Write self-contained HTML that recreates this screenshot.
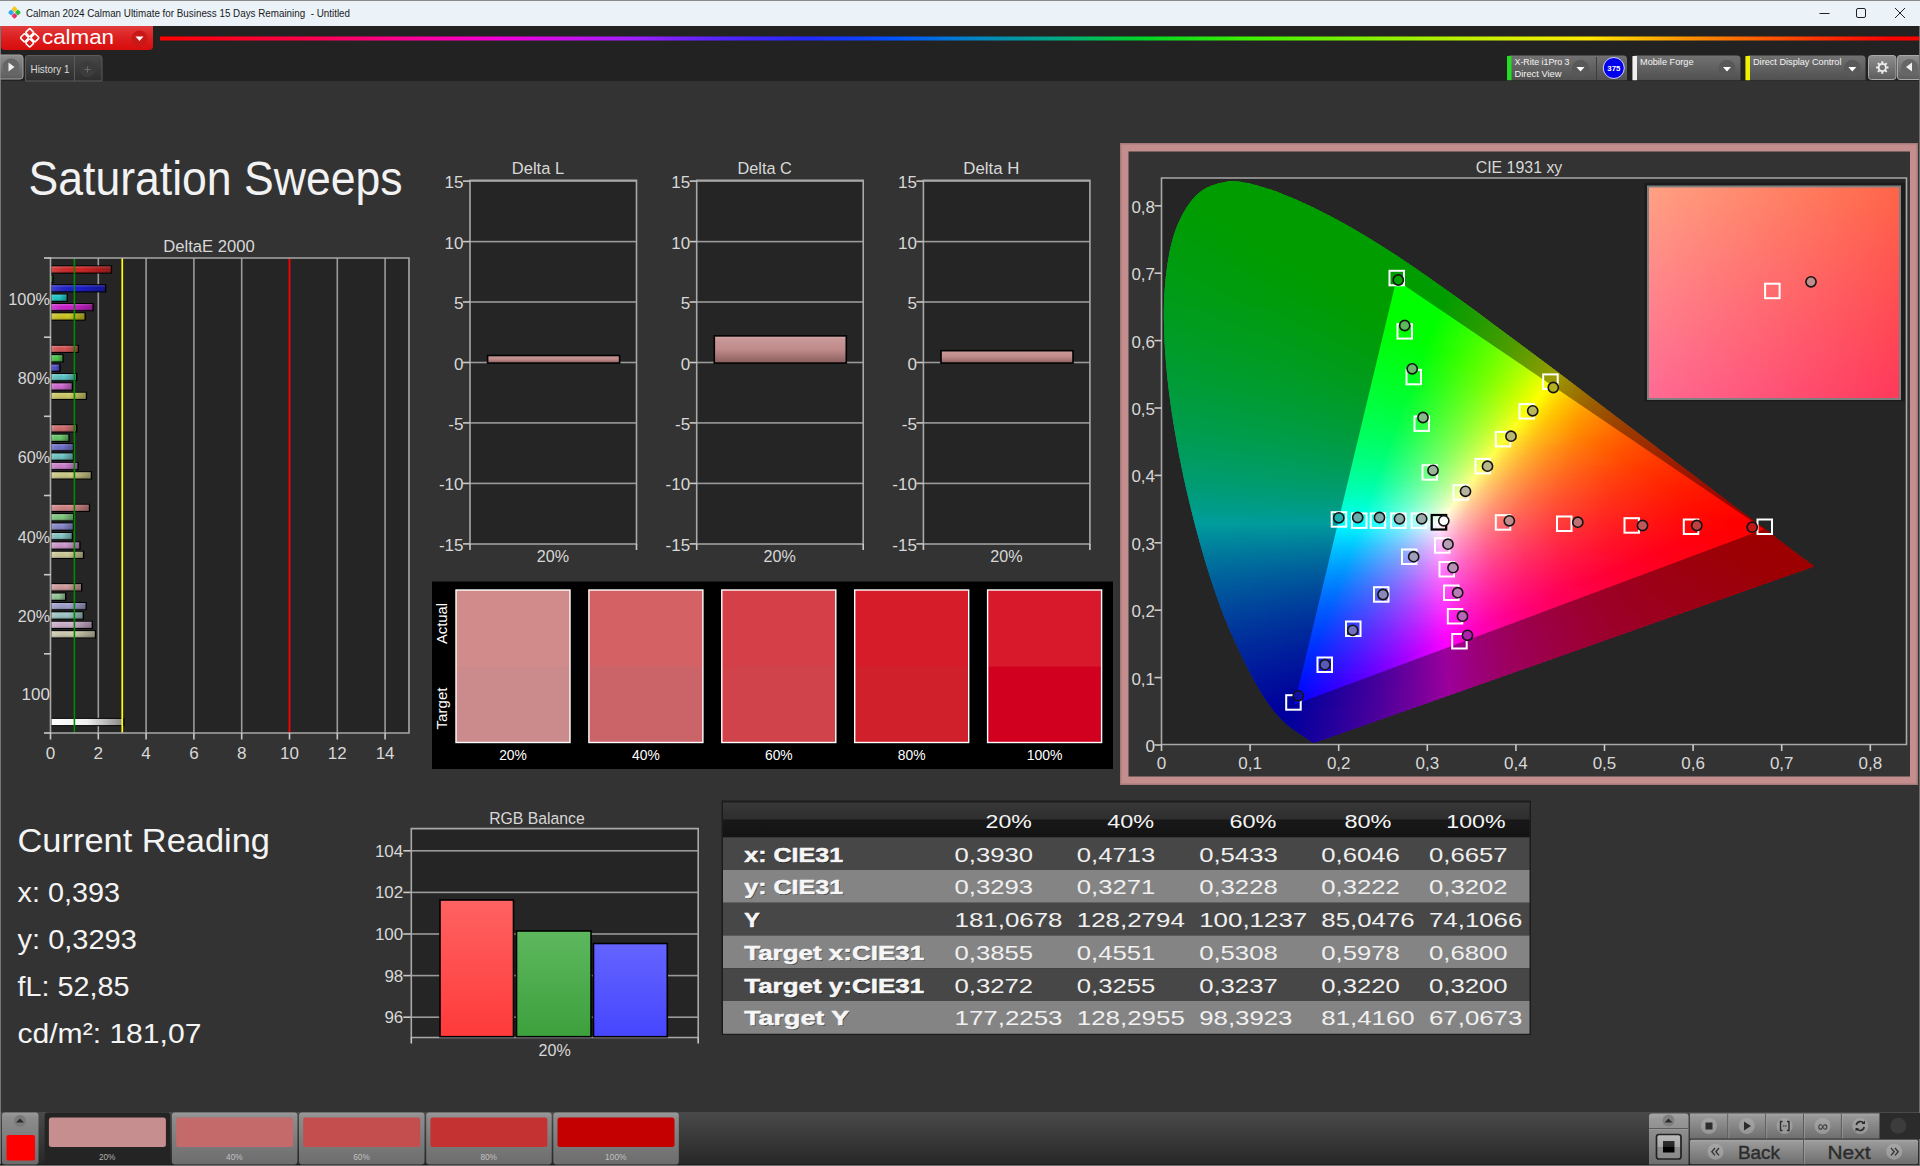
<!DOCTYPE html>
<html><head><meta charset="utf-8"><title>Calman</title><style>html,body{margin:0;padding:0;background:#333;overflow:hidden}svg{display:block}text{font-family:"Liberation Sans",sans-serif}</style></head><body>
<svg width="1920" height="1166" viewBox="0 0 1920 1166">
<defs>
<linearGradient id="rb" x1="0" x2="1"><stop offset="0" stop-color="#ff0000"/><stop offset="0.08" stop-color="#ff0048"/><stop offset="0.136" stop-color="#ff0090"/><stop offset="0.193" stop-color="#f400d8"/><stop offset="0.269" stop-color="#a020ff"/><stop offset="0.318" stop-color="#5424ff"/><stop offset="0.368" stop-color="#2428ff"/><stop offset="0.415" stop-color="#0050ff"/><stop offset="0.463" stop-color="#0084c4"/><stop offset="0.51" stop-color="#00a884"/><stop offset="0.557" stop-color="#00d428"/><stop offset="0.62" stop-color="#40f000"/><stop offset="0.7" stop-color="#90f000"/><stop offset="0.761" stop-color="#d0f000"/><stop offset="0.8125" stop-color="#ffe800"/><stop offset="0.869" stop-color="#ff9000"/><stop offset="0.932" stop-color="#ff4000"/><stop offset="0.983" stop-color="#ff0000"/><stop offset="1" stop-color="#ff0000"/></linearGradient>
<linearGradient id="redtab" x1="0" x2="0" y1="0" y2="1"><stop offset="0" stop-color="#e23c3c"/><stop offset=".5" stop-color="#dc1f1f"/><stop offset="1" stop-color="#d80c0c"/></linearGradient>
<linearGradient id="btn" x1="0" x2="0" y1="0" y2="1"><stop offset="0" stop-color="#8e8e8e"/><stop offset="1" stop-color="#5c5c5c"/></linearGradient>
<linearGradient id="tab" x1="0" x2="0" y1="0" y2="1"><stop offset="0" stop-color="#484848"/><stop offset="1" stop-color="#2e2e2e"/></linearGradient>
<linearGradient id="wid" x1="0" x2="0" y1="0" y2="1"><stop offset="0" stop-color="#727272"/><stop offset="1" stop-color="#505050"/></linearGradient>
<linearGradient id="gloss" x1="0" x2="0" y1="0" y2="1"><stop offset="0" stop-color="#fff" stop-opacity=".25"/><stop offset=".45" stop-color="#fff" stop-opacity="0"/><stop offset="1" stop-color="#000" stop-opacity=".25"/></linearGradient>
<linearGradient id="hsh" x1="0" x2="1"><stop offset="0" stop-color="#fff" stop-opacity=".15"/><stop offset=".5" stop-color="#000" stop-opacity="0"/><stop offset="1" stop-color="#000" stop-opacity=".3"/></linearGradient>
<linearGradient id="wbar" x1="0" x2="1"><stop offset="0" stop-color="#ffffff"/><stop offset=".5" stop-color="#f0f0f0"/><stop offset="1" stop-color="#8a8a8a"/></linearGradient>
<linearGradient id="pinkbar" x1="0" x2="0" y1="0" y2="1"><stop offset="0" stop-color="#e2b4b6"/><stop offset=".1" stop-color="#c89898"/><stop offset=".5" stop-color="#c08a8a"/><stop offset="1" stop-color="#8a5e5e"/></linearGradient>
<linearGradient id="pinkb" x1="0" x2="0" y1="0" y2="1"><stop offset="0" stop-color="#c89090"/><stop offset="1" stop-color="#b88484"/></linearGradient>
<clipPath id="hs"><path d="M1315.4 742.6C1315.4 742.6 1315.3 742.6 1315.1 742.7C1315.0 742.7 1314.9 742.7 1314.7 742.7C1314.5 742.7 1314.4 742.8 1314.1 742.7C1313.8 742.7 1313.6 742.8 1313.0 742.5C1312.5 742.3 1311.8 742.0 1310.8 741.3C1309.8 740.7 1308.6 739.8 1306.8 738.6C1305.0 737.4 1301.8 735.3 1299.8 734.0C1297.9 732.7 1296.7 732.0 1294.9 730.6C1293.0 729.3 1290.9 727.8 1288.6 725.9C1286.3 723.9 1284.0 722.1 1281.1 719.0C1278.1 715.8 1274.8 712.2 1270.9 706.9C1267.1 701.6 1262.9 695.7 1258.0 687.2C1253.2 678.8 1247.8 669.0 1241.8 656.2C1235.7 643.3 1228.5 628.5 1221.7 610.2C1214.9 591.9 1207.6 570.3 1200.9 546.4C1194.2 522.4 1187.0 494.2 1181.5 466.7C1175.9 439.3 1170.7 409.0 1167.8 381.6C1164.9 354.3 1163.2 326.8 1164.0 302.9C1164.9 279.0 1167.7 256.1 1172.9 238.3C1178.1 220.6 1186.2 205.9 1195.1 196.5C1204.1 187.1 1215.5 183.4 1226.6 181.8C1237.8 180.1 1250.2 183.7 1262.1 186.9C1274.1 190.0 1286.5 195.6 1298.2 200.6C1309.8 205.7 1321.0 211.3 1332.1 217.1C1343.2 222.9 1354.0 229.1 1364.8 235.5C1375.6 242.0 1386.3 248.9 1397.0 255.8C1407.7 262.8 1418.2 270.1 1428.8 277.5C1439.4 284.9 1450.0 292.5 1460.6 300.1C1471.2 307.8 1481.8 315.6 1492.4 323.4C1503.0 331.2 1513.6 339.1 1524.1 347.0C1534.6 354.9 1545.2 362.8 1555.6 370.6C1566.0 378.4 1576.3 386.3 1586.5 394.0C1596.6 401.6 1606.7 409.3 1616.4 416.7C1626.2 424.1 1635.9 431.5 1645.2 438.5C1654.5 445.5 1663.6 452.4 1672.2 458.9C1680.8 465.5 1689.2 471.8 1696.9 477.7C1704.5 483.5 1711.6 488.8 1718.3 493.9C1725.0 499.0 1731.4 503.8 1737.1 508.2C1742.9 512.5 1748.1 516.4 1752.8 520.0C1757.5 523.5 1761.7 526.7 1765.5 529.6C1769.3 532.5 1772.6 535.1 1775.7 537.4C1778.7 539.7 1781.3 541.6 1783.8 543.4C1786.2 545.3 1788.3 546.9 1790.3 548.4C1792.2 549.9 1794.0 551.3 1795.7 552.5C1797.3 553.8 1798.3 554.6 1800.1 555.9C1801.9 557.2 1804.7 559.3 1806.4 560.6C1808.0 561.8 1808.6 562.3 1809.9 563.3C1811.2 564.3 1813.4 565.9 1814.1 566.5Z"/></clipPath>
<linearGradient id="s0" gradientUnits="userSpaceOnUse" x1="1160" x2="1300"><stop offset="0" stop-color="#00ff00"/><stop offset="1" stop-color="#00ff00"/></linearGradient>
<linearGradient id="s1" gradientUnits="userSpaceOnUse" x1="1160" x2="1300"><stop offset="0" stop-color="#00ff01"/><stop offset="1" stop-color="#00ff00"/></linearGradient>
<linearGradient id="s2" gradientUnits="userSpaceOnUse" x1="1183" x2="1281"><stop offset="0" stop-color="#00ff00"/><stop offset="1" stop-color="#00ff00"/></linearGradient>
<linearGradient id="s3" gradientUnits="userSpaceOnUse" x1="1178" x2="1294"><stop offset="0" stop-color="#00ff00"/><stop offset="1" stop-color="#00ff00"/></linearGradient>
<linearGradient id="s4" gradientUnits="userSpaceOnUse" x1="1174" x2="1304"><stop offset="0" stop-color="#00ff00"/><stop offset="1" stop-color="#00ff00"/></linearGradient>
<linearGradient id="s5" gradientUnits="userSpaceOnUse" x1="1170" x2="1310"><stop offset="0" stop-color="#00ff01"/><stop offset="1" stop-color="#00ff00"/></linearGradient>
<linearGradient id="s6" gradientUnits="userSpaceOnUse" x1="1166" x2="1315"><stop offset="0" stop-color="#00ff03"/><stop offset="1" stop-color="#00ff00"/></linearGradient>
<linearGradient id="s7" gradientUnits="userSpaceOnUse" x1="1161" x2="1320"><stop offset="0" stop-color="#00ff04"/><stop offset="0.1509" stop-color="#00ff00"/><stop offset="1" stop-color="#00ff00"/></linearGradient>
<linearGradient id="s8" gradientUnits="userSpaceOnUse" x1="1157" x2="1325"><stop offset="0" stop-color="#00ff06"/><stop offset="0.1845" stop-color="#00ff00"/><stop offset="1" stop-color="#00ff00"/></linearGradient>
<linearGradient id="s9" gradientUnits="userSpaceOnUse" x1="1155" x2="1331"><stop offset="0" stop-color="#00ff07"/><stop offset="0.2102" stop-color="#00ff00"/><stop offset="1" stop-color="#00ff00"/></linearGradient>
<linearGradient id="s10" gradientUnits="userSpaceOnUse" x1="1154" x2="1336"><stop offset="0" stop-color="#00ff08"/><stop offset="0.2253" stop-color="#00ff00"/><stop offset="1" stop-color="#00ff00"/></linearGradient>
<linearGradient id="s11" gradientUnits="userSpaceOnUse" x1="1153" x2="1340"><stop offset="0" stop-color="#00ff08"/><stop offset="0.2406" stop-color="#00ff00"/><stop offset="1" stop-color="#00ff00"/></linearGradient>
<linearGradient id="s12" gradientUnits="userSpaceOnUse" x1="1152" x2="1345"><stop offset="0" stop-color="#00ff09"/><stop offset="0.2539" stop-color="#00ff00"/><stop offset="1" stop-color="#00ff00"/></linearGradient>
<linearGradient id="s13" gradientUnits="userSpaceOnUse" x1="1151" x2="1349"><stop offset="0" stop-color="#00ff0a"/><stop offset="0.2727" stop-color="#00ff00"/><stop offset="1" stop-color="#00ff00"/></linearGradient>
<linearGradient id="s14" gradientUnits="userSpaceOnUse" x1="1149" x2="1353"><stop offset="0" stop-color="#00ff0b"/><stop offset="0.2892" stop-color="#00ff00"/><stop offset="1" stop-color="#00ff00"/></linearGradient>
<linearGradient id="s15" gradientUnits="userSpaceOnUse" x1="1148" x2="1357"><stop offset="0" stop-color="#00ff0c"/><stop offset="0.3014" stop-color="#00ff00"/><stop offset="1" stop-color="#00ff00"/></linearGradient>
<linearGradient id="s16" gradientUnits="userSpaceOnUse" x1="1147" x2="1361"><stop offset="0" stop-color="#00ff0d"/><stop offset="0.3178" stop-color="#00ff00"/><stop offset="1" stop-color="#00ff00"/></linearGradient>
<linearGradient id="s17" gradientUnits="userSpaceOnUse" x1="1146" x2="1365"><stop offset="0" stop-color="#00ff0e"/><stop offset="0.3288" stop-color="#00ff00"/><stop offset="1" stop-color="#00ff00"/></linearGradient>
<linearGradient id="s18" gradientUnits="userSpaceOnUse" x1="1145" x2="1369"><stop offset="0" stop-color="#00ff0f"/><stop offset="0.3393" stop-color="#00ff00"/><stop offset="1" stop-color="#00ff00"/></linearGradient>
<linearGradient id="s19" gradientUnits="userSpaceOnUse" x1="1144" x2="1373"><stop offset="0" stop-color="#00ff0f"/><stop offset="0.3537" stop-color="#00ff00"/><stop offset="1" stop-color="#00ff00"/></linearGradient>
<linearGradient id="s20" gradientUnits="userSpaceOnUse" x1="1143" x2="1377"><stop offset="0" stop-color="#00ff10"/><stop offset="0.3632" stop-color="#00ff00"/><stop offset="1" stop-color="#00ff00"/></linearGradient>
<linearGradient id="s21" gradientUnits="userSpaceOnUse" x1="1142" x2="1380"><stop offset="0" stop-color="#00ff11"/><stop offset="0.3739" stop-color="#00ff00"/><stop offset="1" stop-color="#00ff00"/></linearGradient>
<linearGradient id="s22" gradientUnits="userSpaceOnUse" x1="1141" x2="1384"><stop offset="0" stop-color="#00ff12"/><stop offset="0.3827" stop-color="#00ff00"/><stop offset="1" stop-color="#00ff00"/></linearGradient>
<linearGradient id="s23" gradientUnits="userSpaceOnUse" x1="1140" x2="1387"><stop offset="0" stop-color="#00ff13"/><stop offset="0.3968" stop-color="#00ff00"/><stop offset="1" stop-color="#00ff00"/></linearGradient>
<linearGradient id="s24" gradientUnits="userSpaceOnUse" x1="1139" x2="1391"><stop offset="0" stop-color="#00ff14"/><stop offset="0.4048" stop-color="#00ff00"/><stop offset="1" stop-color="#00ff00"/></linearGradient>
<linearGradient id="s25" gradientUnits="userSpaceOnUse" x1="1138" x2="1395"><stop offset="0" stop-color="#00ff15"/><stop offset="0.4125" stop-color="#00ff00"/><stop offset="1" stop-color="#00ff00"/></linearGradient>
<linearGradient id="s26" gradientUnits="userSpaceOnUse" x1="1137" x2="1398"><stop offset="0" stop-color="#00ff16"/><stop offset="0.4253" stop-color="#00ff00"/><stop offset="1" stop-color="#00ff00"/></linearGradient>
<linearGradient id="s27" gradientUnits="userSpaceOnUse" x1="1136" x2="1402"><stop offset="0" stop-color="#00ff17"/><stop offset="0.4323" stop-color="#00ff00"/><stop offset="1" stop-color="#00ff00"/></linearGradient>
<linearGradient id="s28" gradientUnits="userSpaceOnUse" x1="1135" x2="1405"><stop offset="0" stop-color="#00ff18"/><stop offset="0.4407" stop-color="#00ff00"/><stop offset="1" stop-color="#00ff00"/></linearGradient>
<linearGradient id="s29" gradientUnits="userSpaceOnUse" x1="1134" x2="1408"><stop offset="0" stop-color="#00ff18"/><stop offset="0.4526" stop-color="#00ff00"/><stop offset="1" stop-color="#00ff00"/></linearGradient>
<linearGradient id="s30" gradientUnits="userSpaceOnUse" x1="1133" x2="1411"><stop offset="0" stop-color="#00ff19"/><stop offset="0.4604" stop-color="#00ff00"/><stop offset="1" stop-color="#00ff00"/></linearGradient>
<linearGradient id="s31" gradientUnits="userSpaceOnUse" x1="1133" x2="1415"><stop offset="0" stop-color="#00ff1a"/><stop offset="0.4645" stop-color="#00ff00"/><stop offset="1" stop-color="#00ff00"/></linearGradient>
<linearGradient id="s32" gradientUnits="userSpaceOnUse" x1="1133" x2="1418"><stop offset="0" stop-color="#00ff1b"/><stop offset="0.4702" stop-color="#00ff00"/><stop offset="1" stop-color="#00ff00"/></linearGradient>
<linearGradient id="s33" gradientUnits="userSpaceOnUse" x1="1132" x2="1421"><stop offset="0" stop-color="#00ff1c"/><stop offset="0.481" stop-color="#00ff00"/><stop offset="1" stop-color="#00ff00"/></linearGradient>
<linearGradient id="s34" gradientUnits="userSpaceOnUse" x1="1132" x2="1424"><stop offset="0" stop-color="#00ff1d"/><stop offset="0.4863" stop-color="#00ff00"/><stop offset="1" stop-color="#00ff00"/></linearGradient>
<linearGradient id="s35" gradientUnits="userSpaceOnUse" x1="1132" x2="1427"><stop offset="0" stop-color="#00ff1d"/><stop offset="0.4915" stop-color="#00ff00"/><stop offset="1" stop-color="#00ff00"/></linearGradient>
<linearGradient id="s36" gradientUnits="userSpaceOnUse" x1="1131" x2="1430"><stop offset="0" stop-color="#00ff1e"/><stop offset="0.5017" stop-color="#00ff00"/><stop offset="1" stop-color="#00ff00"/></linearGradient>
<linearGradient id="s37" gradientUnits="userSpaceOnUse" x1="1131" x2="1434"><stop offset="0" stop-color="#00ff1f"/><stop offset="0.505" stop-color="#00ff00"/><stop offset="1" stop-color="#00ff00"/></linearGradient>
<linearGradient id="s38" gradientUnits="userSpaceOnUse" x1="1131" x2="1437"><stop offset="0" stop-color="#00ff20"/><stop offset="0.5098" stop-color="#00ff00"/><stop offset="1" stop-color="#00ff00"/></linearGradient>
<linearGradient id="s39" gradientUnits="userSpaceOnUse" x1="1131" x2="1440"><stop offset="0" stop-color="#00ff21"/><stop offset="0.5178" stop-color="#00ff00"/><stop offset="1" stop-color="#00ff00"/></linearGradient>
<linearGradient id="s40" gradientUnits="userSpaceOnUse" x1="1130" x2="1443"><stop offset="0" stop-color="#00ff22"/><stop offset="0.524" stop-color="#00ff00"/><stop offset="1" stop-color="#00ff00"/></linearGradient>
<linearGradient id="s41" gradientUnits="userSpaceOnUse" x1="1130" x2="1446"><stop offset="0" stop-color="#00ff23"/><stop offset="0.5285" stop-color="#00ff00"/><stop offset="1" stop-color="#00ff00"/></linearGradient>
<linearGradient id="s42" gradientUnits="userSpaceOnUse" x1="1130" x2="1449"><stop offset="0" stop-color="#00ff23"/><stop offset="0.5361" stop-color="#00ff00"/><stop offset="1" stop-color="#00ff00"/></linearGradient>
<linearGradient id="s43" gradientUnits="userSpaceOnUse" x1="1130" x2="1451"><stop offset="0" stop-color="#00ff24"/><stop offset="0.5421" stop-color="#00ff00"/><stop offset="1" stop-color="#00ff00"/></linearGradient>
<linearGradient id="s44" gradientUnits="userSpaceOnUse" x1="1129" x2="1454"><stop offset="0" stop-color="#00ff25"/><stop offset="0.5477" stop-color="#00ff00"/><stop offset="1" stop-color="#00ff00"/></linearGradient>
<linearGradient id="s45" gradientUnits="userSpaceOnUse" x1="1129" x2="1457"><stop offset="0" stop-color="#00ff26"/><stop offset="0.5518" stop-color="#00ff00"/><stop offset="0.9878" stop-color="#00ff00"/><stop offset="1" stop-color="#04ff00"/></linearGradient>
<linearGradient id="s46" gradientUnits="userSpaceOnUse" x1="1129" x2="1460"><stop offset="0" stop-color="#00ff27"/><stop offset="0.5589" stop-color="#00ff00"/><stop offset="0.9758" stop-color="#00ff00"/><stop offset="1" stop-color="#08ff00"/></linearGradient>
<linearGradient id="s47" gradientUnits="userSpaceOnUse" x1="1128" x2="1463"><stop offset="0" stop-color="#00ff28"/><stop offset="0.5642" stop-color="#00ff00"/><stop offset="0.9642" stop-color="#00ff00"/><stop offset="1" stop-color="#0dff00"/></linearGradient>
<linearGradient id="s48" gradientUnits="userSpaceOnUse" x1="1128" x2="1466"><stop offset="0" stop-color="#00ff29"/><stop offset="0.568" stop-color="#00ff00"/><stop offset="0.9527" stop-color="#00ff00"/><stop offset="1" stop-color="#11ff00"/></linearGradient>
<linearGradient id="s49" gradientUnits="userSpaceOnUse" x1="1128" x2="1469"><stop offset="0" stop-color="#00ff2a"/><stop offset="0.5748" stop-color="#00ff00"/><stop offset="0.9443" stop-color="#00ff00"/><stop offset="1" stop-color="#15ff00"/></linearGradient>
<linearGradient id="s50" gradientUnits="userSpaceOnUse" x1="1128" x2="1472"><stop offset="0" stop-color="#00ff2b"/><stop offset="0.5785" stop-color="#00ff00"/><stop offset="0.9331" stop-color="#00ff00"/><stop offset="1" stop-color="#19ff00"/></linearGradient>
<linearGradient id="s51" gradientUnits="userSpaceOnUse" x1="1127" x2="1475"><stop offset="0" stop-color="#00ff2c"/><stop offset="0.5833" stop-color="#00ff00"/><stop offset="0.9224" stop-color="#00ff00"/><stop offset="1" stop-color="#1eff00"/></linearGradient>
<linearGradient id="s52" gradientUnits="userSpaceOnUse" x1="1127" x2="1478"><stop offset="0" stop-color="#00ff2d"/><stop offset="0.5897" stop-color="#00ff00"/><stop offset="0.9145" stop-color="#00ff00"/><stop offset="1" stop-color="#23ff00"/></linearGradient>
<linearGradient id="s53" gradientUnits="userSpaceOnUse" x1="1127" x2="1480"><stop offset="0" stop-color="#00ff2d"/><stop offset="0.5949" stop-color="#00ff00"/><stop offset="0.9065" stop-color="#00ff00"/><stop offset="1" stop-color="#26ff00"/></linearGradient>
<linearGradient id="s54" gradientUnits="userSpaceOnUse" x1="1126" x2="1483"><stop offset="0" stop-color="#00ff2f"/><stop offset="0.5994" stop-color="#00ff00"/><stop offset="0.8964" stop-color="#00ff00"/><stop offset="1" stop-color="#2bff00"/></linearGradient>
<linearGradient id="s55" gradientUnits="userSpaceOnUse" x1="1126" x2="1486"><stop offset="0" stop-color="#00ff2f"/><stop offset="0.6028" stop-color="#00ff00"/><stop offset="0.8861" stop-color="#00ff00"/><stop offset="1" stop-color="#30ff00"/></linearGradient>
<linearGradient id="s56" gradientUnits="userSpaceOnUse" x1="1126" x2="1489"><stop offset="0" stop-color="#00ff30"/><stop offset="0.6088" stop-color="#00ff00"/><stop offset="0.8788" stop-color="#00ff00"/><stop offset="1" stop-color="#35ff00"/></linearGradient>
<linearGradient id="s57" gradientUnits="userSpaceOnUse" x1="1126" x2="1492"><stop offset="0" stop-color="#00ff31"/><stop offset="0.612" stop-color="#00ff00"/><stop offset="0.8689" stop-color="#00ff00"/><stop offset="1" stop-color="#3aff00"/></linearGradient>
<linearGradient id="s58" gradientUnits="userSpaceOnUse" x1="1125" x2="1494"><stop offset="0" stop-color="#00ff32"/><stop offset="0.6179" stop-color="#00ff00"/><stop offset="0.8618" stop-color="#00ff00"/><stop offset="1" stop-color="#3dff00"/></linearGradient>
<linearGradient id="s59" gradientUnits="userSpaceOnUse" x1="1125" x2="1497"><stop offset="0" stop-color="#00ff33"/><stop offset="0.6237" stop-color="#00ff00"/><stop offset="0.8548" stop-color="#00ff00"/><stop offset="1" stop-color="#43ff00"/></linearGradient>
<linearGradient id="s60" gradientUnits="userSpaceOnUse" x1="1125" x2="1500"><stop offset="0" stop-color="#00ff34"/><stop offset="0.6267" stop-color="#00ff00"/><stop offset="0.8453" stop-color="#00ff00"/><stop offset="1" stop-color="#48ff00"/></linearGradient>
<linearGradient id="s61" gradientUnits="userSpaceOnUse" x1="1125" x2="1503"><stop offset="0" stop-color="#00ff35"/><stop offset="0.6296" stop-color="#00ff00"/><stop offset="0.836" stop-color="#00ff00"/><stop offset="1" stop-color="#4dff00"/></linearGradient>
<linearGradient id="s62" gradientUnits="userSpaceOnUse" x1="1125" x2="1505"><stop offset="0" stop-color="#00ff36"/><stop offset="0.6368" stop-color="#00ff00"/><stop offset="0.8289" stop-color="#00ff00"/><stop offset="1" stop-color="#51ff00"/></linearGradient>
<linearGradient id="s63" gradientUnits="userSpaceOnUse" x1="1125" x2="1508"><stop offset="0" stop-color="#00ff37"/><stop offset="0.6397" stop-color="#00ff00"/><stop offset="0.8225" stop-color="#00ff00"/><stop offset="1" stop-color="#57ff00"/></linearGradient>
<linearGradient id="s64" gradientUnits="userSpaceOnUse" x1="1125" x2="1511"><stop offset="0" stop-color="#00ff38"/><stop offset="0.342" stop-color="#00ff1e"/><stop offset="0.6425" stop-color="#00ff00"/><stop offset="0.8135" stop-color="#00ff00"/><stop offset="1" stop-color="#5dff00"/></linearGradient>
<linearGradient id="s65" gradientUnits="userSpaceOnUse" x1="1125" x2="1514"><stop offset="0" stop-color="#00ff39"/><stop offset="0.3419" stop-color="#00ff1f"/><stop offset="0.6478" stop-color="#00ff00"/><stop offset="0.8046" stop-color="#00ff00"/><stop offset="1" stop-color="#63ff00"/></linearGradient>
<linearGradient id="s66" gradientUnits="userSpaceOnUse" x1="1125" x2="1516"><stop offset="0" stop-color="#00ff3a"/><stop offset="0.3478" stop-color="#00ff1f"/><stop offset="0.6522" stop-color="#00ff00"/><stop offset="0.798" stop-color="#00ff00"/><stop offset="1" stop-color="#67ff00"/></linearGradient>
<linearGradient id="s67" gradientUnits="userSpaceOnUse" x1="1125" x2="1519"><stop offset="0" stop-color="#00ff3b"/><stop offset="0.3503" stop-color="#00ff20"/><stop offset="0.6548" stop-color="#00ff00"/><stop offset="0.7919" stop-color="#00ff00"/><stop offset="1" stop-color="#6dff00"/></linearGradient>
<linearGradient id="s68" gradientUnits="userSpaceOnUse" x1="1125" x2="1522"><stop offset="0" stop-color="#00ff3c"/><stop offset="0.3501" stop-color="#00ff20"/><stop offset="0.6574" stop-color="#00ff00"/><stop offset="0.7834" stop-color="#00ff00"/><stop offset="0.8917" stop-color="#36ff00"/><stop offset="1" stop-color="#74ff00"/></linearGradient>
<linearGradient id="s69" gradientUnits="userSpaceOnUse" x1="1125" x2="1525"><stop offset="0" stop-color="#00ff3d"/><stop offset="0.3525" stop-color="#00ff21"/><stop offset="0.6625" stop-color="#00ff00"/><stop offset="0.775" stop-color="#00ff00"/><stop offset="0.885" stop-color="#38ff00"/><stop offset="1" stop-color="#7aff00"/></linearGradient>
<linearGradient id="s70" gradientUnits="userSpaceOnUse" x1="1125" x2="1527"><stop offset="0" stop-color="#00ff3e"/><stop offset="0.3557" stop-color="#00ff22"/><stop offset="0.6667" stop-color="#00ff00"/><stop offset="0.7711" stop-color="#00ff00"/><stop offset="0.8881" stop-color="#3dff00"/><stop offset="1" stop-color="#7fff00"/></linearGradient>
<linearGradient id="s71" gradientUnits="userSpaceOnUse" x1="1125" x2="1530"><stop offset="0" stop-color="#00ff3f"/><stop offset="0.358" stop-color="#00ff22"/><stop offset="0.6691" stop-color="#00ff00"/><stop offset="0.763" stop-color="#00ff00"/><stop offset="0.884" stop-color="#40ff00"/><stop offset="1" stop-color="#86ff00"/></linearGradient>
<linearGradient id="s72" gradientUnits="userSpaceOnUse" x1="1125" x2="1533"><stop offset="0" stop-color="#00ff40"/><stop offset="0.3603" stop-color="#00ff23"/><stop offset="0.674" stop-color="#00ff00"/><stop offset="0.7549" stop-color="#00ff00"/><stop offset="0.8799" stop-color="#43ff00"/><stop offset="1" stop-color="#8cff00"/></linearGradient>
<linearGradient id="s73" gradientUnits="userSpaceOnUse" x1="1125" x2="1535"><stop offset="0" stop-color="#00ff42"/><stop offset="0.3634" stop-color="#00ff23"/><stop offset="0.678" stop-color="#00ff00"/><stop offset="0.7488" stop-color="#00ff00"/><stop offset="0.8732" stop-color="#43ff00"/><stop offset="1" stop-color="#92ff00"/></linearGradient>
<linearGradient id="s74" gradientUnits="userSpaceOnUse" x1="1126" x2="1538"><stop offset="0" stop-color="#00ff42"/><stop offset="0.3665" stop-color="#00ff24"/><stop offset="0.6796" stop-color="#00ff00"/><stop offset="0.7427" stop-color="#00ff00"/><stop offset="0.8762" stop-color="#4aff00"/><stop offset="1" stop-color="#99ff00"/></linearGradient>
<linearGradient id="s75" gradientUnits="userSpaceOnUse" x1="1126" x2="1541"><stop offset="0" stop-color="#00ff43"/><stop offset="0.3663" stop-color="#00ff25"/><stop offset="0.6843" stop-color="#00ff00"/><stop offset="0.7349" stop-color="#00ff00"/><stop offset="0.8723" stop-color="#4dff00"/><stop offset="1" stop-color="#a0ff00"/></linearGradient>
<linearGradient id="s76" gradientUnits="userSpaceOnUse" x1="1126" x2="1544"><stop offset="0" stop-color="#00ff45"/><stop offset="0.3708" stop-color="#00ff25"/><stop offset="0.6866" stop-color="#00ff00"/><stop offset="0.7273" stop-color="#00ff00"/><stop offset="0.866" stop-color="#4eff00"/><stop offset="1" stop-color="#a8ff00"/></linearGradient>
<linearGradient id="s77" gradientUnits="userSpaceOnUse" x1="1126" x2="1546"><stop offset="0" stop-color="#00ff46"/><stop offset="0.3238" stop-color="#00ff2b"/><stop offset="0.7238" stop-color="#00ff00"/><stop offset="0.8667" stop-color="#53ff00"/><stop offset="1" stop-color="#adff00"/></linearGradient>
<linearGradient id="s78" gradientUnits="userSpaceOnUse" x1="1126" x2="1549"><stop offset="0" stop-color="#00ff47"/><stop offset="0.3428" stop-color="#00ff2a"/><stop offset="0.7163" stop-color="#00ff00"/><stop offset="0.8652" stop-color="#57ff00"/><stop offset="1" stop-color="#b5ff00"/></linearGradient>
<linearGradient id="s79" gradientUnits="userSpaceOnUse" x1="1126" x2="1552"><stop offset="0" stop-color="#00ff48"/><stop offset="0.3615" stop-color="#00ff29"/><stop offset="0.7089" stop-color="#00ff00"/><stop offset="0.8592" stop-color="#59ff00"/><stop offset="1" stop-color="#bdff00"/></linearGradient>
<linearGradient id="s80" gradientUnits="userSpaceOnUse" x1="1126" x2="1554"><stop offset="0" stop-color="#00ff49"/><stop offset="0.3785" stop-color="#00ff28"/><stop offset="0.7033" stop-color="#00ff00"/><stop offset="0.8551" stop-color="#5bff00"/><stop offset="1" stop-color="#c4ff00"/></linearGradient>
<linearGradient id="s81" gradientUnits="userSpaceOnUse" x1="1126" x2="1557"><stop offset="0" stop-color="#00ff4a"/><stop offset="0.3782" stop-color="#00ff29"/><stop offset="0.6984" stop-color="#00ff01"/><stop offset="0.8561" stop-color="#61ff00"/><stop offset="1" stop-color="#ccff00"/></linearGradient>
<linearGradient id="s82" gradientUnits="userSpaceOnUse" x1="1126" x2="1560"><stop offset="0" stop-color="#00ff4b"/><stop offset="0.3756" stop-color="#00ff2a"/><stop offset="0.6912" stop-color="#00ff02"/><stop offset="0.8525" stop-color="#64ff00"/><stop offset="1" stop-color="#d5ff00"/></linearGradient>
<linearGradient id="s83" gradientUnits="userSpaceOnUse" x1="1126" x2="1562"><stop offset="0" stop-color="#00ff4d"/><stop offset="0.3716" stop-color="#00ff2b"/><stop offset="0.6858" stop-color="#00ff04"/><stop offset="0.8486" stop-color="#66ff00"/><stop offset="1" stop-color="#dbff00"/></linearGradient>
<linearGradient id="s84" gradientUnits="userSpaceOnUse" x1="1127" x2="1565"><stop offset="0" stop-color="#00ff4e"/><stop offset="0.3676" stop-color="#00ff2d"/><stop offset="0.6781" stop-color="#00ff05"/><stop offset="0.7146" stop-color="#15ff00"/><stop offset="0.8447" stop-color="#69ff00"/><stop offset="1" stop-color="#e4ff00"/></linearGradient>
<linearGradient id="s85" gradientUnits="userSpaceOnUse" x1="1127" x2="1568"><stop offset="0" stop-color="#00ff4f"/><stop offset="0.3651" stop-color="#00ff2e"/><stop offset="0.6735" stop-color="#00ff07"/><stop offset="0.7166" stop-color="#1aff00"/><stop offset="0.8458" stop-color="#70ff00"/><stop offset="0.9252" stop-color="#adff00"/><stop offset="1" stop-color="#eeff00"/></linearGradient>
<linearGradient id="s86" gradientUnits="userSpaceOnUse" x1="1127" x2="1570"><stop offset="0" stop-color="#00ff50"/><stop offset="0.3634" stop-color="#00ff2f"/><stop offset="0.6682" stop-color="#00ff08"/><stop offset="0.7201" stop-color="#1fff00"/><stop offset="0.8442" stop-color="#74ff00"/><stop offset="0.9233" stop-color="#b2ff00"/><stop offset="1" stop-color="#f5ff00"/></linearGradient>
<linearGradient id="s87" gradientUnits="userSpaceOnUse" x1="1127" x2="1573"><stop offset="0" stop-color="#00ff51"/><stop offset="0.3587" stop-color="#00ff31"/><stop offset="0.6614" stop-color="#00ff0a"/><stop offset="0.7242" stop-color="#26ff00"/><stop offset="0.8386" stop-color="#76ff00"/><stop offset="0.9215" stop-color="#b8ff00"/><stop offset="1" stop-color="#ffff00"/></linearGradient>
<linearGradient id="s88" gradientUnits="userSpaceOnUse" x1="1127" x2="1576"><stop offset="0" stop-color="#00ff52"/><stop offset="0.3563" stop-color="#00ff32"/><stop offset="0.657" stop-color="#00ff0b"/><stop offset="0.7261" stop-color="#2cff00"/><stop offset="0.8129" stop-color="#69ff00"/><stop offset="0.9042" stop-color="#b1ff00"/><stop offset="0.9889" stop-color="#feff00"/><stop offset="1" stop-color="#fff600"/></linearGradient>
<linearGradient id="s89" gradientUnits="userSpaceOnUse" x1="1127" x2="1578"><stop offset="0" stop-color="#00ff54"/><stop offset="0.3548" stop-color="#00ff33"/><stop offset="0.6519" stop-color="#00ff0d"/><stop offset="0.7295" stop-color="#32ff00"/><stop offset="0.8248" stop-color="#76ff00"/><stop offset="0.9047" stop-color="#b8ff00"/><stop offset="0.98" stop-color="#fdff00"/><stop offset="1" stop-color="#ffee00"/></linearGradient>
<linearGradient id="s90" gradientUnits="userSpaceOnUse" x1="1127" x2="1581"><stop offset="0" stop-color="#00ff55"/><stop offset="0.3502" stop-color="#00ff35"/><stop offset="0.6454" stop-color="#00ff0e"/><stop offset="0.7313" stop-color="#38ff00"/><stop offset="0.8172" stop-color="#77ff00"/><stop offset="0.8965" stop-color="#b8ff00"/><stop offset="0.9714" stop-color="#feff00"/><stop offset="1" stop-color="#ffe600"/></linearGradient>
<linearGradient id="s91" gradientUnits="userSpaceOnUse" x1="1127" x2="1584"><stop offset="0" stop-color="#00ff56"/><stop offset="0.3479" stop-color="#00ff36"/><stop offset="0.6389" stop-color="#00ff10"/><stop offset="0.7352" stop-color="#3fff00"/><stop offset="0.8074" stop-color="#75ff00"/><stop offset="0.8862" stop-color="#b7ff00"/><stop offset="0.9606" stop-color="#fdff00"/><stop offset="1" stop-color="#ffdd00"/></linearGradient>
<linearGradient id="s92" gradientUnits="userSpaceOnUse" x1="1127" x2="1586"><stop offset="0" stop-color="#00ff57"/><stop offset="0.3464" stop-color="#00ff37"/><stop offset="0.6362" stop-color="#00ff11"/><stop offset="0.7386" stop-color="#46ff00"/><stop offset="0.8039" stop-color="#77ff00"/><stop offset="0.8824" stop-color="#baff00"/><stop offset="0.9542" stop-color="#ffff00"/><stop offset="1" stop-color="#ffd700"/></linearGradient>
<linearGradient id="s93" gradientUnits="userSpaceOnUse" x1="1127" x2="1589"><stop offset="0" stop-color="#00ff59"/><stop offset="0.342" stop-color="#00ff39"/><stop offset="0.6299" stop-color="#00ff13"/><stop offset="0.7403" stop-color="#4cff00"/><stop offset="0.7965" stop-color="#78ff00"/><stop offset="0.8723" stop-color="#b9ff00"/><stop offset="0.9437" stop-color="#feff00"/><stop offset="1" stop-color="#ffcf00"/></linearGradient>
<linearGradient id="s94" gradientUnits="userSpaceOnUse" x1="1128" x2="1592"><stop offset="0" stop-color="#00ff5a"/><stop offset="0.3384" stop-color="#00ff3a"/><stop offset="0.6228" stop-color="#00ff15"/><stop offset="0.7414" stop-color="#53ff00"/><stop offset="0.7866" stop-color="#76ff00"/><stop offset="0.8642" stop-color="#b9ff00"/><stop offset="0.9353" stop-color="#ffff00"/><stop offset="1" stop-color="#ffc700"/></linearGradient>
<linearGradient id="s95" gradientUnits="userSpaceOnUse" x1="1128" x2="1594"><stop offset="0" stop-color="#00ff5b"/><stop offset="0.3369" stop-color="#00ff3c"/><stop offset="0.618" stop-color="#00ff16"/><stop offset="0.7468" stop-color="#5bff00"/><stop offset="0.779" stop-color="#75ff00"/><stop offset="0.8562" stop-color="#b8ff00"/><stop offset="0.927" stop-color="#feff00"/><stop offset="1" stop-color="#ffc200"/></linearGradient>
<linearGradient id="s96" gradientUnits="userSpaceOnUse" x1="1128" x2="1597"><stop offset="0" stop-color="#00ff5c"/><stop offset="0.3348" stop-color="#00ff3d"/><stop offset="0.6141" stop-color="#00ff18"/><stop offset="0.7484" stop-color="#62ff00"/><stop offset="0.774" stop-color="#77ff00"/><stop offset="0.8465" stop-color="#b7ff00"/><stop offset="0.9168" stop-color="#fdff00"/><stop offset="1" stop-color="#ffbb00"/></linearGradient>
<linearGradient id="s97" gradientUnits="userSpaceOnUse" x1="1128" x2="1600"><stop offset="0" stop-color="#00ff5e"/><stop offset="0.3305" stop-color="#00ff3f"/><stop offset="0.6081" stop-color="#00ff1a"/><stop offset="0.6886" stop-color="#39ff0c"/><stop offset="0.7669" stop-color="#77ff00"/><stop offset="0.8411" stop-color="#baff00"/><stop offset="0.9089" stop-color="#feff00"/><stop offset="0.9534" stop-color="#ffd600"/><stop offset="1" stop-color="#ffb400"/></linearGradient>
<linearGradient id="s98" gradientUnits="userSpaceOnUse" x1="1128" x2="1602"><stop offset="0" stop-color="#00ff5f"/><stop offset="0.3291" stop-color="#00ff40"/><stop offset="0.6034" stop-color="#00ff1b"/><stop offset="0.6814" stop-color="#37ff0e"/><stop offset="0.7595" stop-color="#76ff00"/><stop offset="0.8291" stop-color="#b5ff00"/><stop offset="0.903" stop-color="#fffe00"/><stop offset="0.9473" stop-color="#ffd400"/><stop offset="1" stop-color="#ffaf00"/></linearGradient>
<linearGradient id="s99" gradientUnits="userSpaceOnUse" x1="1128" x2="1605"><stop offset="0" stop-color="#00ff61"/><stop offset="0.327" stop-color="#00ff42"/><stop offset="0.5996" stop-color="#01ff1d"/><stop offset="0.6792" stop-color="#3aff0f"/><stop offset="0.7547" stop-color="#78ff01"/><stop offset="0.826" stop-color="#b9ff00"/><stop offset="0.8931" stop-color="#ffff00"/><stop offset="0.9434" stop-color="#ffd000"/><stop offset="1" stop-color="#ffa900"/></linearGradient>
<linearGradient id="s100" gradientUnits="userSpaceOnUse" x1="1128" x2="1608"><stop offset="0" stop-color="#00ff62"/><stop offset="0.3229" stop-color="#00ff43"/><stop offset="0.5938" stop-color="#00ff1f"/><stop offset="0.6729" stop-color="#3aff11"/><stop offset="0.7479" stop-color="#78ff02"/><stop offset="0.8167" stop-color="#b8ff00"/><stop offset="0.8833" stop-color="#feff00"/><stop offset="0.9396" stop-color="#ffcb00"/><stop offset="1" stop-color="#ffa300"/></linearGradient>
<linearGradient id="s101" gradientUnits="userSpaceOnUse" x1="1128" x2="1610"><stop offset="0" stop-color="#00ff63"/><stop offset="0.3216" stop-color="#00ff45"/><stop offset="0.5892" stop-color="#00ff20"/><stop offset="0.666" stop-color="#38ff13"/><stop offset="0.7407" stop-color="#77ff05"/><stop offset="0.8091" stop-color="#b7ff00"/><stop offset="0.8776" stop-color="#ffff00"/><stop offset="0.9336" stop-color="#ffca00"/><stop offset="1" stop-color="#ff9e00"/></linearGradient>
<linearGradient id="s102" gradientUnits="userSpaceOnUse" x1="1128" x2="1613"><stop offset="0" stop-color="#00ff65"/><stop offset="0.3175" stop-color="#00ff47"/><stop offset="0.5835" stop-color="#00ff22"/><stop offset="0.6557" stop-color="#35ff16"/><stop offset="0.732" stop-color="#75ff07"/><stop offset="0.7649" stop-color="#93ff00"/><stop offset="0.868" stop-color="#feff00"/><stop offset="0.9278" stop-color="#ffc700"/><stop offset="1" stop-color="#ff9900"/></linearGradient>
<linearGradient id="s103" gradientUnits="userSpaceOnUse" x1="1129" x2="1615"><stop offset="0" stop-color="#00ff66"/><stop offset="0.3169" stop-color="#00ff48"/><stop offset="0.5802" stop-color="#00ff24"/><stop offset="0.6564" stop-color="#3aff17"/><stop offset="0.7284" stop-color="#77ff09"/><stop offset="0.7695" stop-color="#9eff00"/><stop offset="0.8621" stop-color="#fffe00"/><stop offset="0.9239" stop-color="#ffc400"/><stop offset="1" stop-color="#ff9400"/></linearGradient>
<linearGradient id="s104" gradientUnits="userSpaceOnUse" x1="1129" x2="1618"><stop offset="0" stop-color="#00ff67"/><stop offset="0.3129" stop-color="#00ff4a"/><stop offset="0.5746" stop-color="#00ff26"/><stop offset="0.6503" stop-color="#3aff19"/><stop offset="0.7219" stop-color="#78ff0b"/><stop offset="0.771" stop-color="#a7ff00"/><stop offset="0.8528" stop-color="#ffff00"/><stop offset="0.9182" stop-color="#ffc100"/><stop offset="1" stop-color="#ff8f00"/></linearGradient>
<linearGradient id="s105" gradientUnits="userSpaceOnUse" x1="1129" x2="1621"><stop offset="0" stop-color="#00ff69"/><stop offset="0.311" stop-color="#00ff4b"/><stop offset="0.5691" stop-color="#00ff28"/><stop offset="0.6423" stop-color="#38ff1b"/><stop offset="0.7134" stop-color="#76ff0d"/><stop offset="0.7724" stop-color="#b0ff00"/><stop offset="0.8435" stop-color="#feff00"/><stop offset="0.9146" stop-color="#ffbd00"/><stop offset="1" stop-color="#ff8a00"/></linearGradient>
<linearGradient id="s106" gradientUnits="userSpaceOnUse" x1="1130" x2="1623"><stop offset="0" stop-color="#00ff6a"/><stop offset="0.3083" stop-color="#00ff4d"/><stop offset="0.5639" stop-color="#00ff2a"/><stop offset="0.6329" stop-color="#35ff1e"/><stop offset="0.7059" stop-color="#75ff0f"/><stop offset="0.7748" stop-color="#b9ff00"/><stop offset="0.8377" stop-color="#ffff00"/><stop offset="0.8702" stop-color="#ffdc00"/><stop offset="0.9087" stop-color="#ffbc00"/><stop offset="1" stop-color="#ff8600"/></linearGradient>
<linearGradient id="s107" gradientUnits="userSpaceOnUse" x1="1130" x2="1626"><stop offset="0" stop-color="#00ff6c"/><stop offset="0.3065" stop-color="#00ff4e"/><stop offset="0.5605" stop-color="#00ff2b"/><stop offset="0.6331" stop-color="#3aff1f"/><stop offset="0.7016" stop-color="#77ff11"/><stop offset="0.7782" stop-color="#c5ff00"/><stop offset="0.8286" stop-color="#feff00"/><stop offset="0.8669" stop-color="#ffd700"/><stop offset="0.9052" stop-color="#ffb800"/><stop offset="1" stop-color="#ff8100"/></linearGradient>
<linearGradient id="s108" gradientUnits="userSpaceOnUse" x1="1130" x2="1629"><stop offset="0" stop-color="#00ff6d"/><stop offset="0.3026" stop-color="#00ff50"/><stop offset="0.5551" stop-color="#00ff2d"/><stop offset="0.6273" stop-color="#3aff21"/><stop offset="0.6954" stop-color="#77ff13"/><stop offset="0.7796" stop-color="#ceff00"/><stop offset="0.8216" stop-color="#fffe00"/><stop offset="0.8577" stop-color="#ffd800"/><stop offset="0.8998" stop-color="#ffb500"/><stop offset="0.9459" stop-color="#ff9800"/><stop offset="1" stop-color="#ff7d00"/></linearGradient>
<linearGradient id="s109" gradientUnits="userSpaceOnUse" x1="1131" x2="1631"><stop offset="0" stop-color="#00ff6e"/><stop offset="0.3" stop-color="#00ff52"/><stop offset="0.55" stop-color="#00ff2f"/><stop offset="0.618" stop-color="#36ff24"/><stop offset="0.688" stop-color="#76ff16"/><stop offset="0.782" stop-color="#d9ff00"/><stop offset="0.814" stop-color="#ffff00"/><stop offset="0.852" stop-color="#ffd600"/><stop offset="0.896" stop-color="#ffb200"/><stop offset="0.944" stop-color="#ff9400"/><stop offset="1" stop-color="#ff7900"/></linearGradient>
<linearGradient id="s110" gradientUnits="userSpaceOnUse" x1="1131" x2="1634"><stop offset="0" stop-color="#00ff70"/><stop offset="0.2982" stop-color="#00ff54"/><stop offset="0.5447" stop-color="#00ff31"/><stop offset="0.6103" stop-color="#34ff26"/><stop offset="0.6799" stop-color="#74ff18"/><stop offset="0.7833" stop-color="#e3ff00"/><stop offset="0.8072" stop-color="#fffe00"/><stop offset="0.8469" stop-color="#ffd300"/><stop offset="0.8907" stop-color="#ffb000"/><stop offset="0.9423" stop-color="#ff9000"/><stop offset="1" stop-color="#ff7500"/></linearGradient>
<linearGradient id="s111" gradientUnits="userSpaceOnUse" x1="1131" x2="1637"><stop offset="0" stop-color="#00ff72"/><stop offset="0.2964" stop-color="#00ff55"/><stop offset="0.5415" stop-color="#00ff33"/><stop offset="0.6126" stop-color="#3bff27"/><stop offset="0.6779" stop-color="#78ff1a"/><stop offset="0.7391" stop-color="#b9ff0c"/><stop offset="0.7984" stop-color="#ffff00"/><stop offset="0.8379" stop-color="#ffd400"/><stop offset="0.8854" stop-color="#ffad00"/><stop offset="0.9387" stop-color="#ff8d00"/><stop offset="1" stop-color="#ff7100"/></linearGradient>
<linearGradient id="s112" gradientUnits="userSpaceOnUse" x1="1132" x2="1639"><stop offset="0" stop-color="#00ff73"/><stop offset="0.2939" stop-color="#00ff57"/><stop offset="0.5365" stop-color="#00ff35"/><stop offset="0.6036" stop-color="#38ff2a"/><stop offset="0.6706" stop-color="#77ff1c"/><stop offset="0.7318" stop-color="#b7ff0f"/><stop offset="0.7909" stop-color="#feff00"/><stop offset="0.8343" stop-color="#ffd100"/><stop offset="0.8817" stop-color="#ffaa00"/><stop offset="0.9369" stop-color="#ff8900"/><stop offset="1" stop-color="#ff6d00"/></linearGradient>
<linearGradient id="s113" gradientUnits="userSpaceOnUse" x1="1132" x2="1642"><stop offset="0" stop-color="#00ff75"/><stop offset="0.2902" stop-color="#00ff59"/><stop offset="0.5314" stop-color="#00ff37"/><stop offset="0.5961" stop-color="#36ff2c"/><stop offset="0.6627" stop-color="#75ff1f"/><stop offset="0.7235" stop-color="#b6ff11"/><stop offset="0.7843" stop-color="#fffe02"/><stop offset="0.8275" stop-color="#ffcf00"/><stop offset="0.8765" stop-color="#ffa800"/><stop offset="0.9333" stop-color="#ff8600"/><stop offset="1" stop-color="#ff6900"/></linearGradient>
<linearGradient id="s114" gradientUnits="userSpaceOnUse" x1="1132" x2="1644"><stop offset="0" stop-color="#00ff76"/><stop offset="0.2891" stop-color="#00ff5b"/><stop offset="0.5293" stop-color="#00ff39"/><stop offset="0.5957" stop-color="#39ff2e"/><stop offset="0.6602" stop-color="#77ff21"/><stop offset="0.7207" stop-color="#b9ff13"/><stop offset="0.7773" stop-color="#ffff05"/><stop offset="0.8203" stop-color="#ffd000"/><stop offset="0.8711" stop-color="#ffa700"/><stop offset="0.9297" stop-color="#ff8400"/><stop offset="1" stop-color="#ff6600"/></linearGradient>
<linearGradient id="s115" gradientUnits="userSpaceOnUse" x1="1133" x2="1647"><stop offset="0" stop-color="#00ff78"/><stop offset="0.286" stop-color="#00ff5c"/><stop offset="0.5233" stop-color="#00ff3c"/><stop offset="0.6518" stop-color="#76ff23"/><stop offset="0.7101" stop-color="#b6ff16"/><stop offset="0.7704" stop-color="#fffe07"/><stop offset="0.8152" stop-color="#ffcc00"/><stop offset="0.8658" stop-color="#ffa400"/><stop offset="0.928" stop-color="#ff8000"/><stop offset="1" stop-color="#ff6200"/></linearGradient>
<linearGradient id="s116" gradientUnits="userSpaceOnUse" x1="1133" x2="1650"><stop offset="0" stop-color="#00ff79"/><stop offset="0.2824" stop-color="#00ff5e"/><stop offset="0.5184" stop-color="#00ff3e"/><stop offset="0.5822" stop-color="#37ff32"/><stop offset="0.646" stop-color="#76ff26"/><stop offset="0.706" stop-color="#b9ff18"/><stop offset="0.7621" stop-color="#ffff0a"/><stop offset="0.8066" stop-color="#ffcd00"/><stop offset="0.8607" stop-color="#ffa200"/><stop offset="0.9246" stop-color="#ff7d00"/><stop offset="1" stop-color="#ff5f00"/></linearGradient>
<linearGradient id="s117" gradientUnits="userSpaceOnUse" x1="1133" x2="1652"><stop offset="0" stop-color="#00ff7b"/><stop offset="0.2813" stop-color="#00ff60"/><stop offset="0.5145" stop-color="#00ff40"/><stop offset="0.5742" stop-color="#34ff35"/><stop offset="0.6378" stop-color="#72ff29"/><stop offset="0.6936" stop-color="#b0ff1d"/><stop offset="0.7572" stop-color="#fffd0c"/><stop offset="0.8035" stop-color="#ffca00"/><stop offset="0.8574" stop-color="#ff9f00"/><stop offset="0.9229" stop-color="#ff7a00"/><stop offset="1" stop-color="#ff5c00"/></linearGradient>
<linearGradient id="s118" gradientUnits="userSpaceOnUse" x1="1134" x2="1655"><stop offset="0" stop-color="#00ff7c"/><stop offset="0.2783" stop-color="#00ff62"/><stop offset="0.5106" stop-color="#00ff42"/><stop offset="0.5739" stop-color="#39ff37"/><stop offset="0.6353" stop-color="#77ff2a"/><stop offset="0.6929" stop-color="#b8ff1e"/><stop offset="0.7486" stop-color="#ffff0f"/><stop offset="0.7965" stop-color="#ffc801"/><stop offset="0.8522" stop-color="#ff9d00"/><stop offset="0.9194" stop-color="#ff7800"/><stop offset="1" stop-color="#ff5900"/></linearGradient>
<linearGradient id="s119" gradientUnits="userSpaceOnUse" x1="1134" x2="1658"><stop offset="0" stop-color="#00ff7e"/><stop offset="0.2767" stop-color="#00ff64"/><stop offset="0.5057" stop-color="#00ff44"/><stop offset="0.5687" stop-color="#39ff39"/><stop offset="0.6298" stop-color="#77ff2d"/><stop offset="0.687" stop-color="#b9ff20"/><stop offset="0.7405" stop-color="#feff13"/><stop offset="0.7901" stop-color="#ffc703"/><stop offset="0.8473" stop-color="#ff9a00"/><stop offset="0.916" stop-color="#ff7500"/><stop offset="1" stop-color="#ff5500"/></linearGradient>
<linearGradient id="s120" gradientUnits="userSpaceOnUse" x1="1134" x2="1660"><stop offset="0" stop-color="#00ff80"/><stop offset="0.2738" stop-color="#00ff66"/><stop offset="0.5019" stop-color="#00ff47"/><stop offset="0.5627" stop-color="#37ff3c"/><stop offset="0.6236" stop-color="#76ff30"/><stop offset="0.6787" stop-color="#b5ff23"/><stop offset="0.7357" stop-color="#fffe15"/><stop offset="0.7833" stop-color="#ffc706"/><stop offset="0.8422" stop-color="#ff9900"/><stop offset="0.9144" stop-color="#ff7200"/><stop offset="1" stop-color="#ff5300"/></linearGradient>
<linearGradient id="s121" gradientUnits="userSpaceOnUse" x1="1134" x2="1663"><stop offset="0" stop-color="#00ff82"/><stop offset="0.2722" stop-color="#00ff68"/><stop offset="0.4972" stop-color="#00ff49"/><stop offset="0.5558" stop-color="#35ff3f"/><stop offset="0.6181" stop-color="#76ff32"/><stop offset="0.6749" stop-color="#b9ff26"/><stop offset="0.7278" stop-color="#ffff18"/><stop offset="0.7769" stop-color="#ffc608"/><stop offset="0.8091" stop-color="#ffaa00"/><stop offset="0.8374" stop-color="#ff9600"/><stop offset="0.9112" stop-color="#ff6f00"/><stop offset="1" stop-color="#ff4f00"/></linearGradient>
<linearGradient id="s122" gradientUnits="userSpaceOnUse" x1="1135" x2="1666"><stop offset="0" stop-color="#00ff83"/><stop offset="0.2693" stop-color="#00ff6a"/><stop offset="0.4934" stop-color="#00ff4b"/><stop offset="0.5556" stop-color="#3bff40"/><stop offset="0.6139" stop-color="#78ff34"/><stop offset="0.6685" stop-color="#baff28"/><stop offset="0.7194" stop-color="#feff1b"/><stop offset="0.7721" stop-color="#ffc309"/><stop offset="0.8324" stop-color="#ff9400"/><stop offset="0.9077" stop-color="#ff6d00"/><stop offset="1" stop-color="#ff4c00"/></linearGradient>
<linearGradient id="s123" gradientUnits="userSpaceOnUse" x1="1135" x2="1668"><stop offset="0" stop-color="#00ff85"/><stop offset="0.2683" stop-color="#00ff6c"/><stop offset="0.4897" stop-color="#00ff4d"/><stop offset="0.5497" stop-color="#39ff43"/><stop offset="0.6079" stop-color="#77ff37"/><stop offset="0.6623" stop-color="#b8ff2b"/><stop offset="0.7148" stop-color="#ffff1e"/><stop offset="0.7655" stop-color="#ffc30c"/><stop offset="0.8293" stop-color="#ff9200"/><stop offset="0.9062" stop-color="#ff6a00"/><stop offset="1" stop-color="#ff4a00"/></linearGradient>
<linearGradient id="s124" gradientUnits="userSpaceOnUse" x1="1135" x2="1671"><stop offset="0" stop-color="#00ff87"/><stop offset="0.2649" stop-color="#00ff6e"/><stop offset="0.4851" stop-color="#00ff50"/><stop offset="0.541" stop-color="#35ff46"/><stop offset="0.6007" stop-color="#75ff3a"/><stop offset="0.6549" stop-color="#b7ff2e"/><stop offset="0.7071" stop-color="#feff21"/><stop offset="0.7612" stop-color="#ffc00d"/><stop offset="0.8246" stop-color="#ff8f00"/><stop offset="0.903" stop-color="#ff6700"/><stop offset="1" stop-color="#ff4700"/></linearGradient>
<linearGradient id="s125" gradientUnits="userSpaceOnUse" x1="1136" x2="1673"><stop offset="0" stop-color="#00ff88"/><stop offset="0.2644" stop-color="#00ff70"/><stop offset="0.4823" stop-color="#01ff52"/><stop offset="0.5419" stop-color="#3aff48"/><stop offset="0.5978" stop-color="#77ff3d"/><stop offset="0.6499" stop-color="#b8ff31"/><stop offset="0.7002" stop-color="#fdff25"/><stop offset="0.7561" stop-color="#ffbf0f"/><stop offset="0.8194" stop-color="#ff8e00"/><stop offset="0.8994" stop-color="#ff6600"/><stop offset="1" stop-color="#ff4400"/></linearGradient>
<linearGradient id="s126" gradientUnits="userSpaceOnUse" x1="1136" x2="1676"><stop offset="0" stop-color="#00ff8a"/><stop offset="0.2611" stop-color="#00ff72"/><stop offset="0.4778" stop-color="#00ff55"/><stop offset="0.537" stop-color="#3aff4a"/><stop offset="0.5926" stop-color="#78ff3f"/><stop offset="0.6444" stop-color="#b8ff34"/><stop offset="0.6944" stop-color="#ffff27"/><stop offset="0.7481" stop-color="#ffbf12"/><stop offset="0.8148" stop-color="#ff8c01"/><stop offset="0.8981" stop-color="#ff6200"/><stop offset="1" stop-color="#ff4200"/></linearGradient>
<linearGradient id="s127" gradientUnits="userSpaceOnUse" x1="1136" x2="1679"><stop offset="0" stop-color="#00ff8c"/><stop offset="0.2597" stop-color="#00ff74"/><stop offset="0.4733" stop-color="#00ff57"/><stop offset="0.5304" stop-color="#38ff4d"/><stop offset="0.5856" stop-color="#76ff43"/><stop offset="0.6372" stop-color="#b7ff37"/><stop offset="0.6869" stop-color="#feff2b"/><stop offset="0.744" stop-color="#ffbc13"/><stop offset="0.8103" stop-color="#ff8902"/><stop offset="0.895" stop-color="#ff6000"/><stop offset="1" stop-color="#ff3f00"/></linearGradient>
<linearGradient id="s128" gradientUnits="userSpaceOnUse" x1="1137" x2="1681"><stop offset="0" stop-color="#00ff8e"/><stop offset="0.2574" stop-color="#00ff76"/><stop offset="0.4688" stop-color="#00ff5a"/><stop offset="0.5239" stop-color="#36ff50"/><stop offset="0.5809" stop-color="#76ff45"/><stop offset="0.6324" stop-color="#b8ff3a"/><stop offset="0.682" stop-color="#ffff2e"/><stop offset="0.7077" stop-color="#ffdc21"/><stop offset="0.7371" stop-color="#ffbc16"/><stop offset="0.8051" stop-color="#ff8804"/><stop offset="0.8915" stop-color="#ff5e00"/><stop offset="1" stop-color="#ff3d00"/></linearGradient>
<linearGradient id="s129" gradientUnits="userSpaceOnUse" x1="1137" x2="1684"><stop offset="0" stop-color="#00ff90"/><stop offset="0.2559" stop-color="#00ff78"/><stop offset="0.4662" stop-color="#00ff5c"/><stop offset="0.5759" stop-color="#77ff48"/><stop offset="0.6271" stop-color="#b9ff3d"/><stop offset="0.6746" stop-color="#feff31"/><stop offset="0.702" stop-color="#ffda24"/><stop offset="0.7313" stop-color="#ffbb18"/><stop offset="0.8007" stop-color="#ff8605"/><stop offset="0.8263" stop-color="#ff7700"/><stop offset="0.8885" stop-color="#ff5c00"/><stop offset="1" stop-color="#ff3a00"/></linearGradient>
<linearGradient id="s130" gradientUnits="userSpaceOnUse" x1="1137" x2="1687"><stop offset="0" stop-color="#00ff92"/><stop offset="0.2527" stop-color="#00ff7b"/><stop offset="0.4618" stop-color="#00ff5f"/><stop offset="0.5182" stop-color="#3aff55"/><stop offset="0.5709" stop-color="#77ff4b"/><stop offset="0.62" stop-color="#b7ff40"/><stop offset="0.6673" stop-color="#fdff35"/><stop offset="0.7255" stop-color="#ffb91a"/><stop offset="0.7964" stop-color="#ff8306"/><stop offset="0.8273" stop-color="#ff7200"/><stop offset="0.8855" stop-color="#ff5900"/><stop offset="1" stop-color="#ff3800"/></linearGradient>
<linearGradient id="s131" gradientUnits="userSpaceOnUse" x1="1138" x2="1689"><stop offset="0" stop-color="#00ff94"/><stop offset="0.2505" stop-color="#00ff7d"/><stop offset="0.4574" stop-color="#00ff62"/><stop offset="0.51" stop-color="#36ff59"/><stop offset="0.5644" stop-color="#75ff4e"/><stop offset="0.6152" stop-color="#b8ff43"/><stop offset="0.6624" stop-color="#ffff38"/><stop offset="0.6897" stop-color="#ffd929"/><stop offset="0.7187" stop-color="#ffb91d"/><stop offset="0.7913" stop-color="#ff8208"/><stop offset="0.8294" stop-color="#ff6e00"/><stop offset="0.8838" stop-color="#ff5700"/><stop offset="1" stop-color="#ff3500"/></linearGradient>
<linearGradient id="s132" gradientUnits="userSpaceOnUse" x1="1138" x2="1692"><stop offset="0" stop-color="#00ff96"/><stop offset="0.2491" stop-color="#00ff7f"/><stop offset="0.4531" stop-color="#00ff64"/><stop offset="0.5036" stop-color="#34ff5c"/><stop offset="0.5578" stop-color="#74ff52"/><stop offset="0.6083" stop-color="#b7ff47"/><stop offset="0.6552" stop-color="#fdff3b"/><stop offset="0.6859" stop-color="#ffd62b"/><stop offset="0.7148" stop-color="#ffb61e"/><stop offset="0.787" stop-color="#ff8009"/><stop offset="0.8303" stop-color="#ff6900"/><stop offset="0.8809" stop-color="#ff5500"/><stop offset="1" stop-color="#ff3300"/></linearGradient>
<linearGradient id="s133" gradientUnits="userSpaceOnUse" x1="1138" x2="1695"><stop offset="0" stop-color="#00ff98"/><stop offset="0.2478" stop-color="#00ff82"/><stop offset="0.4506" stop-color="#00ff67"/><stop offset="0.5045" stop-color="#3aff5e"/><stop offset="0.5566" stop-color="#79ff54"/><stop offset="0.605" stop-color="#baff49"/><stop offset="0.6499" stop-color="#ffff3f"/><stop offset="0.6768" stop-color="#ffd82f"/><stop offset="0.7074" stop-color="#ffb721"/><stop offset="0.7415" stop-color="#ff9915"/><stop offset="0.781" stop-color="#ff7f0b"/><stop offset="0.833" stop-color="#ff6400"/><stop offset="0.8761" stop-color="#ff5300"/><stop offset="1" stop-color="#ff3100"/></linearGradient>
<linearGradient id="s134" gradientUnits="userSpaceOnUse" x1="1139" x2="1697"><stop offset="0" stop-color="#00ff99"/><stop offset="0.2455" stop-color="#00ff84"/><stop offset="0.4462" stop-color="#00ff6a"/><stop offset="0.5" stop-color="#3aff61"/><stop offset="0.5502" stop-color="#77ff57"/><stop offset="0.5986" stop-color="#b9ff4d"/><stop offset="0.6434" stop-color="#feff42"/><stop offset="0.672" stop-color="#ffd731"/><stop offset="0.7025" stop-color="#ffb523"/><stop offset="0.7384" stop-color="#ff9617"/><stop offset="0.7778" stop-color="#ff7c0c"/><stop offset="0.8351" stop-color="#ff6000"/><stop offset="0.8746" stop-color="#ff5100"/><stop offset="1" stop-color="#ff2f00"/></linearGradient>
<linearGradient id="s135" gradientUnits="userSpaceOnUse" x1="1139" x2="1700"><stop offset="0" stop-color="#00ff9b"/><stop offset="0.2424" stop-color="#00ff86"/><stop offset="0.4421" stop-color="#00ff6d"/><stop offset="0.492" stop-color="#36ff64"/><stop offset="0.5437" stop-color="#75ff5b"/><stop offset="0.5918" stop-color="#b7ff51"/><stop offset="0.6364" stop-color="#fdff46"/><stop offset="0.6684" stop-color="#ffd333"/><stop offset="0.6988" stop-color="#ffb225"/><stop offset="0.7344" stop-color="#ff9418"/><stop offset="0.7736" stop-color="#ff7a0d"/><stop offset="0.836" stop-color="#ff5c00"/><stop offset="0.8717" stop-color="#ff4e00"/><stop offset="1" stop-color="#ff2c00"/></linearGradient>
<linearGradient id="s136" gradientUnits="userSpaceOnUse" x1="1139" x2="1703"><stop offset="0" stop-color="#00ff9e"/><stop offset="0.2411" stop-color="#00ff89"/><stop offset="0.4397" stop-color="#01ff6f"/><stop offset="0.4911" stop-color="#3aff67"/><stop offset="0.5408" stop-color="#78ff5e"/><stop offset="0.5869" stop-color="#b8ff54"/><stop offset="0.6312" stop-color="#feff49"/><stop offset="0.6596" stop-color="#ffd637"/><stop offset="0.6915" stop-color="#ffb228"/><stop offset="0.727" stop-color="#ff941a"/><stop offset="0.7677" stop-color="#ff790f"/><stop offset="0.8369" stop-color="#ff5800"/><stop offset="0.8688" stop-color="#ff4c00"/><stop offset="1" stop-color="#ff2a00"/></linearGradient>
<linearGradient id="s137" gradientUnits="userSpaceOnUse" x1="1140" x2="1705"><stop offset="0" stop-color="#00ffa0"/><stop offset="0.2389" stop-color="#00ff8b"/><stop offset="0.4354" stop-color="#00ff72"/><stop offset="0.4867" stop-color="#3aff6a"/><stop offset="0.5363" stop-color="#78ff61"/><stop offset="0.5823" stop-color="#b9ff57"/><stop offset="0.6248" stop-color="#fdff4d"/><stop offset="0.6566" stop-color="#ffd239"/><stop offset="0.6867" stop-color="#ffb12a"/><stop offset="0.7239" stop-color="#ff911c"/><stop offset="0.7646" stop-color="#ff7710"/><stop offset="0.8407" stop-color="#ff5300"/><stop offset="0.9133" stop-color="#ff3c00"/><stop offset="1" stop-color="#ff2800"/></linearGradient>
<linearGradient id="s138" gradientUnits="userSpaceOnUse" x1="1140" x2="1708"><stop offset="0" stop-color="#00ffa2"/><stop offset="0.2377" stop-color="#00ff8e"/><stop offset="0.4313" stop-color="#00ff75"/><stop offset="0.4806" stop-color="#37ff6d"/><stop offset="0.5299" stop-color="#76ff64"/><stop offset="0.5757" stop-color="#b8ff5b"/><stop offset="0.6197" stop-color="#ffff51"/><stop offset="0.6479" stop-color="#ffd53d"/><stop offset="0.6796" stop-color="#ffb12d"/><stop offset="0.7165" stop-color="#ff911e"/><stop offset="0.7588" stop-color="#ff7511"/><stop offset="0.8415" stop-color="#ff5000"/><stop offset="1" stop-color="#ff2600"/></linearGradient>
<linearGradient id="s139" gradientUnits="userSpaceOnUse" x1="1140" x2="1711"><stop offset="0" stop-color="#00ffa4"/><stop offset="0.2347" stop-color="#00ff90"/><stop offset="0.4273" stop-color="#00ff78"/><stop offset="0.4746" stop-color="#35ff71"/><stop offset="0.5236" stop-color="#74ff68"/><stop offset="0.5692" stop-color="#b6ff5f"/><stop offset="0.613" stop-color="#feff55"/><stop offset="0.6427" stop-color="#ffd340"/><stop offset="0.6743" stop-color="#ffaf2f"/><stop offset="0.711" stop-color="#ff9020"/><stop offset="0.7548" stop-color="#ff7313"/><stop offset="0.8441" stop-color="#ff4c00"/><stop offset="1" stop-color="#ff2400"/></linearGradient>
<linearGradient id="s140" gradientUnits="userSpaceOnUse" x1="1141" x2="1713"><stop offset="0" stop-color="#00ffa6"/><stop offset="0.2343" stop-color="#00ff93"/><stop offset="0.4248" stop-color="#01ff7b"/><stop offset="0.521" stop-color="#77ff6b"/><stop offset="0.5647" stop-color="#b7ff62"/><stop offset="0.6066" stop-color="#fcff59"/><stop offset="0.6399" stop-color="#ffcf41"/><stop offset="0.6696" stop-color="#ffae31"/><stop offset="0.7063" stop-color="#ff8e22"/><stop offset="0.75" stop-color="#ff7214"/><stop offset="0.8462" stop-color="#ff4800"/><stop offset="1" stop-color="#ff2300"/></linearGradient>
<linearGradient id="s141" gradientUnits="userSpaceOnUse" x1="1141" x2="1716"><stop offset="0" stop-color="#00ffa8"/><stop offset="0.2313" stop-color="#00ff95"/><stop offset="0.4209" stop-color="#00ff7e"/><stop offset="0.4696" stop-color="#39ff77"/><stop offset="0.5165" stop-color="#77ff6e"/><stop offset="0.56" stop-color="#b8ff66"/><stop offset="0.6017" stop-color="#feff5c"/><stop offset="0.6313" stop-color="#ffd246"/><stop offset="0.6626" stop-color="#ffae34"/><stop offset="0.7009" stop-color="#ff8d24"/><stop offset="0.7443" stop-color="#ff7116"/><stop offset="0.847" stop-color="#ff4500"/><stop offset="1" stop-color="#ff2100"/></linearGradient>
<linearGradient id="s142" gradientUnits="userSpaceOnUse" x1="1141" x2="1718"><stop offset="0" stop-color="#00ffaa"/><stop offset="0.2305" stop-color="#00ff98"/><stop offset="0.4177" stop-color="#00ff82"/><stop offset="0.4645" stop-color="#37ff7a"/><stop offset="0.5113" stop-color="#75ff72"/><stop offset="0.5546" stop-color="#b6ff6a"/><stop offset="0.5962" stop-color="#fdff61"/><stop offset="0.6291" stop-color="#ffce48"/><stop offset="0.6603" stop-color="#ffab36"/><stop offset="0.6984" stop-color="#ff8a25"/><stop offset="0.7418" stop-color="#ff6e17"/><stop offset="0.851" stop-color="#ff4100"/><stop offset="1" stop-color="#ff1f00"/></linearGradient>
<linearGradient id="s143" gradientUnits="userSpaceOnUse" x1="1142" x2="1721"><stop offset="0" stop-color="#00ffad"/><stop offset="0.2263" stop-color="#00ff9b"/><stop offset="0.4128" stop-color="#00ff85"/><stop offset="0.4577" stop-color="#35ff7e"/><stop offset="0.506" stop-color="#76ff76"/><stop offset="0.5492" stop-color="#b8ff6d"/><stop offset="0.5907" stop-color="#ffff64"/><stop offset="0.62" stop-color="#ffd14d"/><stop offset="0.6528" stop-color="#ffab39"/><stop offset="0.6908" stop-color="#ff8a28"/><stop offset="0.7358" stop-color="#ff6d18"/><stop offset="0.7893" stop-color="#ff540b"/><stop offset="0.8515" stop-color="#ff3e00"/><stop offset="1" stop-color="#ff1d00"/></linearGradient>
<linearGradient id="s144" gradientUnits="userSpaceOnUse" x1="1142" x2="1724"><stop offset="0" stop-color="#00ffaf"/><stop offset="0.2268" stop-color="#00ff9d"/><stop offset="0.4107" stop-color="#00ff88"/><stop offset="0.5017" stop-color="#76ff79"/><stop offset="0.5447" stop-color="#b9ff71"/><stop offset="0.5842" stop-color="#fdff69"/><stop offset="0.6151" stop-color="#ffcf4f"/><stop offset="0.6478" stop-color="#ffa93b"/><stop offset="0.6873" stop-color="#ff8729"/><stop offset="0.732" stop-color="#ff6b1a"/><stop offset="0.7869" stop-color="#ff510c"/><stop offset="0.8522" stop-color="#ff3b00"/><stop offset="1" stop-color="#ff1b00"/></linearGradient>
<linearGradient id="s145" gradientUnits="userSpaceOnUse" x1="1142" x2="1726"><stop offset="0" stop-color="#00ffb1"/><stop offset="0.2243" stop-color="#00ffa0"/><stop offset="0.4075" stop-color="#00ff8b"/><stop offset="0.4538" stop-color="#39ff85"/><stop offset="0.4983" stop-color="#77ff7d"/><stop offset="0.5394" stop-color="#b7ff75"/><stop offset="0.5805" stop-color="#ffff6d"/><stop offset="0.6096" stop-color="#ffd053"/><stop offset="0.6421" stop-color="#ffaa3e"/><stop offset="0.6815" stop-color="#ff872b"/><stop offset="0.7277" stop-color="#ff6a1b"/><stop offset="0.786" stop-color="#ff4f0d"/><stop offset="0.8545" stop-color="#ff3800"/><stop offset="1" stop-color="#ff1900"/></linearGradient>
<linearGradient id="s146" gradientUnits="userSpaceOnUse" x1="1143" x2="1729"><stop offset="0" stop-color="#00ffb4"/><stop offset="0.2218" stop-color="#00ffa3"/><stop offset="0.4027" stop-color="#00ff8f"/><stop offset="0.4471" stop-color="#37ff88"/><stop offset="0.4915" stop-color="#75ff81"/><stop offset="0.5341" stop-color="#b8ff79"/><stop offset="0.5734" stop-color="#feff71"/><stop offset="0.6041" stop-color="#ffce56"/><stop offset="0.6365" stop-color="#ffa840"/><stop offset="0.6758" stop-color="#ff862d"/><stop offset="0.7218" stop-color="#ff691d"/><stop offset="0.7833" stop-color="#ff4d0d"/><stop offset="0.8567" stop-color="#ff3500"/><stop offset="1" stop-color="#ff1800"/></linearGradient>
<linearGradient id="s147" gradientUnits="userSpaceOnUse" x1="1143" x2="1732"><stop offset="0" stop-color="#00ffb6"/><stop offset="0.219" stop-color="#00ffa6"/><stop offset="0.399" stop-color="#00ff92"/><stop offset="0.4397" stop-color="#32ff8d"/><stop offset="0.4856" stop-color="#72ff85"/><stop offset="0.528" stop-color="#b6ff7e"/><stop offset="0.5671" stop-color="#fdff76"/><stop offset="0.5993" stop-color="#ffcd58"/><stop offset="0.6316" stop-color="#ffa643"/><stop offset="0.6706" stop-color="#ff842f"/><stop offset="0.7182" stop-color="#ff661e"/><stop offset="0.781" stop-color="#ff4a0e"/><stop offset="0.8574" stop-color="#ff3200"/><stop offset="1" stop-color="#ff1600"/></linearGradient>
<linearGradient id="s148" gradientUnits="userSpaceOnUse" x1="1144" x2="1734"><stop offset="0" stop-color="#00ffb8"/><stop offset="0.2186" stop-color="#00ffa9"/><stop offset="0.3966" stop-color="#00ff96"/><stop offset="0.4424" stop-color="#3bff8f"/><stop offset="0.4847" stop-color="#78ff89"/><stop offset="0.5254" stop-color="#baff81"/><stop offset="0.5627" stop-color="#ffff7a"/><stop offset="0.5932" stop-color="#ffcd5d"/><stop offset="0.6271" stop-color="#ffa545"/><stop offset="0.6661" stop-color="#ff8331"/><stop offset="0.7136" stop-color="#ff6520"/><stop offset="0.7797" stop-color="#ff480e"/><stop offset="0.8593" stop-color="#ff3000"/><stop offset="1" stop-color="#ff1400"/></linearGradient>
<linearGradient id="s149" gradientUnits="userSpaceOnUse" x1="1144" x2="1737"><stop offset="0" stop-color="#00ffbb"/><stop offset="0.3929" stop-color="#00ff99"/><stop offset="0.4368" stop-color="#39ff93"/><stop offset="0.4789" stop-color="#76ff8d"/><stop offset="0.5194" stop-color="#b8ff86"/><stop offset="0.5565" stop-color="#fdff7f"/><stop offset="0.5885" stop-color="#ffcb5f"/><stop offset="0.6223" stop-color="#ffa347"/><stop offset="0.6627" stop-color="#ff8032"/><stop offset="0.7099" stop-color="#ff6321"/><stop offset="0.7774" stop-color="#ff460f"/><stop offset="0.86" stop-color="#ff2d00"/><stop offset="1" stop-color="#ff1300"/></linearGradient>
<linearGradient id="s150" gradientUnits="userSpaceOnUse" x1="1145" x2="1739"><stop offset="0" stop-color="#00ffbd"/><stop offset="0.3889" stop-color="#00ff9d"/><stop offset="0.431" stop-color="#36ff97"/><stop offset="0.4747" stop-color="#76ff91"/><stop offset="0.5135" stop-color="#b7ff8a"/><stop offset="0.5522" stop-color="#ffff83"/><stop offset="0.5808" stop-color="#ffce65"/><stop offset="0.6162" stop-color="#ffa34b"/><stop offset="0.6566" stop-color="#ff8035"/><stop offset="0.7054" stop-color="#ff6222"/><stop offset="0.7761" stop-color="#ff430f"/><stop offset="0.8636" stop-color="#ff2a00"/><stop offset="1" stop-color="#ff1100"/></linearGradient>
<linearGradient id="s151" gradientUnits="userSpaceOnUse" x1="1145" x2="1742"><stop offset="0" stop-color="#00ffc0"/><stop offset="0.3869" stop-color="#01ffa0"/><stop offset="0.4707" stop-color="#77ff95"/><stop offset="0.5092" stop-color="#b8ff8f"/><stop offset="0.5461" stop-color="#feff88"/><stop offset="0.5779" stop-color="#ffca66"/><stop offset="0.6114" stop-color="#ffa24d"/><stop offset="0.6516" stop-color="#ff7f37"/><stop offset="0.7002" stop-color="#ff6124"/><stop offset="0.7739" stop-color="#ff4110"/><stop offset="0.8643" stop-color="#ff2800"/><stop offset="1" stop-color="#ff1000"/></linearGradient>
<linearGradient id="s152" gradientUnits="userSpaceOnUse" x1="1146" x2="1745"><stop offset="0" stop-color="#00ffc2"/><stop offset="0.3823" stop-color="#00ffa4"/><stop offset="0.4257" stop-color="#3bff9f"/><stop offset="0.4658" stop-color="#77ff99"/><stop offset="0.5042" stop-color="#b9ff93"/><stop offset="0.5392" stop-color="#fcff8d"/><stop offset="0.5726" stop-color="#ffc869"/><stop offset="0.606" stop-color="#ffa04f"/><stop offset="0.6477" stop-color="#ff7c38"/><stop offset="0.6962" stop-color="#ff5e25"/><stop offset="0.7713" stop-color="#ff3f11"/><stop offset="0.8648" stop-color="#ff2500"/><stop offset="1" stop-color="#ff0e00"/></linearGradient>
<linearGradient id="s153" gradientUnits="userSpaceOnUse" x1="1146" x2="1747"><stop offset="0" stop-color="#00ffc5"/><stop offset="0.3794" stop-color="#00ffa8"/><stop offset="0.4193" stop-color="#36ffa3"/><stop offset="0.4609" stop-color="#75ff9e"/><stop offset="0.4992" stop-color="#b7ff98"/><stop offset="0.5358" stop-color="#feff91"/><stop offset="0.5657" stop-color="#ffcb6f"/><stop offset="0.6007" stop-color="#ffa053"/><stop offset="0.6423" stop-color="#ff7c3b"/><stop offset="0.6905" stop-color="#ff5e27"/><stop offset="0.7687" stop-color="#ff3d12"/><stop offset="0.8686" stop-color="#ff2300"/><stop offset="1" stop-color="#ff0d00"/></linearGradient>
<linearGradient id="s154" gradientUnits="userSpaceOnUse" x1="1147" x2="1750"><stop offset="0" stop-color="#00ffc7"/><stop offset="0.3748" stop-color="#00ffac"/><stop offset="0.4129" stop-color="#33ffa8"/><stop offset="0.4544" stop-color="#73ffa2"/><stop offset="0.4925" stop-color="#b5ff9c"/><stop offset="0.529" stop-color="#fdff96"/><stop offset="0.5605" stop-color="#ffca72"/><stop offset="0.5954" stop-color="#ff9f55"/><stop offset="0.6368" stop-color="#ff7b3d"/><stop offset="0.6866" stop-color="#ff5c28"/><stop offset="0.7678" stop-color="#ff3b12"/><stop offset="0.869" stop-color="#ff2000"/><stop offset="1" stop-color="#ff0b00"/></linearGradient>
<linearGradient id="s155" gradientUnits="userSpaceOnUse" x1="1147" x2="1753"><stop offset="0" stop-color="#00ffca"/><stop offset="0.3729" stop-color="#01ffb0"/><stop offset="0.4142" stop-color="#3affab"/><stop offset="0.4538" stop-color="#79ffa6"/><stop offset="0.4901" stop-color="#baffa1"/><stop offset="0.5248" stop-color="#ffff9b"/><stop offset="0.5545" stop-color="#ffca77"/><stop offset="0.5891" stop-color="#ff9f59"/><stop offset="0.632" stop-color="#ff793f"/><stop offset="0.6815" stop-color="#ff5b2a"/><stop offset="0.764" stop-color="#ff3913"/><stop offset="0.8696" stop-color="#ff1e00"/><stop offset="1" stop-color="#ff0a00"/></linearGradient>
<linearGradient id="s156" gradientUnits="userSpaceOnUse" x1="1148" x2="1755"><stop offset="0" stop-color="#00ffcd"/><stop offset="0.369" stop-color="#00ffb4"/><stop offset="0.4102" stop-color="#3affaf"/><stop offset="0.4481" stop-color="#77ffab"/><stop offset="0.4843" stop-color="#b8ffa6"/><stop offset="0.5189" stop-color="#feffa0"/><stop offset="0.5502" stop-color="#ffc87a"/><stop offset="0.5848" stop-color="#ff9d5b"/><stop offset="0.6277" stop-color="#ff7841"/><stop offset="0.6771" stop-color="#ff592b"/><stop offset="0.7628" stop-color="#ff3713"/><stop offset="0.8715" stop-color="#ff1c00"/><stop offset="1" stop-color="#ff0800"/></linearGradient>
<linearGradient id="s157" gradientUnits="userSpaceOnUse" x1="1148" x2="1758"><stop offset="0" stop-color="#00ffd0"/><stop offset="0.3656" stop-color="#00ffb8"/><stop offset="0.4033" stop-color="#35ffb4"/><stop offset="0.4426" stop-color="#74ffb0"/><stop offset="0.4787" stop-color="#b6ffab"/><stop offset="0.5131" stop-color="#fcffa6"/><stop offset="0.5459" stop-color="#ffc67d"/><stop offset="0.5803" stop-color="#ff9b5e"/><stop offset="0.623" stop-color="#ff7643"/><stop offset="0.6738" stop-color="#ff572c"/><stop offset="0.7607" stop-color="#ff3514"/><stop offset="0.8705" stop-color="#ff1a00"/><stop offset="1" stop-color="#ff0700"/></linearGradient>
<linearGradient id="s158" gradientUnits="userSpaceOnUse" x1="1149" x2="1761"><stop offset="0" stop-color="#00ffd2"/><stop offset="0.3611" stop-color="#00ffbc"/><stop offset="0.3971" stop-color="#33ffb9"/><stop offset="0.4379" stop-color="#75ffb4"/><stop offset="0.4739" stop-color="#b7ffb0"/><stop offset="0.5082" stop-color="#feffab"/><stop offset="0.5392" stop-color="#ffc781"/><stop offset="0.5735" stop-color="#ff9b61"/><stop offset="0.616" stop-color="#ff7646"/><stop offset="0.6683" stop-color="#ff562e"/><stop offset="0.7549" stop-color="#ff3415"/><stop offset="0.8644" stop-color="#ff1a01"/><stop offset="1" stop-color="#ff0500"/></linearGradient>
<linearGradient id="s159" gradientUnits="userSpaceOnUse" x1="1149" x2="1763"><stop offset="0" stop-color="#00ffd5"/><stop offset="0.3599" stop-color="#00ffc0"/><stop offset="0.4349" stop-color="#75ffb9"/><stop offset="0.4674" stop-color="#b2ffb5"/><stop offset="0.5049" stop-color="#fffeaf"/><stop offset="0.5342" stop-color="#ffc786"/><stop offset="0.57" stop-color="#ff9a64"/><stop offset="0.6124" stop-color="#ff7448"/><stop offset="0.6645" stop-color="#ff5530"/><stop offset="0.7492" stop-color="#ff3317"/><stop offset="0.8583" stop-color="#ff1903"/><stop offset="1" stop-color="#ff0400"/></linearGradient>
<linearGradient id="s160" gradientUnits="userSpaceOnUse" x1="1150" x2="1766"><stop offset="0" stop-color="#00ffd8"/><stop offset="0.3555" stop-color="#00ffc5"/><stop offset="0.3929" stop-color="#37ffc2"/><stop offset="0.4302" stop-color="#76ffbe"/><stop offset="0.4659" stop-color="#b9ffba"/><stop offset="0.4984" stop-color="#ffffb6"/><stop offset="0.5276" stop-color="#ffc88b"/><stop offset="0.5633" stop-color="#ff9a68"/><stop offset="0.6071" stop-color="#ff734a"/><stop offset="0.6591" stop-color="#ff5331"/><stop offset="0.7435" stop-color="#ff3218"/><stop offset="0.8523" stop-color="#ff1804"/><stop offset="1" stop-color="#ff0300"/></linearGradient>
<linearGradient id="s161" gradientUnits="userSpaceOnUse" x1="1150" x2="1768"><stop offset="0" stop-color="#00ffdb"/><stop offset="0.3528" stop-color="#00ffc9"/><stop offset="0.3883" stop-color="#35ffc6"/><stop offset="0.4256" stop-color="#73ffc3"/><stop offset="0.4951" stop-color="#fffdba"/><stop offset="0.5259" stop-color="#ffc48d"/><stop offset="0.5615" stop-color="#ff9669"/><stop offset="0.6052" stop-color="#ff704b"/><stop offset="0.657" stop-color="#ff5132"/><stop offset="0.7411" stop-color="#ff3119"/><stop offset="0.8479" stop-color="#ff1705"/><stop offset="0.8819" stop-color="#ff1100"/><stop offset="1" stop-color="#ff0200"/></linearGradient>
<linearGradient id="s162" gradientUnits="userSpaceOnUse" x1="1151" x2="1771"><stop offset="0" stop-color="#00ffde"/><stop offset="0.3484" stop-color="#00ffce"/><stop offset="0.3823" stop-color="#32ffcb"/><stop offset="0.421" stop-color="#74ffc8"/><stop offset="0.4548" stop-color="#b5ffc5"/><stop offset="0.4887" stop-color="#fffec1"/><stop offset="0.5194" stop-color="#ffc492"/><stop offset="0.5548" stop-color="#ff966d"/><stop offset="0.5984" stop-color="#ff704e"/><stop offset="0.65" stop-color="#ff5135"/><stop offset="0.7339" stop-color="#ff301a"/><stop offset="0.8403" stop-color="#ff1706"/><stop offset="0.8823" stop-color="#ff1000"/><stop offset="1" stop-color="#ff0000"/></linearGradient>
<linearGradient id="s163" gradientUnits="userSpaceOnUse" x1="1151" x2="1774"><stop offset="0" stop-color="#00ffe1"/><stop offset="0.3467" stop-color="#00ffd2"/><stop offset="0.4173" stop-color="#74ffcd"/><stop offset="0.4848" stop-color="#fffcc5"/><stop offset="0.5152" stop-color="#ffc295"/><stop offset="0.5506" stop-color="#ff956f"/><stop offset="0.5939" stop-color="#ff6f50"/><stop offset="0.6469" stop-color="#ff4f36"/><stop offset="0.7303" stop-color="#ff2f1b"/><stop offset="0.8379" stop-color="#ff1506"/><stop offset="0.8828" stop-color="#ff0e00"/><stop offset="1" stop-color="#ff0000"/></linearGradient>
<linearGradient id="s164" gradientUnits="userSpaceOnUse" x1="1152" x2="1776"><stop offset="0" stop-color="#00ffe4"/><stop offset="0.3429" stop-color="#00ffd7"/><stop offset="0.3782" stop-color="#37ffd5"/><stop offset="0.4135" stop-color="#75ffd2"/><stop offset="0.4455" stop-color="#b5ffd0"/><stop offset="0.4792" stop-color="#fffecc"/><stop offset="0.508" stop-color="#ffc59c"/><stop offset="0.5449" stop-color="#ff9573"/><stop offset="0.5881" stop-color="#ff6e53"/><stop offset="0.6426" stop-color="#ff4e37"/><stop offset="0.726" stop-color="#ff2e1c"/><stop offset="0.8317" stop-color="#ff1507"/><stop offset="0.8862" stop-color="#ff0c00"/><stop offset="1" stop-color="#ff0000"/></linearGradient>
<linearGradient id="s165" gradientUnits="userSpaceOnUse" x1="1152" x2="1779"><stop offset="0" stop-color="#00ffe7"/><stop offset="0.3397" stop-color="#00ffdc"/><stop offset="0.3732" stop-color="#34ffda"/><stop offset="0.4099" stop-color="#76ffd8"/><stop offset="0.4434" stop-color="#b9ffd6"/><stop offset="0.4737" stop-color="#ffffd3"/><stop offset="0.504" stop-color="#ffc3a0"/><stop offset="0.5407" stop-color="#ff9376"/><stop offset="0.5853" stop-color="#ff6c54"/><stop offset="0.6396" stop-color="#ff4c38"/><stop offset="0.7225" stop-color="#ff2c1d"/><stop offset="0.8293" stop-color="#ff1308"/><stop offset="0.8868" stop-color="#ff0a00"/><stop offset="1" stop-color="#ff0000"/></linearGradient>
<linearGradient id="s166" gradientUnits="userSpaceOnUse" x1="1153" x2="1782"><stop offset="0" stop-color="#00ffeb"/><stop offset="0.337" stop-color="#01ffe1"/><stop offset="0.4054" stop-color="#76ffdd"/><stop offset="0.469" stop-color="#fffdd8"/><stop offset="0.4992" stop-color="#ffc1a3"/><stop offset="0.5358" stop-color="#ff9178"/><stop offset="0.5803" stop-color="#ff6a56"/><stop offset="0.6359" stop-color="#ff4939"/><stop offset="0.7186" stop-color="#ff2b1e"/><stop offset="0.8251" stop-color="#ff1209"/><stop offset="0.8871" stop-color="#ff0900"/><stop offset="1" stop-color="#ff0000"/></linearGradient>
<linearGradient id="s167" gradientUnits="userSpaceOnUse" x1="1153" x2="1784"><stop offset="0" stop-color="#00ffee"/><stop offset="0.3344" stop-color="#00ffe6"/><stop offset="0.3693" stop-color="#39ffe4"/><stop offset="0.4025" stop-color="#77ffe3"/><stop offset="0.4342" stop-color="#b9ffe1"/><stop offset="0.4643" stop-color="#ffffdf"/><stop offset="0.4945" stop-color="#ffc2a9"/><stop offset="0.5309" stop-color="#ff917d"/><stop offset="0.5769" stop-color="#ff6958"/><stop offset="0.6323" stop-color="#ff483b"/><stop offset="0.7147" stop-color="#ff2a1f"/><stop offset="0.8209" stop-color="#ff120a"/><stop offset="0.8891" stop-color="#ff0700"/><stop offset="1" stop-color="#ff0000"/></linearGradient>
<linearGradient id="s168" gradientUnits="userSpaceOnUse" x1="1154" x2="1787"><stop offset="0" stop-color="#00fff1"/><stop offset="0.3302" stop-color="#00ffeb"/><stop offset="0.3618" stop-color="#34ffea"/><stop offset="0.3949" stop-color="#71ffe9"/><stop offset="0.4597" stop-color="#fffce4"/><stop offset="0.4897" stop-color="#ffc0ac"/><stop offset="0.5261" stop-color="#ff8f7f"/><stop offset="0.5719" stop-color="#ff675a"/><stop offset="0.6288" stop-color="#ff463c"/><stop offset="0.7109" stop-color="#ff2820"/><stop offset="0.8167" stop-color="#ff100a"/><stop offset="0.891" stop-color="#ff0500"/><stop offset="1" stop-color="#ff0000"/></linearGradient>
<linearGradient id="s169" gradientUnits="userSpaceOnUse" x1="1154" x2="1790"><stop offset="0" stop-color="#00fff5"/><stop offset="0.327" stop-color="#00fff0"/><stop offset="0.3569" stop-color="#31fff0"/><stop offset="0.3915" stop-color="#71ffef"/><stop offset="0.4214" stop-color="#b1ffee"/><stop offset="0.4544" stop-color="#fffeec"/><stop offset="0.4843" stop-color="#ffc0b2"/><stop offset="0.522" stop-color="#ff8d82"/><stop offset="0.5676" stop-color="#ff655c"/><stop offset="0.6242" stop-color="#ff453e"/><stop offset="0.7075" stop-color="#ff2721"/><stop offset="0.8129" stop-color="#ff0f0b"/><stop offset="0.9198" stop-color="#ff0000"/><stop offset="1" stop-color="#ff0000"/></linearGradient>
<linearGradient id="s170" gradientUnits="userSpaceOnUse" x1="1155" x2="1792"><stop offset="0" stop-color="#00fff8"/><stop offset="0.325" stop-color="#01fff6"/><stop offset="0.3878" stop-color="#72fff5"/><stop offset="0.4505" stop-color="#fffcf0"/><stop offset="0.4804" stop-color="#ffbeb5"/><stop offset="0.5181" stop-color="#ff8c85"/><stop offset="0.5636" stop-color="#ff645e"/><stop offset="0.6217" stop-color="#ff433f"/><stop offset="0.7049" stop-color="#ff2522"/><stop offset="0.81" stop-color="#ff0e0c"/><stop offset="0.9105" stop-color="#ff0000"/><stop offset="1" stop-color="#ff0000"/></linearGradient>
<linearGradient id="s171" gradientUnits="userSpaceOnUse" x1="1155" x2="1795"><stop offset="0" stop-color="#00fffc"/><stop offset="0.3219" stop-color="#00fffb"/><stop offset="0.3547" stop-color="#39fffb"/><stop offset="0.3859" stop-color="#76fffb"/><stop offset="0.4453" stop-color="#fffdf9"/><stop offset="0.475" stop-color="#ffbfbb"/><stop offset="0.5125" stop-color="#ff8c89"/><stop offset="0.5594" stop-color="#ff6260"/><stop offset="0.6172" stop-color="#ff4240"/><stop offset="0.6984" stop-color="#ff2524"/><stop offset="0.8031" stop-color="#ff0e0d"/><stop offset="0.8984" stop-color="#ff0000"/><stop offset="1" stop-color="#ff0000"/></linearGradient>
<linearGradient id="s172" gradientUnits="userSpaceOnUse" x1="1156" x2="1798"><stop offset="0" stop-color="#00ffff"/><stop offset="0.3178" stop-color="#00fdff"/><stop offset="0.3474" stop-color="#33fdff"/><stop offset="0.3801" stop-color="#72fdff"/><stop offset="0.4081" stop-color="#b0fdff"/><stop offset="0.4408" stop-color="#fffbfd"/><stop offset="0.4704" stop-color="#ffbdbf"/><stop offset="0.5078" stop-color="#ff8a8c"/><stop offset="0.5545" stop-color="#ff6163"/><stop offset="0.6137" stop-color="#ff4041"/><stop offset="0.6978" stop-color="#ff2224"/><stop offset="0.8053" stop-color="#ff0b0d"/><stop offset="0.8956" stop-color="#ff0000"/><stop offset="1" stop-color="#ff0000"/></linearGradient>
<linearGradient id="s173" gradientUnits="userSpaceOnUse" x1="1156" x2="1800"><stop offset="0" stop-color="#00fbff"/><stop offset="0.3152" stop-color="#00f8ff"/><stop offset="0.3447" stop-color="#31f7ff"/><stop offset="0.3789" stop-color="#73f7ff"/><stop offset="0.4084" stop-color="#b3f6ff"/><stop offset="0.4394" stop-color="#fff4fe"/><stop offset="0.4534" stop-color="#ffd4dd"/><stop offset="0.4705" stop-color="#ffb5bd"/><stop offset="0.5078" stop-color="#ff858b"/><stop offset="0.5543" stop-color="#ff5d62"/><stop offset="0.6118" stop-color="#ff3e42"/><stop offset="0.6972" stop-color="#ff2024"/><stop offset="0.809" stop-color="#ff090c"/><stop offset="0.8975" stop-color="#ff0000"/><stop offset="1" stop-color="#ff0000"/></linearGradient>
<linearGradient id="s174" gradientUnits="userSpaceOnUse" x1="1157" x2="1803"><stop offset="0" stop-color="#00f8ff"/><stop offset="0.3127" stop-color="#00f3ff"/><stop offset="0.3777" stop-color="#77f1ff"/><stop offset="0.4071" stop-color="#b7f0ff"/><stop offset="0.4365" stop-color="#ffeefe"/><stop offset="0.4505" stop-color="#ffcfde"/><stop offset="0.4675" stop-color="#ffb1be"/><stop offset="0.5046" stop-color="#ff818c"/><stop offset="0.5511" stop-color="#ff5b63"/><stop offset="0.6099" stop-color="#ff3b42"/><stop offset="0.6981" stop-color="#ff1e23"/><stop offset="0.8142" stop-color="#ff070b"/><stop offset="0.8978" stop-color="#ff0000"/><stop offset="1" stop-color="#ff0000"/></linearGradient>
<linearGradient id="s175" gradientUnits="userSpaceOnUse" x1="1157" x2="1806"><stop offset="0" stop-color="#00f4ff"/><stop offset="0.3097" stop-color="#00edff"/><stop offset="0.3436" stop-color="#3aecff"/><stop offset="0.376" stop-color="#78ebff"/><stop offset="0.4052" stop-color="#b8e9ff"/><stop offset="0.4345" stop-color="#ffe8ff"/><stop offset="0.4484" stop-color="#ffcadf"/><stop offset="0.4653" stop-color="#ffacbf"/><stop offset="0.5023" stop-color="#ff7e8d"/><stop offset="0.5501" stop-color="#ff5763"/><stop offset="0.6086" stop-color="#ff3843"/><stop offset="0.6995" stop-color="#ff1b23"/><stop offset="0.8197" stop-color="#ff050b"/><stop offset="0.8998" stop-color="#ff0000"/><stop offset="1" stop-color="#ff0000"/></linearGradient>
<linearGradient id="s176" gradientUnits="userSpaceOnUse" x1="1158" x2="1808"><stop offset="0" stop-color="#00f1ff"/><stop offset="0.3062" stop-color="#00e8ff"/><stop offset="0.3385" stop-color="#36e7ff"/><stop offset="0.3723" stop-color="#76e5ff"/><stop offset="0.4031" stop-color="#b8e3ff"/><stop offset="0.4323" stop-color="#ffe1ff"/><stop offset="0.4631" stop-color="#ffa8c0"/><stop offset="0.5015" stop-color="#ff798c"/><stop offset="0.5492" stop-color="#ff5463"/><stop offset="0.6077" stop-color="#ff3643"/><stop offset="0.7015" stop-color="#ff1923"/><stop offset="0.8246" stop-color="#ff020a"/><stop offset="0.9015" stop-color="#ff0000"/><stop offset="1" stop-color="#ff0000"/></linearGradient>
<linearGradient id="s177" gradientUnits="userSpaceOnUse" x1="1158" x2="1811"><stop offset="0" stop-color="#00edff"/><stop offset="0.3047" stop-color="#01e3ff"/><stop offset="0.3691" stop-color="#74dfff"/><stop offset="0.4319" stop-color="#ffd8fc"/><stop offset="0.4625" stop-color="#ffa1be"/><stop offset="0.5008" stop-color="#ff748c"/><stop offset="0.5482" stop-color="#ff5063"/><stop offset="0.608" stop-color="#ff3342"/><stop offset="0.7044" stop-color="#ff1622"/><stop offset="0.8315" stop-color="#ff0009"/><stop offset="0.902" stop-color="#ff0000"/><stop offset="1" stop-color="#ff0000"/></linearGradient>
<linearGradient id="s178" gradientUnits="userSpaceOnUse" x1="1158" x2="1813"><stop offset="0" stop-color="#00eaff"/><stop offset="0.3023" stop-color="#00deff"/><stop offset="0.3679" stop-color="#75daff"/><stop offset="0.4305" stop-color="#ffd2fc"/><stop offset="0.4458" stop-color="#ffb5da"/><stop offset="0.4626" stop-color="#ff9bbc"/><stop offset="0.5008" stop-color="#ff708b"/><stop offset="0.5481" stop-color="#ff4d63"/><stop offset="0.6076" stop-color="#ff3042"/><stop offset="0.7008" stop-color="#ff1523"/><stop offset="0.8214" stop-color="#ff000b"/><stop offset="0.9053" stop-color="#ff0000"/><stop offset="1" stop-color="#ff0000"/></linearGradient>
<linearGradient id="s179" gradientUnits="userSpaceOnUse" x1="1159" x2="1816"><stop offset="0" stop-color="#00e6ff"/><stop offset="0.2983" stop-color="#00d9ff"/><stop offset="0.3303" stop-color="#34d7ff"/><stop offset="0.3638" stop-color="#72d4ff"/><stop offset="0.4277" stop-color="#ffcdfd"/><stop offset="0.4429" stop-color="#ffb0db"/><stop offset="0.4597" stop-color="#ff96bd"/><stop offset="0.4977" stop-color="#ff6c8c"/><stop offset="0.5449" stop-color="#ff4a64"/><stop offset="0.6043" stop-color="#ff2f43"/><stop offset="0.6941" stop-color="#ff1425"/><stop offset="0.8097" stop-color="#ff000d"/><stop offset="0.9056" stop-color="#ff0000"/><stop offset="1" stop-color="#ff0000"/></linearGradient>
<linearGradient id="s180" gradientUnits="userSpaceOnUse" x1="1159" x2="1819"><stop offset="0" stop-color="#00e3ff"/><stop offset="0.2955" stop-color="#00d4ff"/><stop offset="0.3273" stop-color="#33d2ff"/><stop offset="0.3621" stop-color="#73cfff"/><stop offset="0.3924" stop-color="#b2ccff"/><stop offset="0.4258" stop-color="#ffc7fd"/><stop offset="0.4576" stop-color="#ff92be"/><stop offset="0.4955" stop-color="#ff698d"/><stop offset="0.5439" stop-color="#ff4764"/><stop offset="0.603" stop-color="#ff2c44"/><stop offset="0.6894" stop-color="#ff1326"/><stop offset="0.8" stop-color="#ff000e"/><stop offset="0.9061" stop-color="#ff0000"/><stop offset="1" stop-color="#ff0000"/></linearGradient>
<linearGradient id="s181" gradientUnits="userSpaceOnUse" x1="1160" x2="1821"><stop offset="0" stop-color="#00e0ff"/><stop offset="0.2935" stop-color="#01d0ff"/><stop offset="0.3616" stop-color="#77caff"/><stop offset="0.3918" stop-color="#b6c6ff"/><stop offset="0.4236" stop-color="#ffc2fe"/><stop offset="0.4554" stop-color="#ff8ebf"/><stop offset="0.4932" stop-color="#ff668e"/><stop offset="0.5416" stop-color="#ff4565"/><stop offset="0.6021" stop-color="#ff2a44"/><stop offset="0.6853" stop-color="#ff1227"/><stop offset="0.7897" stop-color="#ff0010"/><stop offset="0.9077" stop-color="#ff0000"/><stop offset="1" stop-color="#ff0000"/></linearGradient>
<linearGradient id="s182" gradientUnits="userSpaceOnUse" x1="1160" x2="1824"><stop offset="0" stop-color="#00ddff"/><stop offset="0.2907" stop-color="#00cbff"/><stop offset="0.3268" stop-color="#3bc8ff"/><stop offset="0.3599" stop-color="#78c4ff"/><stop offset="0.3901" stop-color="#b6c1ff"/><stop offset="0.4217" stop-color="#ffbcfe"/><stop offset="0.4533" stop-color="#ff8ac0"/><stop offset="0.4925" stop-color="#ff628d"/><stop offset="0.5407" stop-color="#ff4265"/><stop offset="0.6009" stop-color="#ff2844"/><stop offset="0.6792" stop-color="#ff1228"/><stop offset="0.7786" stop-color="#ff0012"/><stop offset="0.9096" stop-color="#ff0000"/><stop offset="1" stop-color="#ff0000"/></linearGradient>
<linearGradient id="s183" gradientUnits="userSpaceOnUse" x1="1161" x2="1827"><stop offset="0" stop-color="#00d9ff"/><stop offset="0.2868" stop-color="#00c7ff"/><stop offset="0.3213" stop-color="#37c3ff"/><stop offset="0.3559" stop-color="#76bfff"/><stop offset="0.3874" stop-color="#b6bbff"/><stop offset="0.4189" stop-color="#ffb7ff"/><stop offset="0.4505" stop-color="#ff86c0"/><stop offset="0.4895" stop-color="#ff5f8e"/><stop offset="0.539" stop-color="#ff3f65"/><stop offset="0.5991" stop-color="#ff2544"/><stop offset="0.6742" stop-color="#ff112a"/><stop offset="0.7688" stop-color="#ff0014"/><stop offset="0.9099" stop-color="#ff0000"/><stop offset="1" stop-color="#ff0000"/></linearGradient>
<linearGradient id="s184" gradientUnits="userSpaceOnUse" x1="1161" x2="1829"><stop offset="0" stop-color="#00d6ff"/><stop offset="0.2844" stop-color="#00c2ff"/><stop offset="0.3159" stop-color="#31bfff"/><stop offset="0.3533" stop-color="#74bbff"/><stop offset="0.3862" stop-color="#b7b6ff"/><stop offset="0.4177" stop-color="#ffb1ff"/><stop offset="0.4491" stop-color="#ff82c1"/><stop offset="0.488" stop-color="#ff5c8f"/><stop offset="0.5374" stop-color="#ff3d66"/><stop offset="0.5973" stop-color="#ff2445"/><stop offset="0.6692" stop-color="#ff102b"/><stop offset="0.759" stop-color="#ff0016"/><stop offset="0.9117" stop-color="#ff0000"/><stop offset="1" stop-color="#ff0000"/></linearGradient>
<linearGradient id="s185" gradientUnits="userSpaceOnUse" x1="1162" x2="1832"><stop offset="0" stop-color="#00d3ff"/><stop offset="0.2821" stop-color="#00beff"/><stop offset="0.3507" stop-color="#75b6ff"/><stop offset="0.4164" stop-color="#ffaafc"/><stop offset="0.4478" stop-color="#ff7dc0"/><stop offset="0.4881" stop-color="#ff578d"/><stop offset="0.5373" stop-color="#ff3965"/><stop offset="0.597" stop-color="#ff2145"/><stop offset="0.6657" stop-color="#ff0f2c"/><stop offset="0.7478" stop-color="#ff0018"/><stop offset="0.9134" stop-color="#ff0000"/><stop offset="1" stop-color="#ff0000"/></linearGradient>
<linearGradient id="s186" gradientUnits="userSpaceOnUse" x1="1163" x2="1835"><stop offset="0" stop-color="#00d0ff"/><stop offset="0.2783" stop-color="#00baff"/><stop offset="0.3467" stop-color="#73b1ff"/><stop offset="0.4137" stop-color="#ffa5fd"/><stop offset="0.4449" stop-color="#ff79c0"/><stop offset="0.4851" stop-color="#ff548e"/><stop offset="0.5342" stop-color="#ff3765"/><stop offset="0.5952" stop-color="#ff1f45"/><stop offset="0.6592" stop-color="#ff0e2e"/><stop offset="0.7366" stop-color="#ff001a"/><stop offset="0.9137" stop-color="#ff0000"/><stop offset="1" stop-color="#ff0000"/></linearGradient>
<linearGradient id="s187" gradientUnits="userSpaceOnUse" x1="1163" x2="1837"><stop offset="0" stop-color="#00ccff"/><stop offset="0.276" stop-color="#00b6ff"/><stop offset="0.3101" stop-color="#35b1ff"/><stop offset="0.3457" stop-color="#73acff"/><stop offset="0.4125" stop-color="#ffa0fd"/><stop offset="0.4451" stop-color="#ff74bf"/><stop offset="0.4852" stop-color="#ff508d"/><stop offset="0.5341" stop-color="#ff3465"/><stop offset="0.595" stop-color="#ff1d45"/><stop offset="0.6558" stop-color="#ff0d2f"/><stop offset="0.7285" stop-color="#ff001c"/><stop offset="0.9154" stop-color="#ff0000"/><stop offset="1" stop-color="#ff0000"/></linearGradient>
<linearGradient id="s188" gradientUnits="userSpaceOnUse" x1="1164" x2="1840"><stop offset="0" stop-color="#00c9ff"/><stop offset="0.2737" stop-color="#01b1ff"/><stop offset="0.3447" stop-color="#77a8ff"/><stop offset="0.4098" stop-color="#ff9bfd"/><stop offset="0.4423" stop-color="#ff70c0"/><stop offset="0.4822" stop-color="#ff4d8e"/><stop offset="0.5325" stop-color="#ff3165"/><stop offset="0.5932" stop-color="#ff1b45"/><stop offset="0.716" stop-color="#ff001f"/><stop offset="0.7825" stop-color="#ff0012"/><stop offset="0.9172" stop-color="#ff0000"/><stop offset="1" stop-color="#ff0000"/></linearGradient>
<linearGradient id="s189" gradientUnits="userSpaceOnUse" x1="1165" x2="1842"><stop offset="0" stop-color="#00c6ff"/><stop offset="0.2703" stop-color="#00aeff"/><stop offset="0.3412" stop-color="#75a3ff"/><stop offset="0.3737" stop-color="#b59eff"/><stop offset="0.4077" stop-color="#ff96fe"/><stop offset="0.4402" stop-color="#ff6cc0"/><stop offset="0.4801" stop-color="#ff4b8f"/><stop offset="0.5303" stop-color="#ff2f66"/><stop offset="0.5923" stop-color="#ff1945"/><stop offset="0.7075" stop-color="#ff0021"/><stop offset="0.7814" stop-color="#ff0012"/><stop offset="0.9188" stop-color="#ff0000"/><stop offset="1" stop-color="#ff0000"/></linearGradient>
<linearGradient id="s190" gradientUnits="userSpaceOnUse" x1="1165" x2="1845"><stop offset="0" stop-color="#00c3ff"/><stop offset="0.2676" stop-color="#00aaff"/><stop offset="0.3044" stop-color="#38a4ff"/><stop offset="0.3397" stop-color="#769fff"/><stop offset="0.3721" stop-color="#b599ff"/><stop offset="0.4059" stop-color="#ff92fe"/><stop offset="0.4382" stop-color="#ff69c1"/><stop offset="0.4779" stop-color="#ff4890"/><stop offset="0.5279" stop-color="#ff2d67"/><stop offset="0.5897" stop-color="#ff1746"/><stop offset="0.6971" stop-color="#ff0023"/><stop offset="0.7779" stop-color="#ff0013"/><stop offset="0.9191" stop-color="#ff0000"/><stop offset="1" stop-color="#ff0000"/></linearGradient>
<linearGradient id="s191" gradientUnits="userSpaceOnUse" x1="1166" x2="1848"><stop offset="0" stop-color="#00c0ff"/><stop offset="0.2639" stop-color="#00a6ff"/><stop offset="0.2977" stop-color="#33a1ff"/><stop offset="0.3358" stop-color="#749bff"/><stop offset="0.3695" stop-color="#b594ff"/><stop offset="0.4032" stop-color="#ff8dff"/><stop offset="0.4355" stop-color="#ff65c2"/><stop offset="0.4765" stop-color="#ff448f"/><stop offset="0.5264" stop-color="#ff2a67"/><stop offset="0.588" stop-color="#ff1546"/><stop offset="0.6862" stop-color="#ff0026"/><stop offset="0.7771" stop-color="#ff0013"/><stop offset="0.9194" stop-color="#ff0000"/><stop offset="1" stop-color="#ff0000"/></linearGradient>
<linearGradient id="s192" gradientUnits="userSpaceOnUse" x1="1167" x2="1850"><stop offset="0" stop-color="#00bdff"/><stop offset="0.2621" stop-color="#01a2ff"/><stop offset="0.3353" stop-color="#7796ff"/><stop offset="0.369" stop-color="#b98fff"/><stop offset="0.4012" stop-color="#ff88ff"/><stop offset="0.4334" stop-color="#ff62c3"/><stop offset="0.4744" stop-color="#ff4290"/><stop offset="0.5242" stop-color="#ff2868"/><stop offset="0.5871" stop-color="#ff1346"/><stop offset="0.6779" stop-color="#ff0028"/><stop offset="0.776" stop-color="#ff0013"/><stop offset="0.9224" stop-color="#ff0000"/><stop offset="1" stop-color="#ff0000"/></linearGradient>
<linearGradient id="s193" gradientUnits="userSpaceOnUse" x1="1167" x2="1850"><stop offset="0" stop-color="#00baff"/><stop offset="0.2606" stop-color="#009eff"/><stop offset="0.3324" stop-color="#7392ff"/><stop offset="0.4026" stop-color="#ff82fc"/><stop offset="0.4348" stop-color="#ff5dc1"/><stop offset="0.4758" stop-color="#ff3e8f"/><stop offset="0.5256" stop-color="#ff2668"/><stop offset="0.5886" stop-color="#ff1147"/><stop offset="0.6706" stop-color="#ff002b"/><stop offset="0.776" stop-color="#ff0014"/><stop offset="0.9268" stop-color="#ff0000"/><stop offset="1" stop-color="#ff0000"/></linearGradient>
<linearGradient id="s194" gradientUnits="userSpaceOnUse" x1="1168" x2="1850"><stop offset="0" stop-color="#00b7ff"/><stop offset="0.2581" stop-color="#009bff"/><stop offset="0.2947" stop-color="#3695ff"/><stop offset="0.3314" stop-color="#748eff"/><stop offset="0.4018" stop-color="#ff7efd"/><stop offset="0.434" stop-color="#ff5ac2"/><stop offset="0.4751" stop-color="#ff3c90"/><stop offset="0.5249" stop-color="#ff2468"/><stop offset="0.588" stop-color="#ff1047"/><stop offset="0.6628" stop-color="#ff002d"/><stop offset="0.7742" stop-color="#ff0015"/><stop offset="0.9311" stop-color="#ff0000"/><stop offset="1" stop-color="#ff0000"/></linearGradient>
<linearGradient id="s195" gradientUnits="userSpaceOnUse" x1="1169" x2="1844"><stop offset="0" stop-color="#00b4ff"/><stop offset="0.2578" stop-color="#0097ff"/><stop offset="0.2933" stop-color="#3391ff"/><stop offset="0.3319" stop-color="#728aff"/><stop offset="0.3659" stop-color="#b083ff"/><stop offset="0.4044" stop-color="#ff79fd"/><stop offset="0.437" stop-color="#ff57c2"/><stop offset="0.4785" stop-color="#ff3991"/><stop offset="0.5289" stop-color="#ff2269"/><stop offset="0.5911" stop-color="#ff0f49"/><stop offset="0.6607" stop-color="#ff0030"/><stop offset="0.7719" stop-color="#ff0017"/><stop offset="0.9393" stop-color="#ff0001"/><stop offset="1" stop-color="#ff0000"/></linearGradient>
<linearGradient id="s196" gradientUnits="userSpaceOnUse" x1="1169" x2="1838"><stop offset="0" stop-color="#00b1ff"/><stop offset="0.2601" stop-color="#0093ff"/><stop offset="0.3363" stop-color="#7586ff"/><stop offset="0.3707" stop-color="#b47fff"/><stop offset="0.4081" stop-color="#ff75fe"/><stop offset="0.441" stop-color="#ff53c3"/><stop offset="0.4828" stop-color="#ff3792"/><stop offset="0.5321" stop-color="#ff206b"/><stop offset="0.5934" stop-color="#ff0e4b"/><stop offset="0.6607" stop-color="#ff0033"/><stop offset="0.7698" stop-color="#ff0019"/><stop offset="0.9193" stop-color="#ff0004"/><stop offset="1" stop-color="#ff0000"/></linearGradient>
<linearGradient id="s197" gradientUnits="userSpaceOnUse" x1="1170" x2="1833"><stop offset="0" stop-color="#00aeff"/><stop offset="0.2594" stop-color="#0090ff"/><stop offset="0.2986" stop-color="#3789ff"/><stop offset="0.3379" stop-color="#7682ff"/><stop offset="0.3725" stop-color="#b47bff"/><stop offset="0.4103" stop-color="#ff71fe"/><stop offset="0.4434" stop-color="#ff50c4"/><stop offset="0.4842" stop-color="#ff3594"/><stop offset="0.5339" stop-color="#ff1f6d"/><stop offset="0.5958" stop-color="#ff0d4c"/><stop offset="0.6576" stop-color="#ff0036"/><stop offset="0.7677" stop-color="#ff001b"/><stop offset="0.902" stop-color="#ff0007"/><stop offset="1" stop-color="#ff0000"/></linearGradient>
<linearGradient id="s198" gradientUnits="userSpaceOnUse" x1="1171" x2="1827"><stop offset="0" stop-color="#00abff"/><stop offset="0.2591" stop-color="#008dff"/><stop offset="0.2973" stop-color="#3486ff"/><stop offset="0.3384" stop-color="#747eff"/><stop offset="0.375" stop-color="#b476ff"/><stop offset="0.4131" stop-color="#ff6dfe"/><stop offset="0.4466" stop-color="#ff4dc4"/><stop offset="0.4878" stop-color="#ff3395"/><stop offset="0.5366" stop-color="#ff1e6e"/><stop offset="0.5976" stop-color="#ff0c4e"/><stop offset="0.6555" stop-color="#ff0039"/><stop offset="0.7637" stop-color="#ff001e"/><stop offset="0.8841" stop-color="#ff000b"/><stop offset="1" stop-color="#ff0000"/></linearGradient>
<linearGradient id="s199" gradientUnits="userSpaceOnUse" x1="1171" x2="1821"><stop offset="0" stop-color="#00a9ff"/><stop offset="0.2615" stop-color="#0189ff"/><stop offset="0.3431" stop-color="#777aff"/><stop offset="0.38" stop-color="#b772ff"/><stop offset="0.4169" stop-color="#ff69ff"/><stop offset="0.4508" stop-color="#ff4ac5"/><stop offset="0.4908" stop-color="#ff3197"/><stop offset="0.54" stop-color="#ff1c70"/><stop offset="0.6" stop-color="#ff0b50"/><stop offset="0.6538" stop-color="#ff003c"/><stop offset="0.7615" stop-color="#ff0020"/><stop offset="1" stop-color="#ff0000"/></linearGradient>
<linearGradient id="s200" gradientUnits="userSpaceOnUse" x1="1172" x2="1816"><stop offset="0" stop-color="#00a6ff"/><stop offset="0.2609" stop-color="#0086ff"/><stop offset="0.3043" stop-color="#3b7eff"/><stop offset="0.3447" stop-color="#7876ff"/><stop offset="0.3835" stop-color="#ba6eff"/><stop offset="0.4193" stop-color="#ff65ff"/><stop offset="0.4534" stop-color="#ff47c6"/><stop offset="0.4938" stop-color="#ff2f98"/><stop offset="0.5435" stop-color="#ff1a71"/><stop offset="0.6025" stop-color="#ff0a52"/><stop offset="0.6522" stop-color="#ff003f"/><stop offset="0.764" stop-color="#ff0022"/><stop offset="1" stop-color="#ff0001"/></linearGradient>
<linearGradient id="s201" gradientUnits="userSpaceOnUse" x1="1173" x2="1810"><stop offset="0" stop-color="#00a3ff"/><stop offset="0.2606" stop-color="#0083ff"/><stop offset="0.3438" stop-color="#7473ff"/><stop offset="0.4239" stop-color="#ff5ffc"/><stop offset="0.4584" stop-color="#ff43c4"/><stop offset="0.4992" stop-color="#ff2b97"/><stop offset="0.5479" stop-color="#ff1872"/><stop offset="0.6075" stop-color="#ff0853"/><stop offset="0.6499" stop-color="#ff0042"/><stop offset="0.7677" stop-color="#ff0023"/><stop offset="1" stop-color="#ff0002"/></linearGradient>
<linearGradient id="s202" gradientUnits="userSpaceOnUse" x1="1173" x2="1804"><stop offset="0" stop-color="#00a0ff"/><stop offset="0.2615" stop-color="#0080ff"/><stop offset="0.3027" stop-color="#3478ff"/><stop offset="0.3455" stop-color="#7270ff"/><stop offset="0.4279" stop-color="#ff5cfd"/><stop offset="0.4612" stop-color="#ff41c7"/><stop offset="0.5024" stop-color="#ff2a99"/><stop offset="0.5515" stop-color="#ff1774"/><stop offset="0.6117" stop-color="#ff0754"/><stop offset="0.6482" stop-color="#ff0046"/><stop offset="0.7702" stop-color="#ff0024"/><stop offset="1" stop-color="#ff0004"/></linearGradient>
<linearGradient id="s203" gradientUnits="userSpaceOnUse" x1="1174" x2="1799"><stop offset="0" stop-color="#009dff"/><stop offset="0.2624" stop-color="#017cff"/><stop offset="0.3488" stop-color="#756cff"/><stop offset="0.4304" stop-color="#ff58fd"/><stop offset="0.464" stop-color="#ff3ec8"/><stop offset="0.5056" stop-color="#ff279a"/><stop offset="0.5552" stop-color="#ff1574"/><stop offset="0.6144" stop-color="#ff0655"/><stop offset="0.6464" stop-color="#ff0049"/><stop offset="0.7712" stop-color="#ff0026"/><stop offset="1" stop-color="#ff0005"/></linearGradient>
<linearGradient id="s204" gradientUnits="userSpaceOnUse" x1="1174" x2="1793"><stop offset="0" stop-color="#009bff"/><stop offset="0.2633" stop-color="#0079ff"/><stop offset="0.3522" stop-color="#7668ff"/><stop offset="0.391" stop-color="#b360ff"/><stop offset="0.4346" stop-color="#ff54fe"/><stop offset="0.4685" stop-color="#ff3bc8"/><stop offset="0.5105" stop-color="#ff259b"/><stop offset="0.559" stop-color="#ff1476"/><stop offset="0.6187" stop-color="#ff0557"/><stop offset="0.6898" stop-color="#ff003d"/><stop offset="0.7754" stop-color="#ff0027"/><stop offset="1" stop-color="#ff0007"/></linearGradient>
<linearGradient id="s205" gradientUnits="userSpaceOnUse" x1="1175" x2="1787"><stop offset="0" stop-color="#0098ff"/><stop offset="0.2631" stop-color="#0076ff"/><stop offset="0.3072" stop-color="#356eff"/><stop offset="0.3529" stop-color="#7465ff"/><stop offset="0.3938" stop-color="#b35cff"/><stop offset="0.4379" stop-color="#ff51fe"/><stop offset="0.4722" stop-color="#ff38c9"/><stop offset="0.5131" stop-color="#ff249d"/><stop offset="0.5621" stop-color="#ff1278"/><stop offset="0.6225" stop-color="#ff0458"/><stop offset="0.6928" stop-color="#ff003f"/><stop offset="0.7778" stop-color="#ff0029"/><stop offset="1" stop-color="#ff0008"/></linearGradient>
<linearGradient id="s206" gradientUnits="userSpaceOnUse" x1="1176" x2="1782"><stop offset="0" stop-color="#0095ff"/><stop offset="0.264" stop-color="#0173ff"/><stop offset="0.3564" stop-color="#7761ff"/><stop offset="0.3977" stop-color="#b658ff"/><stop offset="0.4406" stop-color="#ff4dfe"/><stop offset="0.4752" stop-color="#ff35ca"/><stop offset="0.5165" stop-color="#ff219e"/><stop offset="0.566" stop-color="#ff1179"/><stop offset="0.6254" stop-color="#ff025a"/><stop offset="0.6964" stop-color="#ff0040"/><stop offset="0.7805" stop-color="#ff002a"/><stop offset="1" stop-color="#ff0009"/></linearGradient>
<linearGradient id="s207" gradientUnits="userSpaceOnUse" x1="1176" x2="1776"><stop offset="0" stop-color="#0093ff"/><stop offset="0.265" stop-color="#0070ff"/><stop offset="0.3133" stop-color="#3a68ff"/><stop offset="0.36" stop-color="#785eff"/><stop offset="0.4033" stop-color="#b954ff"/><stop offset="0.445" stop-color="#ff49ff"/><stop offset="0.48" stop-color="#ff32ca"/><stop offset="0.52" stop-color="#ff20a0"/><stop offset="0.57" stop-color="#ff0f7b"/><stop offset="0.6283" stop-color="#ff025c"/><stop offset="0.6983" stop-color="#ff0042"/><stop offset="0.7817" stop-color="#ff002c"/><stop offset="1" stop-color="#ff000b"/></linearGradient>
<linearGradient id="s208" gradientUnits="userSpaceOnUse" x1="1177" x2="1770"><stop offset="0" stop-color="#0090ff"/><stop offset="0.2648" stop-color="#006dff"/><stop offset="0.3153" stop-color="#3b64ff"/><stop offset="0.3626" stop-color="#785bff"/><stop offset="0.4064" stop-color="#b951ff"/><stop offset="0.4486" stop-color="#ff46ff"/><stop offset="0.484" stop-color="#ff2fcb"/><stop offset="0.5245" stop-color="#ff1da1"/><stop offset="0.5734" stop-color="#ff0e7c"/><stop offset="0.6324" stop-color="#ff005d"/><stop offset="0.7015" stop-color="#ff0044"/><stop offset="0.7841" stop-color="#ff002e"/><stop offset="1" stop-color="#ff000d"/></linearGradient>
<linearGradient id="s209" gradientUnits="userSpaceOnUse" x1="1178" x2="1765"><stop offset="0" stop-color="#008dff"/><stop offset="0.2641" stop-color="#006bff"/><stop offset="0.3118" stop-color="#3662ff"/><stop offset="0.3595" stop-color="#7258ff"/><stop offset="0.4532" stop-color="#ff41fd"/><stop offset="0.4889" stop-color="#ff2cc9"/><stop offset="0.5298" stop-color="#ff1aa0"/><stop offset="0.5792" stop-color="#ff0b7c"/><stop offset="0.6371" stop-color="#ff005e"/><stop offset="0.707" stop-color="#ff0044"/><stop offset="0.7888" stop-color="#ff002f"/><stop offset="1" stop-color="#ff000e"/></linearGradient>
<linearGradient id="s210" gradientUnits="userSpaceOnUse" x1="1178" x2="1759"><stop offset="0" stop-color="#008bff"/><stop offset="0.2668" stop-color="#0168ff"/><stop offset="0.3649" stop-color="#7555ff"/><stop offset="0.4578" stop-color="#ff3efd"/><stop offset="0.494" stop-color="#ff29ca"/><stop offset="0.5353" stop-color="#ff18a1"/><stop offset="0.5835" stop-color="#ff0a7e"/><stop offset="0.642" stop-color="#ff0060"/><stop offset="0.7108" stop-color="#ff0046"/><stop offset="0.7917" stop-color="#ff0031"/><stop offset="1" stop-color="#ff0010"/></linearGradient>
<linearGradient id="s211" gradientUnits="userSpaceOnUse" x1="1179" x2="1753"><stop offset="0" stop-color="#0088ff"/><stop offset="0.2666" stop-color="#0065ff"/><stop offset="0.3676" stop-color="#7652ff"/><stop offset="0.4617" stop-color="#ff3afd"/><stop offset="0.4965" stop-color="#ff27cd"/><stop offset="0.5383" stop-color="#ff17a3"/><stop offset="0.5871" stop-color="#ff0980"/><stop offset="0.6446" stop-color="#ff0062"/><stop offset="0.7125" stop-color="#ff0049"/><stop offset="0.7927" stop-color="#ff0033"/><stop offset="1" stop-color="#ff0011"/></linearGradient>
<linearGradient id="s212" gradientUnits="userSpaceOnUse" x1="1180" x2="1748"><stop offset="0" stop-color="#0085ff"/><stop offset="0.2658" stop-color="#0062ff"/><stop offset="0.368" stop-color="#744fff"/><stop offset="0.4137" stop-color="#b244ff"/><stop offset="0.4648" stop-color="#ff37fe"/><stop offset="0.5" stop-color="#ff24cd"/><stop offset="0.5423" stop-color="#ff14a3"/><stop offset="0.5915" stop-color="#ff0780"/><stop offset="0.6479" stop-color="#ff0063"/><stop offset="0.7165" stop-color="#ff004a"/><stop offset="0.7958" stop-color="#ff0034"/><stop offset="1" stop-color="#ff0013"/></linearGradient>
<linearGradient id="s213" gradientUnits="userSpaceOnUse" x1="1180" x2="1742"><stop offset="0" stop-color="#0083ff"/><stop offset="0.2669" stop-color="#0060ff"/><stop offset="0.3185" stop-color="#3656ff"/><stop offset="0.3719" stop-color="#754cff"/><stop offset="0.4199" stop-color="#b541ff"/><stop offset="0.4698" stop-color="#ff34fe"/><stop offset="0.5053" stop-color="#ff22ce"/><stop offset="0.5463" stop-color="#ff13a6"/><stop offset="0.621" stop-color="#ff0074"/><stop offset="0.653" stop-color="#ff0065"/><stop offset="0.7206" stop-color="#ff004c"/><stop offset="0.7989" stop-color="#ff0036"/><stop offset="1" stop-color="#ff0015"/></linearGradient>
<linearGradient id="s214" gradientUnits="userSpaceOnUse" x1="1181" x2="1736"><stop offset="0" stop-color="#0080ff"/><stop offset="0.2685" stop-color="#015dff"/><stop offset="0.3243" stop-color="#3b53ff"/><stop offset="0.3766" stop-color="#7848ff"/><stop offset="0.4252" stop-color="#b83dff"/><stop offset="0.4739" stop-color="#ff31fe"/><stop offset="0.5099" stop-color="#ff1fce"/><stop offset="0.5514" stop-color="#ff11a6"/><stop offset="0.618" stop-color="#ff007a"/><stop offset="0.6559" stop-color="#ff0067"/><stop offset="0.7225" stop-color="#ff004e"/><stop offset="0.8" stop-color="#ff0039"/><stop offset="1" stop-color="#ff0017"/></linearGradient>
<linearGradient id="s215" gradientUnits="userSpaceOnUse" x1="1182" x2="1731"><stop offset="0" stop-color="#007eff"/><stop offset="0.2678" stop-color="#005aff"/><stop offset="0.3242" stop-color="#3a50ff"/><stop offset="0.3789" stop-color="#7845ff"/><stop offset="0.4281" stop-color="#b83aff"/><stop offset="0.4772" stop-color="#ff2eff"/><stop offset="0.5118" stop-color="#ff1dd1"/><stop offset="0.5537" stop-color="#ff0fa8"/><stop offset="0.6157" stop-color="#ff007e"/><stop offset="0.6594" stop-color="#ff0069"/><stop offset="0.725" stop-color="#ff0050"/><stop offset="0.8033" stop-color="#ff003a"/><stop offset="1" stop-color="#ff0018"/></linearGradient>
<linearGradient id="s216" gradientUnits="userSpaceOnUse" x1="1182" x2="1725"><stop offset="0" stop-color="#007bff"/><stop offset="0.2689" stop-color="#0058ff"/><stop offset="0.326" stop-color="#394eff"/><stop offset="0.3812" stop-color="#7743ff"/><stop offset="0.4328" stop-color="#b837ff"/><stop offset="0.4825" stop-color="#ff2aff"/><stop offset="0.5175" stop-color="#ff1bd1"/><stop offset="0.5599" stop-color="#ff0da9"/><stop offset="0.6133" stop-color="#ff0084"/><stop offset="0.6648" stop-color="#ff006a"/><stop offset="0.7311" stop-color="#ff0051"/><stop offset="0.8066" stop-color="#ff003c"/><stop offset="1" stop-color="#ff001a"/></linearGradient>
<linearGradient id="s217" gradientUnits="userSpaceOnUse" x1="1183" x2="1719"><stop offset="0" stop-color="#0079ff"/><stop offset="0.2705" stop-color="#0155ff"/><stop offset="0.3843" stop-color="#7740ff"/><stop offset="0.4366" stop-color="#b834ff"/><stop offset="0.4869" stop-color="#ff27ff"/><stop offset="0.5224" stop-color="#ff18d2"/><stop offset="0.5634" stop-color="#ff0bab"/><stop offset="0.6101" stop-color="#ff008a"/><stop offset="0.6679" stop-color="#ff006c"/><stop offset="0.7332" stop-color="#ff0053"/><stop offset="0.8097" stop-color="#ff003e"/><stop offset="1" stop-color="#ff001c"/></linearGradient>
<linearGradient id="s218" gradientUnits="userSpaceOnUse" x1="1184" x2="1714"><stop offset="0" stop-color="#0076ff"/><stop offset="0.2698" stop-color="#0053ff"/><stop offset="0.3849" stop-color="#763dff"/><stop offset="0.4925" stop-color="#ff23fd"/><stop offset="0.5283" stop-color="#ff15d1"/><stop offset="0.5698" stop-color="#ff09aa"/><stop offset="0.6075" stop-color="#ff0090"/><stop offset="0.6736" stop-color="#ff006d"/><stop offset="0.8132" stop-color="#ff0040"/><stop offset="1" stop-color="#ff001e"/></linearGradient>
<linearGradient id="s219" gradientUnits="userSpaceOnUse" x1="1185" x2="1708"><stop offset="0" stop-color="#0074ff"/><stop offset="0.2696" stop-color="#0050ff"/><stop offset="0.3862" stop-color="#743bff"/><stop offset="0.4379" stop-color="#b12fff"/><stop offset="0.4971" stop-color="#ff20fd"/><stop offset="0.5335" stop-color="#ff12d1"/><stop offset="0.5736" stop-color="#ff07ac"/><stop offset="0.6042" stop-color="#ff0096"/><stop offset="0.6769" stop-color="#ff006f"/><stop offset="0.8145" stop-color="#ff0042"/><stop offset="1" stop-color="#ff0020"/></linearGradient>
<linearGradient id="s220" gradientUnits="userSpaceOnUse" x1="1186" x2="1702"><stop offset="0" stop-color="#0071ff"/><stop offset="0.2694" stop-color="#004eff"/><stop offset="0.3295" stop-color="#3744ff"/><stop offset="0.3895" stop-color="#7538ff"/><stop offset="0.4438" stop-color="#b42cff"/><stop offset="0.5019" stop-color="#ff1dfe"/><stop offset="0.5388" stop-color="#ff10d2"/><stop offset="0.5795" stop-color="#ff05ad"/><stop offset="0.6279" stop-color="#ff008c"/><stop offset="0.6822" stop-color="#ff0071"/><stop offset="0.8178" stop-color="#ff0044"/><stop offset="1" stop-color="#ff0022"/></linearGradient>
<linearGradient id="s221" gradientUnits="userSpaceOnUse" x1="1187" x2="1697"><stop offset="0" stop-color="#006fff"/><stop offset="0.2706" stop-color="#014bff"/><stop offset="0.3941" stop-color="#7835ff"/><stop offset="0.449" stop-color="#b729ff"/><stop offset="0.5059" stop-color="#ff1bfe"/><stop offset="0.5412" stop-color="#ff0ed4"/><stop offset="0.5824" stop-color="#ff03af"/><stop offset="0.6294" stop-color="#ff008f"/><stop offset="0.6843" stop-color="#ff0073"/><stop offset="0.8196" stop-color="#ff0046"/><stop offset="1" stop-color="#ff0024"/></linearGradient>
<linearGradient id="s222" gradientUnits="userSpaceOnUse" x1="1188" x2="1691"><stop offset="0" stop-color="#006cff"/><stop offset="0.2704" stop-color="#0049ff"/><stop offset="0.3956" stop-color="#7632ff"/><stop offset="0.4533" stop-color="#b726ff"/><stop offset="0.5109" stop-color="#ff18fe"/><stop offset="0.5467" stop-color="#ff0cd5"/><stop offset="0.5885" stop-color="#ff01b0"/><stop offset="0.6362" stop-color="#ff0090"/><stop offset="0.6899" stop-color="#ff0075"/><stop offset="0.8231" stop-color="#ff0048"/><stop offset="1" stop-color="#ff0026"/></linearGradient>
<linearGradient id="s223" gradientUnits="userSpaceOnUse" x1="1189" x2="1685"><stop offset="0" stop-color="#006aff"/><stop offset="0.2702" stop-color="#0047ff"/><stop offset="0.3367" stop-color="#3a3cff"/><stop offset="0.3992" stop-color="#7730ff"/><stop offset="0.4577" stop-color="#b723ff"/><stop offset="0.5161" stop-color="#ff15ff"/><stop offset="0.5524" stop-color="#ff09d5"/><stop offset="0.5927" stop-color="#ff00b2"/><stop offset="0.6391" stop-color="#ff0093"/><stop offset="0.6935" stop-color="#ff0077"/><stop offset="0.8266" stop-color="#ff004a"/><stop offset="1" stop-color="#ff0029"/></linearGradient>
<linearGradient id="s224" gradientUnits="userSpaceOnUse" x1="1189" x2="1680"><stop offset="0" stop-color="#0068ff"/><stop offset="0.2709" stop-color="#0045ff"/><stop offset="0.336" stop-color="#373aff"/><stop offset="0.4033" stop-color="#772dff"/><stop offset="0.4644" stop-color="#b920ff"/><stop offset="0.5214" stop-color="#ff12ff"/><stop offset="0.558" stop-color="#ff07d6"/><stop offset="0.5988" stop-color="#ff00b3"/><stop offset="0.6456" stop-color="#ff0094"/><stop offset="0.6986" stop-color="#ff0079"/><stop offset="0.8289" stop-color="#ff004d"/><stop offset="1" stop-color="#ff002b"/></linearGradient>
<linearGradient id="s225" gradientUnits="userSpaceOnUse" x1="1190" x2="1674"><stop offset="0" stop-color="#0065ff"/><stop offset="0.2727" stop-color="#0142ff"/><stop offset="0.3409" stop-color="#3a37ff"/><stop offset="0.407" stop-color="#782aff"/><stop offset="0.469" stop-color="#ba1dff"/><stop offset="0.5269" stop-color="#ff0fff"/><stop offset="0.564" stop-color="#ff05d6"/><stop offset="0.6033" stop-color="#ff00b5"/><stop offset="0.6488" stop-color="#ff0097"/><stop offset="0.7025" stop-color="#ff007b"/><stop offset="0.8326" stop-color="#ff004f"/><stop offset="1" stop-color="#ff002d"/></linearGradient>
<linearGradient id="s226" gradientUnits="userSpaceOnUse" x1="1191" x2="1668"><stop offset="0" stop-color="#0063ff"/><stop offset="0.2725" stop-color="#0040ff"/><stop offset="0.4067" stop-color="#7428ff"/><stop offset="0.5346" stop-color="#ff0cfd"/><stop offset="0.5786" stop-color="#ff00cf"/><stop offset="0.6101" stop-color="#ff00b5"/><stop offset="0.6562" stop-color="#ff0097"/><stop offset="0.7086" stop-color="#ff007d"/><stop offset="0.8365" stop-color="#ff0051"/><stop offset="1" stop-color="#ff0030"/></linearGradient>
<linearGradient id="s227" gradientUnits="userSpaceOnUse" x1="1192" x2="1663"><stop offset="0" stop-color="#0061ff"/><stop offset="0.2718" stop-color="#003eff"/><stop offset="0.3418" stop-color="#3832ff"/><stop offset="0.4098" stop-color="#7526ff"/><stop offset="0.5393" stop-color="#ff09fd"/><stop offset="0.5754" stop-color="#ff00d7"/><stop offset="0.6157" stop-color="#ff00b6"/><stop offset="0.7134" stop-color="#ff007e"/><stop offset="0.8386" stop-color="#ff0053"/><stop offset="1" stop-color="#ff0032"/></linearGradient>
<linearGradient id="s228" gradientUnits="userSpaceOnUse" x1="1193" x2="1657"><stop offset="0" stop-color="#005eff"/><stop offset="0.2737" stop-color="#013cff"/><stop offset="0.4138" stop-color="#7623ff"/><stop offset="0.4763" stop-color="#b317ff"/><stop offset="0.5453" stop-color="#ff07fe"/><stop offset="0.5711" stop-color="#ff00e2"/><stop offset="0.6207" stop-color="#ff00b8"/><stop offset="0.7177" stop-color="#ff0081"/><stop offset="0.8405" stop-color="#ff0056"/><stop offset="1" stop-color="#ff0034"/></linearGradient>
<linearGradient id="s229" gradientUnits="userSpaceOnUse" x1="1194" x2="1651"><stop offset="0" stop-color="#005cff"/><stop offset="0.2735" stop-color="#003aff"/><stop offset="0.4179" stop-color="#7621ff"/><stop offset="0.4836" stop-color="#b613ff"/><stop offset="0.5514" stop-color="#ff04fe"/><stop offset="0.5864" stop-color="#ff00da"/><stop offset="0.6258" stop-color="#ff00ba"/><stop offset="0.7221" stop-color="#ff0084"/><stop offset="0.8446" stop-color="#ff0059"/><stop offset="1" stop-color="#ff0037"/></linearGradient>
<linearGradient id="s230" gradientUnits="userSpaceOnUse" x1="1195" x2="1646"><stop offset="0" stop-color="#005aff"/><stop offset="0.2727" stop-color="#0037ff"/><stop offset="0.4213" stop-color="#771eff"/><stop offset="0.4878" stop-color="#b611ff"/><stop offset="0.5565" stop-color="#ff01fe"/><stop offset="0.592" stop-color="#ff00db"/><stop offset="0.6319" stop-color="#ff00bb"/><stop offset="0.7273" stop-color="#ff0085"/><stop offset="0.847" stop-color="#ff005b"/><stop offset="1" stop-color="#ff003a"/></linearGradient>
<linearGradient id="s231" gradientUnits="userSpaceOnUse" x1="1196" x2="1640"><stop offset="0" stop-color="#0057ff"/><stop offset="0.2725" stop-color="#0036ff"/><stop offset="0.3491" stop-color="#3829ff"/><stop offset="0.4257" stop-color="#771cff"/><stop offset="0.4955" stop-color="#b80eff"/><stop offset="0.5631" stop-color="#ff00ff"/><stop offset="0.5991" stop-color="#ff00db"/><stop offset="0.6374" stop-color="#ff00bd"/><stop offset="0.732" stop-color="#ff0088"/><stop offset="0.8514" stop-color="#ff005e"/><stop offset="1" stop-color="#ff003d"/></linearGradient>
<linearGradient id="s232" gradientUnits="userSpaceOnUse" x1="1196" x2="1634"><stop offset="0" stop-color="#0055ff"/><stop offset="0.2763" stop-color="#0133ff"/><stop offset="0.3562" stop-color="#3b27ff"/><stop offset="0.4315" stop-color="#7819ff"/><stop offset="0.5023" stop-color="#b80bff"/><stop offset="0.5708" stop-color="#ff00ff"/><stop offset="0.605" stop-color="#ff00dd"/><stop offset="0.6438" stop-color="#ff00bf"/><stop offset="0.7374" stop-color="#ff008a"/><stop offset="0.8539" stop-color="#ff0061"/><stop offset="1" stop-color="#ff0040"/></linearGradient>
<linearGradient id="s233" gradientUnits="userSpaceOnUse" x1="1197" x2="1629"><stop offset="0" stop-color="#0053ff"/><stop offset="0.2755" stop-color="#0031ff"/><stop offset="0.3588" stop-color="#3b24ff"/><stop offset="0.4352" stop-color="#7817ff"/><stop offset="0.5486" stop-color="#e200ff"/><stop offset="0.5764" stop-color="#ff00ff"/><stop offset="0.6505" stop-color="#ff00bf"/><stop offset="0.7431" stop-color="#ff008c"/><stop offset="0.8565" stop-color="#ff0063"/><stop offset="1" stop-color="#ff0042"/></linearGradient>
<linearGradient id="s234" gradientUnits="userSpaceOnUse" x1="1198" x2="1623"><stop offset="0" stop-color="#0051ff"/><stop offset="0.2753" stop-color="#002fff"/><stop offset="0.3576" stop-color="#3923ff"/><stop offset="0.4376" stop-color="#7715ff"/><stop offset="0.5435" stop-color="#d600ff"/><stop offset="0.5835" stop-color="#fe00ff"/><stop offset="0.6588" stop-color="#ff00c0"/><stop offset="0.7482" stop-color="#ff008f"/><stop offset="0.8612" stop-color="#ff0066"/><stop offset="1" stop-color="#ff0045"/></linearGradient>
<linearGradient id="s235" gradientUnits="userSpaceOnUse" x1="1199" x2="1617"><stop offset="0" stop-color="#004eff"/><stop offset="0.2751" stop-color="#002eff"/><stop offset="0.3565" stop-color="#3621ff"/><stop offset="0.4402" stop-color="#7613ff"/><stop offset="0.5383" stop-color="#cb00ff"/><stop offset="0.5909" stop-color="#fe00ff"/><stop offset="0.6651" stop-color="#ff00c2"/><stop offset="0.7536" stop-color="#ff0091"/><stop offset="0.8636" stop-color="#ff0069"/><stop offset="1" stop-color="#ff0049"/></linearGradient>
<linearGradient id="s236" gradientUnits="userSpaceOnUse" x1="1200" x2="1612"><stop offset="0" stop-color="#004cff"/><stop offset="0.2767" stop-color="#012bff"/><stop offset="0.3641" stop-color="#3a1eff"/><stop offset="0.4466" stop-color="#7810ff"/><stop offset="0.534" stop-color="#c200ff"/><stop offset="0.5971" stop-color="#fe00ff"/><stop offset="0.6723" stop-color="#ff00c3"/><stop offset="0.7597" stop-color="#ff0093"/><stop offset="0.8689" stop-color="#ff006b"/><stop offset="1" stop-color="#ff004c"/></linearGradient>
<linearGradient id="s237" gradientUnits="userSpaceOnUse" x1="1201" x2="1606"><stop offset="0" stop-color="#004aff"/><stop offset="0.2765" stop-color="#0029ff"/><stop offset="0.4494" stop-color="#770fff"/><stop offset="0.5284" stop-color="#b700ff"/><stop offset="0.6049" stop-color="#fe00ff"/><stop offset="0.679" stop-color="#ff00c5"/><stop offset="0.7654" stop-color="#ff0096"/><stop offset="0.8716" stop-color="#ff006f"/><stop offset="1" stop-color="#ff004f"/></linearGradient>
<linearGradient id="s238" gradientUnits="userSpaceOnUse" x1="1202" x2="1601"><stop offset="0" stop-color="#0048ff"/><stop offset="0.2757" stop-color="#0028ff"/><stop offset="0.3659" stop-color="#391bff"/><stop offset="0.4536" stop-color="#770cff"/><stop offset="0.5213" stop-color="#ad00ff"/><stop offset="0.6115" stop-color="#fd00ff"/><stop offset="0.6867" stop-color="#ff00c5"/><stop offset="0.7719" stop-color="#ff0098"/><stop offset="0.8747" stop-color="#ff0072"/><stop offset="1" stop-color="#ff0052"/></linearGradient>
<linearGradient id="s239" gradientUnits="userSpaceOnUse" x1="1203" x2="1595"><stop offset="0" stop-color="#0046ff"/><stop offset="0.2781" stop-color="#0126ff"/><stop offset="0.4592" stop-color="#780aff"/><stop offset="0.5179" stop-color="#a500ff"/><stop offset="0.6224" stop-color="#ff00ff"/><stop offset="0.6939" stop-color="#ff00c7"/><stop offset="0.7781" stop-color="#ff009a"/><stop offset="0.8801" stop-color="#ff0075"/><stop offset="1" stop-color="#ff0056"/></linearGradient>
<linearGradient id="s240" gradientUnits="userSpaceOnUse" x1="1204" x2="1589"><stop offset="0" stop-color="#0043ff"/><stop offset="0.2779" stop-color="#0024ff"/><stop offset="0.374" stop-color="#3a16ff"/><stop offset="0.4649" stop-color="#7808ff"/><stop offset="0.5117" stop-color="#9b00ff"/><stop offset="0.6312" stop-color="#ff00ff"/><stop offset="0.6987" stop-color="#ff00cb"/><stop offset="0.7818" stop-color="#ff009e"/><stop offset="0.8805" stop-color="#ff0079"/><stop offset="1" stop-color="#ff005a"/></linearGradient>
<linearGradient id="s241" gradientUnits="userSpaceOnUse" x1="1205" x2="1584"><stop offset="0" stop-color="#0041ff"/><stop offset="0.277" stop-color="#0022ff"/><stop offset="0.3773" stop-color="#3b14ff"/><stop offset="0.4697" stop-color="#7906ff"/><stop offset="0.504" stop-color="#9100ff"/><stop offset="0.6385" stop-color="#ff00ff"/><stop offset="0.7071" stop-color="#ff00cc"/><stop offset="0.7889" stop-color="#ff00a0"/><stop offset="0.8865" stop-color="#ff007c"/><stop offset="1" stop-color="#ff005e"/></linearGradient>
<linearGradient id="s242" gradientUnits="userSpaceOnUse" x1="1206" x2="1578"><stop offset="0" stop-color="#003fff"/><stop offset="0.2769" stop-color="#0020ff"/><stop offset="0.3763" stop-color="#3913ff"/><stop offset="0.4731" stop-color="#7704ff"/><stop offset="0.5618" stop-color="#b800ff"/><stop offset="0.6478" stop-color="#fe00ff"/><stop offset="0.7177" stop-color="#ff00cc"/><stop offset="0.7957" stop-color="#ff00a3"/><stop offset="0.8898" stop-color="#ff0080"/><stop offset="1" stop-color="#ff0062"/></linearGradient>
<linearGradient id="s243" gradientUnits="userSpaceOnUse" x1="1207" x2="1572"><stop offset="0" stop-color="#003dff"/><stop offset="0.2795" stop-color="#011eff"/><stop offset="0.3836" stop-color="#3b10ff"/><stop offset="0.4795" stop-color="#7802ff"/><stop offset="0.5699" stop-color="#b800ff"/><stop offset="0.6575" stop-color="#fe00ff"/><stop offset="0.726" stop-color="#ff00ce"/><stop offset="0.8027" stop-color="#ff00a6"/><stop offset="0.8932" stop-color="#ff0084"/><stop offset="1" stop-color="#ff0066"/></linearGradient>
<linearGradient id="s244" gradientUnits="userSpaceOnUse" x1="1208" x2="1567"><stop offset="0" stop-color="#003bff"/><stop offset="0.2786" stop-color="#001dff"/><stop offset="0.3844" stop-color="#3a0fff"/><stop offset="0.4847" stop-color="#7800ff"/><stop offset="0.5766" stop-color="#b800ff"/><stop offset="0.6657" stop-color="#fe00ff"/><stop offset="0.7354" stop-color="#ff00cf"/><stop offset="0.8078" stop-color="#ff00a9"/><stop offset="0.8969" stop-color="#ff0087"/><stop offset="1" stop-color="#ff006a"/></linearGradient>
<linearGradient id="s245" gradientUnits="userSpaceOnUse" x1="1209" x2="1561"><stop offset="0" stop-color="#0039ff"/><stop offset="0.2784" stop-color="#001bff"/><stop offset="0.3864" stop-color="#3a0dff"/><stop offset="0.4886" stop-color="#7700ff"/><stop offset="0.5852" stop-color="#b800ff"/><stop offset="0.6761" stop-color="#fe00ff"/><stop offset="0.7443" stop-color="#ff00d1"/><stop offset="0.8153" stop-color="#ff00ac"/><stop offset="0.9006" stop-color="#ff008b"/><stop offset="1" stop-color="#ff006f"/></linearGradient>
<linearGradient id="s246" gradientUnits="userSpaceOnUse" x1="1210" x2="1555"><stop offset="0" stop-color="#0036ff"/><stop offset="0.2812" stop-color="#0119ff"/><stop offset="0.4957" stop-color="#7800ff"/><stop offset="0.5942" stop-color="#b900ff"/><stop offset="0.687" stop-color="#fd00ff"/><stop offset="0.7536" stop-color="#ff00d3"/><stop offset="0.8232" stop-color="#ff00af"/><stop offset="0.9043" stop-color="#ff0090"/><stop offset="1" stop-color="#ff0074"/></linearGradient>
<linearGradient id="s247" gradientUnits="userSpaceOnUse" x1="1211" x2="1550"><stop offset="0" stop-color="#0034ff"/><stop offset="0.2802" stop-color="#0117ff"/><stop offset="0.4602" stop-color="#6000ff"/><stop offset="0.5015" stop-color="#7800ff"/><stop offset="0.6018" stop-color="#b900ff"/><stop offset="0.6991" stop-color="#ff00ff"/><stop offset="0.7611" stop-color="#ff00d5"/><stop offset="0.8289" stop-color="#ff00b2"/><stop offset="0.9086" stop-color="#ff0093"/><stop offset="1" stop-color="#ff0078"/></linearGradient>
<linearGradient id="s248" gradientUnits="userSpaceOnUse" x1="1212" x2="1544"><stop offset="0" stop-color="#0032ff"/><stop offset="0.2801" stop-color="#0016ff"/><stop offset="0.4518" stop-color="#5800ff"/><stop offset="0.509" stop-color="#7900ff"/><stop offset="0.6114" stop-color="#b900ff"/><stop offset="0.7108" stop-color="#ff00ff"/><stop offset="0.7711" stop-color="#ff00d7"/><stop offset="0.8373" stop-color="#ff00b6"/><stop offset="0.9127" stop-color="#ff0098"/><stop offset="1" stop-color="#ff007d"/></linearGradient>
<linearGradient id="s249" gradientUnits="userSpaceOnUse" x1="1213" x2="1538"><stop offset="0" stop-color="#0030ff"/><stop offset="0.28" stop-color="#0014ff"/><stop offset="0.4462" stop-color="#5200ff"/><stop offset="0.5138" stop-color="#7700ff"/><stop offset="0.6215" stop-color="#b900ff"/><stop offset="0.7231" stop-color="#ff00ff"/><stop offset="0.7815" stop-color="#ff00d9"/><stop offset="0.8462" stop-color="#ff00b9"/><stop offset="1" stop-color="#ff0083"/></linearGradient>
<linearGradient id="s250" gradientUnits="userSpaceOnUse" x1="1214" x2="1533"><stop offset="0" stop-color="#002eff"/><stop offset="0.2821" stop-color="#0112ff"/><stop offset="0.4357" stop-color="#4a00ff"/><stop offset="0.5204" stop-color="#7800ff"/><stop offset="0.6301" stop-color="#b900ff"/><stop offset="0.7335" stop-color="#ff00ff"/><stop offset="0.79" stop-color="#ff00dc"/><stop offset="0.8527" stop-color="#ff00bc"/><stop offset="1" stop-color="#ff0088"/></linearGradient>
<linearGradient id="s251" gradientUnits="userSpaceOnUse" x1="1215" x2="1527"><stop offset="0" stop-color="#002cff"/><stop offset="0.2821" stop-color="#0111ff"/><stop offset="0.4263" stop-color="#4300ff"/><stop offset="0.5288" stop-color="#7800ff"/><stop offset="0.641" stop-color="#b900ff"/><stop offset="0.7468" stop-color="#fe00ff"/><stop offset="0.8622" stop-color="#ff00bf"/><stop offset="1" stop-color="#ff008e"/></linearGradient>
<linearGradient id="s252" gradientUnits="userSpaceOnUse" x1="1216" x2="1521"><stop offset="0" stop-color="#002aff"/><stop offset="0.282" stop-color="#000fff"/><stop offset="0.4164" stop-color="#3c00ff"/><stop offset="0.5344" stop-color="#7700ff"/><stop offset="0.6525" stop-color="#b900ff"/><stop offset="0.7607" stop-color="#fe00ff"/><stop offset="0.8721" stop-color="#ff00c3"/><stop offset="1" stop-color="#ff0094"/></linearGradient>
<linearGradient id="s253" gradientUnits="userSpaceOnUse" x1="1217" x2="1516"><stop offset="0" stop-color="#0028ff"/><stop offset="0.2809" stop-color="#000eff"/><stop offset="0.408" stop-color="#3700ff"/><stop offset="0.5418" stop-color="#7800ff"/><stop offset="0.6622" stop-color="#ba00ff"/><stop offset="0.7726" stop-color="#fe00ff"/><stop offset="0.8796" stop-color="#ff00c6"/><stop offset="1" stop-color="#ff009a"/></linearGradient>
<linearGradient id="s254" gradientUnits="userSpaceOnUse" x1="1218" x2="1510"><stop offset="0" stop-color="#0026ff"/><stop offset="0.2842" stop-color="#010cff"/><stop offset="0.3973" stop-color="#3000ff"/><stop offset="0.5514" stop-color="#7800ff"/><stop offset="0.6747" stop-color="#ba00ff"/><stop offset="0.7877" stop-color="#fd00ff"/><stop offset="0.8904" stop-color="#ff00ca"/><stop offset="1" stop-color="#ff00a0"/></linearGradient>
<linearGradient id="s255" gradientUnits="userSpaceOnUse" x1="1220" x2="1504"><stop offset="0" stop-color="#0024ff"/><stop offset="0.2817" stop-color="#000bff"/><stop offset="0.3838" stop-color="#2900ff"/><stop offset="0.5563" stop-color="#7700ff"/><stop offset="0.6831" stop-color="#b800ff"/><stop offset="0.8063" stop-color="#ff00ff"/><stop offset="0.8944" stop-color="#ff00d0"/><stop offset="1" stop-color="#ff00a8"/></linearGradient>
<linearGradient id="s256" gradientUnits="userSpaceOnUse" x1="1221" x2="1499"><stop offset="0" stop-color="#0022ff"/><stop offset="0.2806" stop-color="#0009ff"/><stop offset="0.3741" stop-color="#2400ff"/><stop offset="0.5647" stop-color="#7700ff"/><stop offset="0.6942" stop-color="#b800ff"/><stop offset="0.8201" stop-color="#ff00ff"/><stop offset="0.9029" stop-color="#ff00d4"/><stop offset="1" stop-color="#ff00ae"/></linearGradient>
<linearGradient id="s257" gradientUnits="userSpaceOnUse" x1="1222" x2="1493"><stop offset="0" stop-color="#0020ff"/><stop offset="0.2804" stop-color="#0008ff"/><stop offset="0.3616" stop-color="#1e00ff"/><stop offset="0.5756" stop-color="#7800ff"/><stop offset="0.7122" stop-color="#ba00ff"/><stop offset="0.8376" stop-color="#ff00ff"/><stop offset="0.9151" stop-color="#ff00d8"/><stop offset="1" stop-color="#ff00b6"/></linearGradient>
<linearGradient id="s258" gradientUnits="userSpaceOnUse" x1="1224" x2="1487"><stop offset="0" stop-color="#001eff"/><stop offset="0.2814" stop-color="#0106ff"/><stop offset="0.346" stop-color="#1800ff"/><stop offset="0.5856" stop-color="#7800ff"/><stop offset="0.7262" stop-color="#ba00ff"/><stop offset="0.8555" stop-color="#ff00ff"/><stop offset="1" stop-color="#ff00be"/></linearGradient>
<linearGradient id="s259" gradientUnits="userSpaceOnUse" x1="1225" x2="1482"><stop offset="0" stop-color="#001cff"/><stop offset="0.2802" stop-color="#0005ff"/><stop offset="0.3307" stop-color="#1200ff"/><stop offset="0.5914" stop-color="#7700ff"/><stop offset="0.7354" stop-color="#b900ff"/><stop offset="0.8716" stop-color="#fe00ff"/><stop offset="1" stop-color="#ff00c6"/></linearGradient>
<linearGradient id="s260" gradientUnits="userSpaceOnUse" x1="1226" x2="1476"><stop offset="0" stop-color="#001aff"/><stop offset="0.28" stop-color="#0003ff"/><stop offset="0.444" stop-color="#3900ff"/><stop offset="0.604" stop-color="#7700ff"/><stop offset="0.752" stop-color="#b900ff"/><stop offset="0.892" stop-color="#fe00ff"/><stop offset="1" stop-color="#ff00cf"/></linearGradient>
<linearGradient id="s261" gradientUnits="userSpaceOnUse" x1="1228" x2="1470"><stop offset="0" stop-color="#0017ff"/><stop offset="0.281" stop-color="#0102ff"/><stop offset="0.4545" stop-color="#3b00ff"/><stop offset="0.6157" stop-color="#7800ff"/><stop offset="0.7686" stop-color="#b900ff"/><stop offset="0.9132" stop-color="#fe00ff"/><stop offset="1" stop-color="#ff00d9"/></linearGradient>
<linearGradient id="s262" gradientUnits="userSpaceOnUse" x1="1229" x2="1465"><stop offset="0" stop-color="#0015ff"/><stop offset="0.2797" stop-color="#0100ff"/><stop offset="0.4576" stop-color="#3a00ff"/><stop offset="0.6271" stop-color="#7800ff"/><stop offset="0.7839" stop-color="#b900ff"/><stop offset="0.9322" stop-color="#fe00ff"/><stop offset="1" stop-color="#ff00e2"/></linearGradient>
<linearGradient id="s263" gradientUnits="userSpaceOnUse" x1="1230" x2="1459"><stop offset="0" stop-color="#0014ff"/><stop offset="0.2795" stop-color="#0000ff"/><stop offset="0.4629" stop-color="#3a00ff"/><stop offset="0.6376" stop-color="#7700ff"/><stop offset="0.8035" stop-color="#b900ff"/><stop offset="0.9563" stop-color="#fd00ff"/><stop offset="1" stop-color="#ff00ed"/></linearGradient>
<linearGradient id="s264" gradientUnits="userSpaceOnUse" x1="1232" x2="1453"><stop offset="0" stop-color="#0011ff"/><stop offset="0.2805" stop-color="#0100ff"/><stop offset="0.6244" stop-color="#6e00ff"/><stop offset="0.81" stop-color="#b400ff"/><stop offset="0.9819" stop-color="#fd00ff"/><stop offset="1" stop-color="#ff00f9"/></linearGradient>
<linearGradient id="s265" gradientUnits="userSpaceOnUse" x1="1233" x2="1448"><stop offset="0" stop-color="#000fff"/><stop offset="0.2791" stop-color="#0100ff"/><stop offset="0.6605" stop-color="#7600ff"/><stop offset="0.8372" stop-color="#b800ff"/><stop offset="1" stop-color="#fb00ff"/></linearGradient>
<linearGradient id="s266" gradientUnits="userSpaceOnUse" x1="1235" x2="1442"><stop offset="0" stop-color="#000dff"/><stop offset="0.1981" stop-color="#0000ff"/><stop offset="0.2754" stop-color="#0000ff"/><stop offset="0.657" stop-color="#7100ff"/><stop offset="0.8309" stop-color="#ad00ff"/><stop offset="1" stop-color="#ef00ff"/></linearGradient>
<linearGradient id="s267" gradientUnits="userSpaceOnUse" x1="1237" x2="1436"><stop offset="0" stop-color="#000bff"/><stop offset="0.1759" stop-color="#0000ff"/><stop offset="0.2714" stop-color="#0000ff"/><stop offset="0.6533" stop-color="#6b00ff"/><stop offset="1" stop-color="#e300ff"/></linearGradient>
<linearGradient id="s268" gradientUnits="userSpaceOnUse" x1="1238" x2="1431"><stop offset="0" stop-color="#0009ff"/><stop offset="0.1503" stop-color="#0000ff"/><stop offset="0.2746" stop-color="#0100ff"/><stop offset="0.658" stop-color="#6800ff"/><stop offset="1" stop-color="#d900ff"/></linearGradient>
<linearGradient id="s269" gradientUnits="userSpaceOnUse" x1="1240" x2="1425"><stop offset="0" stop-color="#0007ff"/><stop offset="0.1189" stop-color="#0000ff"/><stop offset="0.2703" stop-color="#0100ff"/><stop offset="0.6541" stop-color="#6300ff"/><stop offset="1" stop-color="#ce00ff"/></linearGradient>
<linearGradient id="s270" gradientUnits="userSpaceOnUse" x1="1242" x2="1419"><stop offset="0" stop-color="#0005ff"/><stop offset="0.2655" stop-color="#0000ff"/><stop offset="0.6497" stop-color="#5d00ff"/><stop offset="1" stop-color="#c300ff"/></linearGradient>
<linearGradient id="s271" gradientUnits="userSpaceOnUse" x1="1244" x2="1414"><stop offset="0" stop-color="#0003ff"/><stop offset="0.2588" stop-color="#0000ff"/><stop offset="0.6471" stop-color="#5900ff"/><stop offset="1" stop-color="#ba00ff"/></linearGradient>
<linearGradient id="s272" gradientUnits="userSpaceOnUse" x1="1246" x2="1408"><stop offset="0" stop-color="#0001ff"/><stop offset="0.2593" stop-color="#0100ff"/><stop offset="0.6481" stop-color="#5500ff"/><stop offset="1" stop-color="#b000ff"/></linearGradient>
<linearGradient id="s273" gradientUnits="userSpaceOnUse" x1="1249" x2="1402"><stop offset="0" stop-color="#0000ff"/><stop offset="0.2484" stop-color="#0100ff"/><stop offset="0.6405" stop-color="#5000ff"/><stop offset="1" stop-color="#a600ff"/></linearGradient>
<linearGradient id="s274" gradientUnits="userSpaceOnUse" x1="1251" x2="1397"><stop offset="0" stop-color="#0000ff"/><stop offset="0.2397" stop-color="#0000ff"/><stop offset="0.637" stop-color="#4c00ff"/><stop offset="1" stop-color="#9e00ff"/></linearGradient>
<linearGradient id="s275" gradientUnits="userSpaceOnUse" x1="1254" x2="1391"><stop offset="0" stop-color="#0000ff"/><stop offset="0.2336" stop-color="#0100ff"/><stop offset="0.6277" stop-color="#4700ff"/><stop offset="1" stop-color="#9400ff"/></linearGradient>
<linearGradient id="s276" gradientUnits="userSpaceOnUse" x1="1257" x2="1385"><stop offset="0" stop-color="#0000ff"/><stop offset="0.2188" stop-color="#0100ff"/><stop offset="0.625" stop-color="#4400ff"/><stop offset="1" stop-color="#8b00ff"/></linearGradient>
<linearGradient id="s277" gradientUnits="userSpaceOnUse" x1="1260" x2="1380"><stop offset="0" stop-color="#0000ff"/><stop offset="0.2" stop-color="#0000ff"/><stop offset="0.6167" stop-color="#4000ff"/><stop offset="1" stop-color="#8300ff"/></linearGradient>
<linearGradient id="s278" gradientUnits="userSpaceOnUse" x1="1263" x2="1374"><stop offset="0" stop-color="#0000ff"/><stop offset="0.1802" stop-color="#0000ff"/><stop offset="0.6036" stop-color="#3c00ff"/><stop offset="1" stop-color="#7b00ff"/></linearGradient>
<linearGradient id="s279" gradientUnits="userSpaceOnUse" x1="1266" x2="1368"><stop offset="0" stop-color="#0000ff"/><stop offset="0.1667" stop-color="#0100ff"/><stop offset="1" stop-color="#7200ff"/></linearGradient>
<linearGradient id="s280" gradientUnits="userSpaceOnUse" x1="1269" x2="1363"><stop offset="0" stop-color="#0000ff"/><stop offset="0.1383" stop-color="#0100ff"/><stop offset="1" stop-color="#6b00ff"/></linearGradient>
<linearGradient id="s281" gradientUnits="userSpaceOnUse" x1="1272" x2="1357"><stop offset="0" stop-color="#0000ff"/><stop offset="0.1059" stop-color="#0000ff"/><stop offset="1" stop-color="#6300ff"/></linearGradient>
<linearGradient id="in1" x1="0" x2="1" y1="0" y2="0"><stop offset="0" stop-color="#ffa284"/><stop offset="1" stop-color="#ff6648"/></linearGradient>
<linearGradient id="in2" x1="0" x2="1" y1="0" y2="0"><stop offset="0" stop-color="#ff6a94"/><stop offset="1" stop-color="#ff385a"/></linearGradient>
<linearGradient id="inm" x1="0" x2="0" y1="0" y2="1"><stop offset="0" stop-color="#fff" stop-opacity="0"/><stop offset="1" stop-color="#fff" stop-opacity="1"/></linearGradient>
<mask id="inmask"><rect x="1648" y="186" width="252" height="213" fill="url(#inm)"/></mask>
<linearGradient id="rb1" x1="0" x2="0" y1="0" y2="1"><stop offset="0" stop-color="#ff6262"/><stop offset="1" stop-color="#ff3a3a"/></linearGradient>
<linearGradient id="rb2" x1="0" x2="0" y1="0" y2="1"><stop offset="0" stop-color="#5eb85e"/><stop offset="1" stop-color="#3ca03c"/></linearGradient>
<linearGradient id="rb3" x1="0" x2="0" y1="0" y2="1"><stop offset="0" stop-color="#6464ff"/><stop offset="1" stop-color="#4646ff"/></linearGradient>
<linearGradient id="thead" x1="0" x2="0" y1="0" y2="1"><stop offset="0" stop-color="#383838"/><stop offset=".47" stop-color="#2e2e2e"/><stop offset=".5" stop-color="#181818"/><stop offset="1" stop-color="#131313"/></linearGradient>
<linearGradient id="bbar" x1="0" x2="0" y1="0" y2="1"><stop offset="0" stop-color="#4a4a4a"/><stop offset="1" stop-color="#282828"/></linearGradient>
<linearGradient id="bbtn" x1="0" x2="0" y1="0" y2="1"><stop offset="0" stop-color="#9a9a9a"/><stop offset=".1" stop-color="#8c8c8c"/><stop offset="1" stop-color="#6c6c6c"/></linearGradient>
<linearGradient id="bbt2" x1="0" x2="0" y1="0" y2="1"><stop offset="0" stop-color="#a6a6a6"/><stop offset=".12" stop-color="#989898"/><stop offset="1" stop-color="#6e6e6e"/></linearGradient>
<linearGradient id="stopg" x1="0" x2="0" y1="0" y2="1"><stop offset="0" stop-color="#bcbcbc"/><stop offset=".5" stop-color="#a8a8a8"/><stop offset=".52" stop-color="#8e8e8e"/><stop offset="1" stop-color="#8a8a8a"/></linearGradient>
<linearGradient id="stopk" x1="0" x2="0" y1="0" y2="1"><stop offset="0" stop-color="#303030"/><stop offset=".5" stop-color="#222"/><stop offset=".52" stop-color="#000"/><stop offset="1" stop-color="#000"/></linearGradient>
</defs>
<rect width="1920" height="1166" fill="#333333"/>
<rect width="1920" height="26" fill="#ebf3f9"/>
<rect width="1920" height="1" fill="#8a8a8a"/>
<rect y="26" width="1920" height="55" fill="#222222"/>
<rect x="0" y="26" width="1" height="1140" fill="#777"/>
<g transform="translate(14.5,12.5) rotate(45)"><rect x="-4.6" y="-4.6" width="4.4" height="4.4" rx="1" fill="#f5c518"/><rect x="0.2" y="-4.6" width="4.4" height="4.4" rx="1" fill="#2fbf3a"/><rect x="-4.6" y="0.2" width="4.4" height="4.4" rx="1" fill="#2ea8e6"/><rect x="0.2" y="0.2" width="4.4" height="4.4" rx="1" fill="#f0306a"/></g>
<text x="26.0" y="17.0" font-size="11.20" fill="#1a1a1a" textLength="324.0" lengthAdjust="spacingAndGlyphs" >Calman 2024 Calman Ultimate for Business 15 Days Remaining&#160; - Untitled</text>
<path d="M1819.5 13.5h10" stroke="#222" stroke-width="1"/><rect x="1856.5" y="8.5" width="9" height="9" rx="1.5" fill="none" stroke="#222" stroke-width="1"/><path d="M1895 8l10 10M1905 8l-10 10" stroke="#222" stroke-width="1"/>
<rect x="160" y="36.5" width="1760" height="4" fill="url(#rb)"/>
<path d="M1 26H153V46Q153 50 149 50H5Q1 50 1 46Z" fill="url(#redtab)"/>
<g transform="translate(29.7,37.8) rotate(45) scale(1.08)" fill="none" stroke="#fff" stroke-width="1.5"><rect x="-6.2" y="-6.2" width="5.6" height="5.6" rx="1"/><rect x="0.6" y="-6.2" width="5.6" height="5.6" rx="1"/><rect x="-6.2" y="0.6" width="5.6" height="5.6" rx="1"/><rect x="0.6" y="0.6" width="5.6" height="5.6" rx="1"/></g>
<text x="42.0" y="43.6" font-size="20.50" fill="#ffffff" textLength="72.0" lengthAdjust="spacingAndGlyphs" >calman</text>
<circle cx="139.5" cy="38.5" r="8" fill="#c81818"/><path d="M135.5 36.5h8l-4 4.5z" fill="#fff"/>
<path d="M0 55H20Q23 55 23 58V76Q23 79 20 79H0Z" fill="url(#btn)" stroke="#a0a0a0" stroke-width="1"/><circle cx="11" cy="67" r="8.5" fill="#666"/><path d="M8.5 62.5l6 4.5l-6 4.5z" fill="#f0f0f0"/>
<path d="M25.5 81V58Q25.5 55.5 28 55.5H99.5Q102 55.5 102 58V81Z" fill="url(#tab)" stroke="#5a5a5a" stroke-width="1"/><path d="M74.5 56V81" stroke="#5a5a5a"/>
<text x="30.5" y="72.5" font-size="10.50" fill="#dcdcdc" textLength="39.0" lengthAdjust="spacingAndGlyphs" >History 1</text>
<circle cx="87.5" cy="69" r="8" fill="#3c3c3c"/><path d="M84.5 69.5h6M87.5 66.5v6" stroke="#6a6a6a" stroke-width="1"/>
<path d="M1507 80.2V59Q1507 55.5 1510.5 55.5H1623.5Q1627 55.5 1627 59V80.2Z" fill="url(#wid)"/>
<rect x="1507" y="56" width="4.5" height="24.2" fill="#22dd22"/>
<circle cx="1580.5" cy="68.5" r="8.5" fill="#585858"/><path d="M1576.5 67h8l-4 4.5z" fill="#fff"/>
<text x="1514.5" y="65.0" font-size="9.80" fill="#f4f4f4" textLength="55.0" lengthAdjust="spacingAndGlyphs" >X-Rite i1Pro 3</text>
<text x="1514.5" y="77.0" font-size="9.80" fill="#f4f4f4" textLength="47.0" lengthAdjust="spacingAndGlyphs" >Direct View</text>
<path d="M1596.5 57V80" stroke="#3e3e3e"/>
<circle cx="1613.8" cy="68" r="10.5" fill="#0000ee" stroke="#d0d0ff" stroke-width="1"/>
<text x="1613.8" y="71.0" font-size="7.80" fill="#ffffff" text-anchor="middle" textLength="13.0" lengthAdjust="spacingAndGlyphs" font-weight="bold" >375</text>
<path d="M1632.5 80.2V59Q1632.5 55.5 1636 55.5H1737Q1740.5 55.5 1740.5 59V80.2Z" fill="url(#wid)"/>
<rect x="1632.5" y="56" width="4.5" height="24.2" fill="#f0f0f0"/>
<circle cx="1727" cy="68.5" r="8.5" fill="#585858"/><path d="M1723 67h8l-4 4.5z" fill="#fff"/>
<text x="1640.0" y="65.0" font-size="9.80" fill="#f4f4f4" textLength="53.5" lengthAdjust="spacingAndGlyphs" >Mobile Forge</text>
<path d="M1745.5 80.2V59Q1745.5 55.5 1749 55.5H1862Q1865.5 55.5 1865.5 59V80.2Z" fill="url(#wid)"/>
<rect x="1745.5" y="56" width="4.5" height="24.2" fill="#f0f000"/>
<circle cx="1852.3" cy="68.5" r="8.5" fill="#585858"/><path d="M1848.3 67h8l-4 4.5z" fill="#fff"/>
<text x="1753.0" y="65.0" font-size="9.80" fill="#f4f4f4" textLength="88.5" lengthAdjust="spacingAndGlyphs" >Direct Display Control</text>
<rect x="1868.5" y="55.5" width="27.5" height="24" rx="3" fill="url(#btn)" stroke="#a8a8a8"/>
<g transform="translate(1882.3,67.5)" fill="none" stroke="#efefef"><circle r="3.6" stroke-width="1.8"/><g stroke-width="2"><path d="M0 -6.2V-4M0 6.2V4M-6.2 0H-4M6.2 0H4M-4.4 -4.4L-2.9 -2.9M4.4 4.4L2.9 2.9M-4.4 4.4L-2.9 2.9M4.4 -4.4L2.9 -2.9"/></g></g>
<path d="M1920 55.5H1900Q1897.5 55.5 1897.5 58V77Q1897.5 79.5 1900 79.5H1920Z" fill="url(#btn)" stroke="#a8a8a8"/><circle cx="1909.5" cy="67.5" r="8.5" fill="#666"/><path d="M1912 62.5l-6 4.5l6 4.5z" fill="#f0f0f0"/>
<text x="28.5" y="195.0" font-size="47.50" fill="#f2f2f2" textLength="374.0" lengthAdjust="spacingAndGlyphs" >Saturation Sweeps</text>
<text x="209.0" y="252.0" font-size="16.52" fill="#d8d8d8" text-anchor="middle" textLength="91.4" lengthAdjust="spacingAndGlyphs" >DeltaE 2000</text>
<rect x="50.5" y="258" width="358.5" height="475" fill="#252525"/>
<rect x="97.5" y="258" width="1.6" height="475" fill="#9a9a9a"/>
<rect x="145.3" y="258" width="1.6" height="475" fill="#9a9a9a"/>
<rect x="193.1" y="258" width="1.6" height="475" fill="#9a9a9a"/>
<rect x="240.9" y="258" width="1.6" height="475" fill="#9a9a9a"/>
<rect x="336.5" y="258" width="1.6" height="475" fill="#9a9a9a"/>
<rect x="384.3" y="258" width="1.6" height="475" fill="#9a9a9a"/>
<rect x="51.5" y="265.4" width="60.6" height="8.2" fill="#000"/>
<rect x="51.5" y="266.4" width="59.2" height="6.2" fill="#d01c1c"/>
<rect x="51.5" y="266.4" width="59.2" height="6.2" fill="url(#gloss)"/>
<rect x="51.5" y="266.4" width="59.2" height="6.2" fill="url(#hsh)"/>
<rect x="51.5" y="274.8" width="2.1" height="8.2" fill="#000"/>
<rect x="51.5" y="275.8" width="0.7" height="6.2" fill="#00c800"/>
<rect x="51.5" y="275.8" width="0.7" height="6.2" fill="url(#gloss)"/>
<rect x="51.5" y="275.8" width="0.7" height="6.2" fill="url(#hsh)"/>
<rect x="51.5" y="284.2" width="54.9" height="8.2" fill="#000"/>
<rect x="51.5" y="285.2" width="53.5" height="6.2" fill="#1414cc"/>
<rect x="51.5" y="285.2" width="53.5" height="6.2" fill="url(#gloss)"/>
<rect x="51.5" y="285.2" width="53.5" height="6.2" fill="url(#hsh)"/>
<rect x="51.5" y="293.6" width="16.4" height="8.2" fill="#000"/>
<rect x="51.5" y="294.6" width="15.0" height="6.2" fill="#18c8c8"/>
<rect x="51.5" y="294.6" width="15.0" height="6.2" fill="url(#gloss)"/>
<rect x="51.5" y="294.6" width="15.0" height="6.2" fill="url(#hsh)"/>
<rect x="51.5" y="303.0" width="42.2" height="8.2" fill="#000"/>
<rect x="51.5" y="304.0" width="40.8" height="6.2" fill="#cc18cc"/>
<rect x="51.5" y="304.0" width="40.8" height="6.2" fill="url(#gloss)"/>
<rect x="51.5" y="304.0" width="40.8" height="6.2" fill="url(#hsh)"/>
<rect x="51.5" y="312.4" width="34.3" height="8.2" fill="#000"/>
<rect x="51.5" y="313.4" width="32.9" height="6.2" fill="#ccc418"/>
<rect x="51.5" y="313.4" width="32.9" height="6.2" fill="url(#gloss)"/>
<rect x="51.5" y="313.4" width="32.9" height="6.2" fill="url(#hsh)"/>
<rect x="51.5" y="344.8" width="27.5" height="8.2" fill="#000"/>
<rect x="51.5" y="345.8" width="26.1" height="6.2" fill="#d45050"/>
<rect x="51.5" y="345.8" width="26.1" height="6.2" fill="url(#gloss)"/>
<rect x="51.5" y="345.8" width="26.1" height="6.2" fill="url(#hsh)"/>
<rect x="51.5" y="354.2" width="12.2" height="8.2" fill="#000"/>
<rect x="51.5" y="355.2" width="10.8" height="6.2" fill="#48c848"/>
<rect x="51.5" y="355.2" width="10.8" height="6.2" fill="url(#gloss)"/>
<rect x="51.5" y="355.2" width="10.8" height="6.2" fill="url(#hsh)"/>
<rect x="51.5" y="363.6" width="9.1" height="8.2" fill="#000"/>
<rect x="51.5" y="364.6" width="7.7" height="6.2" fill="#4c4ccc"/>
<rect x="51.5" y="364.6" width="7.7" height="6.2" fill="url(#gloss)"/>
<rect x="51.5" y="364.6" width="7.7" height="6.2" fill="url(#hsh)"/>
<rect x="51.5" y="373.0" width="25.9" height="8.2" fill="#000"/>
<rect x="51.5" y="374.0" width="24.5" height="6.2" fill="#58c4c4"/>
<rect x="51.5" y="374.0" width="24.5" height="6.2" fill="url(#gloss)"/>
<rect x="51.5" y="374.0" width="24.5" height="6.2" fill="url(#hsh)"/>
<rect x="51.5" y="382.4" width="21.5" height="8.2" fill="#000"/>
<rect x="51.5" y="383.4" width="20.1" height="6.2" fill="#d064d0"/>
<rect x="51.5" y="383.4" width="20.1" height="6.2" fill="url(#gloss)"/>
<rect x="51.5" y="383.4" width="20.1" height="6.2" fill="url(#hsh)"/>
<rect x="51.5" y="391.8" width="35.6" height="8.2" fill="#000"/>
<rect x="51.5" y="392.8" width="34.2" height="6.2" fill="#ccc860"/>
<rect x="51.5" y="392.8" width="34.2" height="6.2" fill="url(#gloss)"/>
<rect x="51.5" y="392.8" width="34.2" height="6.2" fill="url(#hsh)"/>
<rect x="51.5" y="424.3" width="25.9" height="8.2" fill="#000"/>
<rect x="51.5" y="425.3" width="24.5" height="6.2" fill="#d06868"/>
<rect x="51.5" y="425.3" width="24.5" height="6.2" fill="url(#gloss)"/>
<rect x="51.5" y="425.3" width="24.5" height="6.2" fill="url(#hsh)"/>
<rect x="51.5" y="433.7" width="18.2" height="8.2" fill="#000"/>
<rect x="51.5" y="434.7" width="16.8" height="6.2" fill="#64c864"/>
<rect x="51.5" y="434.7" width="16.8" height="6.2" fill="url(#gloss)"/>
<rect x="51.5" y="434.7" width="16.8" height="6.2" fill="url(#hsh)"/>
<rect x="51.5" y="443.1" width="22.6" height="8.2" fill="#000"/>
<rect x="51.5" y="444.1" width="21.2" height="6.2" fill="#6c6ccc"/>
<rect x="51.5" y="444.1" width="21.2" height="6.2" fill="url(#gloss)"/>
<rect x="51.5" y="444.1" width="21.2" height="6.2" fill="url(#hsh)"/>
<rect x="51.5" y="452.5" width="22.6" height="8.2" fill="#000"/>
<rect x="51.5" y="453.5" width="21.2" height="6.2" fill="#6cc4c4"/>
<rect x="51.5" y="453.5" width="21.2" height="6.2" fill="url(#gloss)"/>
<rect x="51.5" y="453.5" width="21.2" height="6.2" fill="url(#hsh)"/>
<rect x="51.5" y="461.9" width="27.2" height="8.2" fill="#000"/>
<rect x="51.5" y="462.9" width="25.8" height="6.2" fill="#cc7ccc"/>
<rect x="51.5" y="462.9" width="25.8" height="6.2" fill="url(#gloss)"/>
<rect x="51.5" y="462.9" width="25.8" height="6.2" fill="url(#hsh)"/>
<rect x="51.5" y="471.3" width="40.5" height="8.2" fill="#000"/>
<rect x="51.5" y="472.3" width="39.1" height="6.2" fill="#ccc880"/>
<rect x="51.5" y="472.3" width="39.1" height="6.2" fill="url(#gloss)"/>
<rect x="51.5" y="472.3" width="39.1" height="6.2" fill="url(#hsh)"/>
<rect x="51.5" y="503.8" width="38.6" height="8.2" fill="#000"/>
<rect x="51.5" y="504.8" width="37.2" height="6.2" fill="#d08080"/>
<rect x="51.5" y="504.8" width="37.2" height="6.2" fill="url(#gloss)"/>
<rect x="51.5" y="504.8" width="37.2" height="6.2" fill="url(#hsh)"/>
<rect x="51.5" y="513.1" width="22.9" height="8.2" fill="#000"/>
<rect x="51.5" y="514.1" width="21.5" height="6.2" fill="#7cc87c"/>
<rect x="51.5" y="514.1" width="21.5" height="6.2" fill="url(#gloss)"/>
<rect x="51.5" y="514.1" width="21.5" height="6.2" fill="url(#hsh)"/>
<rect x="51.5" y="522.5" width="22.6" height="8.2" fill="#000"/>
<rect x="51.5" y="523.5" width="21.2" height="6.2" fill="#8484cc"/>
<rect x="51.5" y="523.5" width="21.2" height="6.2" fill="url(#gloss)"/>
<rect x="51.5" y="523.5" width="21.2" height="6.2" fill="url(#hsh)"/>
<rect x="51.5" y="532.0" width="21.5" height="8.2" fill="#000"/>
<rect x="51.5" y="533.0" width="20.1" height="6.2" fill="#84c4c4"/>
<rect x="51.5" y="533.0" width="20.1" height="6.2" fill="url(#gloss)"/>
<rect x="51.5" y="533.0" width="20.1" height="6.2" fill="url(#hsh)"/>
<rect x="51.5" y="541.4" width="29.1" height="8.2" fill="#000"/>
<rect x="51.5" y="542.4" width="27.7" height="6.2" fill="#cc94cc"/>
<rect x="51.5" y="542.4" width="27.7" height="6.2" fill="url(#gloss)"/>
<rect x="51.5" y="542.4" width="27.7" height="6.2" fill="url(#hsh)"/>
<rect x="51.5" y="550.8" width="32.7" height="8.2" fill="#000"/>
<rect x="51.5" y="551.8" width="31.3" height="6.2" fill="#ccc894"/>
<rect x="51.5" y="551.8" width="31.3" height="6.2" fill="url(#gloss)"/>
<rect x="51.5" y="551.8" width="31.3" height="6.2" fill="url(#hsh)"/>
<rect x="51.5" y="583.2" width="30.9" height="8.2" fill="#000"/>
<rect x="51.5" y="584.2" width="29.5" height="6.2" fill="#d09898"/>
<rect x="51.5" y="584.2" width="29.5" height="6.2" fill="url(#gloss)"/>
<rect x="51.5" y="584.2" width="29.5" height="6.2" fill="url(#hsh)"/>
<rect x="51.5" y="592.6" width="14.9" height="8.2" fill="#000"/>
<rect x="51.5" y="593.6" width="13.5" height="6.2" fill="#94c894"/>
<rect x="51.5" y="593.6" width="13.5" height="6.2" fill="url(#gloss)"/>
<rect x="51.5" y="593.6" width="13.5" height="6.2" fill="url(#hsh)"/>
<rect x="51.5" y="602.0" width="35.3" height="8.2" fill="#000"/>
<rect x="51.5" y="603.0" width="33.9" height="6.2" fill="#9c9ccc"/>
<rect x="51.5" y="603.0" width="33.9" height="6.2" fill="url(#gloss)"/>
<rect x="51.5" y="603.0" width="33.9" height="6.2" fill="url(#hsh)"/>
<rect x="51.5" y="611.4" width="32.4" height="8.2" fill="#000"/>
<rect x="51.5" y="612.4" width="31.0" height="6.2" fill="#9cc4c4"/>
<rect x="51.5" y="612.4" width="31.0" height="6.2" fill="url(#gloss)"/>
<rect x="51.5" y="612.4" width="31.0" height="6.2" fill="url(#hsh)"/>
<rect x="51.5" y="620.8" width="41.4" height="8.2" fill="#000"/>
<rect x="51.5" y="621.8" width="40.0" height="6.2" fill="#ccaccc"/>
<rect x="51.5" y="621.8" width="40.0" height="6.2" fill="url(#gloss)"/>
<rect x="51.5" y="621.8" width="40.0" height="6.2" fill="url(#hsh)"/>
<rect x="51.5" y="630.2" width="44.6" height="8.2" fill="#000"/>
<rect x="51.5" y="631.2" width="43.2" height="6.2" fill="#ccc8ac"/>
<rect x="51.5" y="631.2" width="43.2" height="6.2" fill="url(#gloss)"/>
<rect x="51.5" y="631.2" width="43.2" height="6.2" fill="url(#hsh)"/>
<rect x="51.5" y="717.9" width="73" height="8.2" fill="#000"/><rect x="51.5" y="718.9" width="70.5" height="6.2" fill="url(#wbar)"/>
<rect x="73.6" y="258" width="1.6" height="475" fill="#008c00"/>
<rect x="121.4" y="258" width="1.7" height="475" fill="#ffff00"/>
<rect x="288.6" y="258" width="1.8" height="475" fill="#ff0000"/>
<path d="M50.5 258H409V733H50.5Z" fill="none" stroke="#a8a8a8" stroke-width="1.6"/>
<rect x="44" y="257.2" width="7" height="1.6" fill="#c8c8c8"/>
<rect x="44" y="336.4" width="7" height="1.6" fill="#c8c8c8"/>
<rect x="44" y="415.5" width="7" height="1.6" fill="#c8c8c8"/>
<rect x="44" y="494.7" width="7" height="1.6" fill="#c8c8c8"/>
<rect x="44" y="573.9" width="7" height="1.6" fill="#c8c8c8"/>
<rect x="44" y="653.0" width="7" height="1.6" fill="#c8c8c8"/>
<rect x="44" y="732.2" width="7" height="1.6" fill="#c8c8c8"/>
<rect x="49.7" y="733" width="1.6" height="6.5" fill="#c8c8c8"/>
<text x="50.5" y="758.5" font-size="16.52" fill="#d8d8d8" text-anchor="middle" textLength="9.5" lengthAdjust="spacingAndGlyphs" >0</text>
<rect x="97.5" y="733" width="1.6" height="6.5" fill="#c8c8c8"/>
<text x="98.3" y="758.5" font-size="16.52" fill="#d8d8d8" text-anchor="middle" textLength="9.5" lengthAdjust="spacingAndGlyphs" >2</text>
<rect x="145.3" y="733" width="1.6" height="6.5" fill="#c8c8c8"/>
<text x="146.1" y="758.5" font-size="16.52" fill="#d8d8d8" text-anchor="middle" textLength="9.5" lengthAdjust="spacingAndGlyphs" >4</text>
<rect x="193.1" y="733" width="1.6" height="6.5" fill="#c8c8c8"/>
<text x="193.9" y="758.5" font-size="16.52" fill="#d8d8d8" text-anchor="middle" textLength="9.5" lengthAdjust="spacingAndGlyphs" >6</text>
<rect x="240.9" y="733" width="1.6" height="6.5" fill="#c8c8c8"/>
<text x="241.7" y="758.5" font-size="16.52" fill="#d8d8d8" text-anchor="middle" textLength="9.5" lengthAdjust="spacingAndGlyphs" >8</text>
<rect x="288.7" y="733" width="1.6" height="6.5" fill="#c8c8c8"/>
<text x="289.5" y="758.5" font-size="16.52" fill="#d8d8d8" text-anchor="middle" textLength="18.9" lengthAdjust="spacingAndGlyphs" >10</text>
<rect x="336.5" y="733" width="1.6" height="6.5" fill="#c8c8c8"/>
<text x="337.3" y="758.5" font-size="16.52" fill="#d8d8d8" text-anchor="middle" textLength="18.9" lengthAdjust="spacingAndGlyphs" >12</text>
<rect x="384.3" y="733" width="1.6" height="6.5" fill="#c8c8c8"/>
<text x="385.1" y="758.5" font-size="16.52" fill="#d8d8d8" text-anchor="middle" textLength="18.9" lengthAdjust="spacingAndGlyphs" >14</text>
<text x="50.0" y="305.1" font-size="16.52" fill="#d8d8d8" text-anchor="end" textLength="41.7" lengthAdjust="spacingAndGlyphs" >100%</text>
<text x="50.0" y="384.2" font-size="16.52" fill="#d8d8d8" text-anchor="end" textLength="32.3" lengthAdjust="spacingAndGlyphs" >80%</text>
<text x="50.0" y="463.4" font-size="16.52" fill="#d8d8d8" text-anchor="end" textLength="32.3" lengthAdjust="spacingAndGlyphs" >60%</text>
<text x="50.0" y="542.6" font-size="16.52" fill="#d8d8d8" text-anchor="end" textLength="32.3" lengthAdjust="spacingAndGlyphs" >40%</text>
<text x="50.0" y="621.8" font-size="16.52" fill="#d8d8d8" text-anchor="end" textLength="32.3" lengthAdjust="spacingAndGlyphs" >20%</text>
<text x="50.0" y="700.0" font-size="16.52" fill="#d8d8d8" text-anchor="end" textLength="28.4" lengthAdjust="spacingAndGlyphs" >100</text>
<rect x="470" y="180.3" width="166.5" height="363.7" fill="#252525"/>
<rect x="470" y="180.3" width="166.5" height="1.6" fill="#9a9a9a"/>
<rect x="470" y="240.8" width="166.5" height="1.6" fill="#9a9a9a"/>
<rect x="470" y="301.2" width="166.5" height="1.6" fill="#9a9a9a"/>
<rect x="470" y="361.7" width="166.5" height="1.6" fill="#9a9a9a"/>
<rect x="470" y="422.1" width="166.5" height="1.6" fill="#9a9a9a"/>
<rect x="470" y="482.6" width="166.5" height="1.6" fill="#9a9a9a"/>
<path d="M470 180.3H636.5V544H470Z" fill="none" stroke="#a8a8a8" stroke-width="1.6"/>
<rect x="463" y="180.3" width="7" height="1.6" fill="#c8c8c8"/>
<text x="463.5" y="188.2" font-size="16.52" fill="#d8d8d8" text-anchor="end" textLength="18.9" lengthAdjust="spacingAndGlyphs" >15</text>
<rect x="463" y="240.8" width="7" height="1.6" fill="#c8c8c8"/>
<text x="463.5" y="248.6" font-size="16.52" fill="#d8d8d8" text-anchor="end" textLength="18.9" lengthAdjust="spacingAndGlyphs" >10</text>
<rect x="463" y="301.2" width="7" height="1.6" fill="#c8c8c8"/>
<text x="463.5" y="309.1" font-size="16.52" fill="#d8d8d8" text-anchor="end" textLength="9.5" lengthAdjust="spacingAndGlyphs" >5</text>
<rect x="463" y="361.7" width="7" height="1.6" fill="#c8c8c8"/>
<text x="463.5" y="369.5" font-size="16.52" fill="#d8d8d8" text-anchor="end" textLength="9.5" lengthAdjust="spacingAndGlyphs" >0</text>
<rect x="463" y="422.1" width="7" height="1.6" fill="#c8c8c8"/>
<text x="463.5" y="429.9" font-size="16.52" fill="#d8d8d8" text-anchor="end" textLength="15.2" lengthAdjust="spacingAndGlyphs" >-5</text>
<rect x="463" y="482.6" width="7" height="1.6" fill="#c8c8c8"/>
<text x="463.5" y="490.4" font-size="16.52" fill="#d8d8d8" text-anchor="end" textLength="24.6" lengthAdjust="spacingAndGlyphs" >-10</text>
<rect x="463" y="543.1" width="7" height="1.6" fill="#c8c8c8"/>
<text x="463.5" y="550.9" font-size="16.52" fill="#d8d8d8" text-anchor="end" textLength="24.6" lengthAdjust="spacingAndGlyphs" >-15</text>
<rect x="469.2" y="544" width="1.6" height="6" fill="#c8c8c8"/><rect x="635.7" y="544" width="1.6" height="6" fill="#c8c8c8"/>
<rect x="487.6" y="355.5" width="132" height="7.6" fill="url(#pinkbar)" stroke="#000" stroke-width="1.6"/>
<text x="538.0" y="173.5" font-size="16.52" fill="#d8d8d8" text-anchor="middle" textLength="52.3" lengthAdjust="spacingAndGlyphs" >Delta L</text>
<text x="553.0" y="562.3" font-size="16.52" fill="#d8d8d8" text-anchor="middle" textLength="32.3" lengthAdjust="spacingAndGlyphs" >20%</text>
<rect x="696.7" y="180.3" width="166.5" height="363.7" fill="#252525"/>
<rect x="696.7" y="180.3" width="166.5" height="1.6" fill="#9a9a9a"/>
<rect x="696.7" y="240.8" width="166.5" height="1.6" fill="#9a9a9a"/>
<rect x="696.7" y="301.2" width="166.5" height="1.6" fill="#9a9a9a"/>
<rect x="696.7" y="361.7" width="166.5" height="1.6" fill="#9a9a9a"/>
<rect x="696.7" y="422.1" width="166.5" height="1.6" fill="#9a9a9a"/>
<rect x="696.7" y="482.6" width="166.5" height="1.6" fill="#9a9a9a"/>
<path d="M696.7 180.3H863.2V544H696.7Z" fill="none" stroke="#a8a8a8" stroke-width="1.6"/>
<rect x="689.7" y="180.3" width="7" height="1.6" fill="#c8c8c8"/>
<text x="690.2" y="188.2" font-size="16.52" fill="#d8d8d8" text-anchor="end" textLength="18.9" lengthAdjust="spacingAndGlyphs" >15</text>
<rect x="689.7" y="240.8" width="7" height="1.6" fill="#c8c8c8"/>
<text x="690.2" y="248.6" font-size="16.52" fill="#d8d8d8" text-anchor="end" textLength="18.9" lengthAdjust="spacingAndGlyphs" >10</text>
<rect x="689.7" y="301.2" width="7" height="1.6" fill="#c8c8c8"/>
<text x="690.2" y="309.1" font-size="16.52" fill="#d8d8d8" text-anchor="end" textLength="9.5" lengthAdjust="spacingAndGlyphs" >5</text>
<rect x="689.7" y="361.7" width="7" height="1.6" fill="#c8c8c8"/>
<text x="690.2" y="369.5" font-size="16.52" fill="#d8d8d8" text-anchor="end" textLength="9.5" lengthAdjust="spacingAndGlyphs" >0</text>
<rect x="689.7" y="422.1" width="7" height="1.6" fill="#c8c8c8"/>
<text x="690.2" y="429.9" font-size="16.52" fill="#d8d8d8" text-anchor="end" textLength="15.2" lengthAdjust="spacingAndGlyphs" >-5</text>
<rect x="689.7" y="482.6" width="7" height="1.6" fill="#c8c8c8"/>
<text x="690.2" y="490.4" font-size="16.52" fill="#d8d8d8" text-anchor="end" textLength="24.6" lengthAdjust="spacingAndGlyphs" >-10</text>
<rect x="689.7" y="543.1" width="7" height="1.6" fill="#c8c8c8"/>
<text x="690.2" y="550.9" font-size="16.52" fill="#d8d8d8" text-anchor="end" textLength="24.6" lengthAdjust="spacingAndGlyphs" >-15</text>
<rect x="695.9" y="544" width="1.6" height="6" fill="#c8c8c8"/><rect x="862.4" y="544" width="1.6" height="6" fill="#c8c8c8"/>
<rect x="714.3" y="335.9" width="132" height="27.2" fill="url(#pinkbar)" stroke="#000" stroke-width="1.6"/>
<text x="764.7" y="173.5" font-size="16.52" fill="#d8d8d8" text-anchor="middle" textLength="54.4" lengthAdjust="spacingAndGlyphs" >Delta C</text>
<text x="779.7" y="562.3" font-size="16.52" fill="#d8d8d8" text-anchor="middle" textLength="32.3" lengthAdjust="spacingAndGlyphs" >20%</text>
<rect x="923.4" y="180.3" width="166.5" height="363.7" fill="#252525"/>
<rect x="923.4" y="180.3" width="166.5" height="1.6" fill="#9a9a9a"/>
<rect x="923.4" y="240.8" width="166.5" height="1.6" fill="#9a9a9a"/>
<rect x="923.4" y="301.2" width="166.5" height="1.6" fill="#9a9a9a"/>
<rect x="923.4" y="361.7" width="166.5" height="1.6" fill="#9a9a9a"/>
<rect x="923.4" y="422.1" width="166.5" height="1.6" fill="#9a9a9a"/>
<rect x="923.4" y="482.6" width="166.5" height="1.6" fill="#9a9a9a"/>
<path d="M923.4 180.3H1089.9V544H923.4Z" fill="none" stroke="#a8a8a8" stroke-width="1.6"/>
<rect x="916.4" y="180.3" width="7" height="1.6" fill="#c8c8c8"/>
<text x="916.9" y="188.2" font-size="16.52" fill="#d8d8d8" text-anchor="end" textLength="18.9" lengthAdjust="spacingAndGlyphs" >15</text>
<rect x="916.4" y="240.8" width="7" height="1.6" fill="#c8c8c8"/>
<text x="916.9" y="248.6" font-size="16.52" fill="#d8d8d8" text-anchor="end" textLength="18.9" lengthAdjust="spacingAndGlyphs" >10</text>
<rect x="916.4" y="301.2" width="7" height="1.6" fill="#c8c8c8"/>
<text x="916.9" y="309.1" font-size="16.52" fill="#d8d8d8" text-anchor="end" textLength="9.5" lengthAdjust="spacingAndGlyphs" >5</text>
<rect x="916.4" y="361.7" width="7" height="1.6" fill="#c8c8c8"/>
<text x="916.9" y="369.5" font-size="16.52" fill="#d8d8d8" text-anchor="end" textLength="9.5" lengthAdjust="spacingAndGlyphs" >0</text>
<rect x="916.4" y="422.1" width="7" height="1.6" fill="#c8c8c8"/>
<text x="916.9" y="429.9" font-size="16.52" fill="#d8d8d8" text-anchor="end" textLength="15.2" lengthAdjust="spacingAndGlyphs" >-5</text>
<rect x="916.4" y="482.6" width="7" height="1.6" fill="#c8c8c8"/>
<text x="916.9" y="490.4" font-size="16.52" fill="#d8d8d8" text-anchor="end" textLength="24.6" lengthAdjust="spacingAndGlyphs" >-10</text>
<rect x="916.4" y="543.1" width="7" height="1.6" fill="#c8c8c8"/>
<text x="916.9" y="550.9" font-size="16.52" fill="#d8d8d8" text-anchor="end" textLength="24.6" lengthAdjust="spacingAndGlyphs" >-15</text>
<rect x="922.6" y="544" width="1.6" height="6" fill="#c8c8c8"/><rect x="1089.1" y="544" width="1.6" height="6" fill="#c8c8c8"/>
<rect x="941" y="350.7" width="132" height="12.4" fill="url(#pinkbar)" stroke="#000" stroke-width="1.6"/>
<text x="991.4" y="173.5" font-size="16.52" fill="#d8d8d8" text-anchor="middle" textLength="56.1" lengthAdjust="spacingAndGlyphs" >Delta H</text>
<text x="1006.4" y="562.3" font-size="16.52" fill="#d8d8d8" text-anchor="middle" textLength="32.3" lengthAdjust="spacingAndGlyphs" >20%</text>
<rect x="432" y="581.5" width="681" height="187.5" fill="#000"/>
<rect x="456.0" y="590" width="114" height="152" fill="#d18b8b"/><rect x="456.0" y="666.5" width="114" height="76" fill="#cb8a8c"/>
<rect x="456.0" y="590" width="114" height="152.5" fill="none" stroke="#ffffff" stroke-width="1.4"/>
<text x="513.0" y="759.5" font-size="14.16" fill="#ffffff" text-anchor="middle" textLength="27.7" lengthAdjust="spacingAndGlyphs" >20%</text>
<rect x="588.9" y="590" width="114" height="152" fill="#d46264"/><rect x="588.9" y="666.5" width="114" height="76" fill="#cb6468"/>
<rect x="588.9" y="590" width="114" height="152.5" fill="none" stroke="#ffffff" stroke-width="1.4"/>
<text x="645.9" y="759.5" font-size="14.16" fill="#ffffff" text-anchor="middle" textLength="27.7" lengthAdjust="spacingAndGlyphs" >40%</text>
<rect x="721.8" y="590" width="114" height="152" fill="#d53f47"/><rect x="721.8" y="666.5" width="114" height="76" fill="#d0434a"/>
<rect x="721.8" y="590" width="114" height="152.5" fill="none" stroke="#ffffff" stroke-width="1.4"/>
<text x="778.8" y="759.5" font-size="14.16" fill="#ffffff" text-anchor="middle" textLength="27.7" lengthAdjust="spacingAndGlyphs" >60%</text>
<rect x="854.7" y="590" width="114" height="152" fill="#d61c29"/><rect x="854.7" y="666.5" width="114" height="76" fill="#d0202c"/>
<rect x="854.7" y="590" width="114" height="152.5" fill="none" stroke="#ffffff" stroke-width="1.4"/>
<text x="911.7" y="759.5" font-size="14.16" fill="#ffffff" text-anchor="middle" textLength="27.7" lengthAdjust="spacingAndGlyphs" >80%</text>
<rect x="987.6" y="590" width="114" height="152" fill="#d8182b"/><rect x="987.6" y="666.5" width="114" height="76" fill="#d1001e"/>
<rect x="987.6" y="590" width="114" height="152.5" fill="none" stroke="#ffffff" stroke-width="1.4"/>
<text x="1044.6" y="759.5" font-size="14.16" fill="#ffffff" text-anchor="middle" textLength="35.8" lengthAdjust="spacingAndGlyphs" >100%</text>
<g transform="translate(446.5,623.5) rotate(-90)">
<text x="0.0" y="0.0" font-size="14.16" fill="#ffffff" text-anchor="middle" textLength="41.1" lengthAdjust="spacingAndGlyphs" >Actual</text>
</g>
<g transform="translate(446.5,708.5) rotate(-90)">
<text x="0.0" y="0.0" font-size="14.16" fill="#ffffff" text-anchor="middle" textLength="41.9" lengthAdjust="spacingAndGlyphs" >Target</text>
</g>
<rect x="1120" y="143" width="798" height="642" fill="#a67a7a"/>
<rect x="1121.5" y="144.5" width="795" height="639" fill="#c48e8e"/>
<rect x="1128.5" y="151.5" width="781.5" height="625" fill="#333333"/>
<text x="1519.0" y="173.0" font-size="16.52" fill="#d8d8d8" text-anchor="middle" textLength="86.6" lengthAdjust="spacingAndGlyphs" >CIE 1931 xy</text>
<rect x="1161.5" y="178" width="745" height="566.5" fill="#252525"/>
<g clip-path="url(#hs)"><rect x="1160" y="179" width="140" height="2.6" fill="url(#s0)"/><rect x="1160" y="181" width="140" height="2.6" fill="url(#s1)"/><rect x="1183" y="183" width="98" height="2.6" fill="url(#s2)"/><rect x="1178" y="185" width="116" height="2.6" fill="url(#s3)"/><rect x="1174" y="187" width="130" height="2.6" fill="url(#s4)"/><rect x="1170" y="189" width="140" height="2.6" fill="url(#s5)"/><rect x="1166" y="191" width="149" height="2.6" fill="url(#s6)"/><rect x="1161" y="193" width="159" height="2.6" fill="url(#s7)"/><rect x="1157" y="195" width="168" height="2.6" fill="url(#s8)"/><rect x="1155" y="197" width="176" height="2.6" fill="url(#s9)"/><rect x="1154" y="199" width="182" height="2.6" fill="url(#s10)"/><rect x="1153" y="201" width="187" height="2.6" fill="url(#s11)"/><rect x="1152" y="203" width="193" height="2.6" fill="url(#s12)"/><rect x="1151" y="205" width="198" height="2.6" fill="url(#s13)"/><rect x="1149" y="207" width="204" height="2.6" fill="url(#s14)"/><rect x="1148" y="209" width="209" height="2.6" fill="url(#s15)"/><rect x="1147" y="211" width="214" height="2.6" fill="url(#s16)"/><rect x="1146" y="213" width="219" height="2.6" fill="url(#s17)"/><rect x="1145" y="215" width="224" height="2.6" fill="url(#s18)"/><rect x="1144" y="217" width="229" height="2.6" fill="url(#s19)"/><rect x="1143" y="219" width="234" height="2.6" fill="url(#s20)"/><rect x="1142" y="221" width="238" height="2.6" fill="url(#s21)"/><rect x="1141" y="223" width="243" height="2.6" fill="url(#s22)"/><rect x="1140" y="225" width="247" height="2.6" fill="url(#s23)"/><rect x="1139" y="227" width="252" height="2.6" fill="url(#s24)"/><rect x="1138" y="229" width="257" height="2.6" fill="url(#s25)"/><rect x="1137" y="231" width="261" height="2.6" fill="url(#s26)"/><rect x="1136" y="233" width="266" height="2.6" fill="url(#s27)"/><rect x="1135" y="235" width="270" height="2.6" fill="url(#s28)"/><rect x="1134" y="237" width="274" height="2.6" fill="url(#s29)"/><rect x="1133" y="239" width="278" height="2.6" fill="url(#s30)"/><rect x="1133" y="241" width="282" height="2.6" fill="url(#s31)"/><rect x="1133" y="243" width="285" height="2.6" fill="url(#s32)"/><rect x="1132" y="245" width="289" height="2.6" fill="url(#s33)"/><rect x="1132" y="247" width="292" height="2.6" fill="url(#s34)"/><rect x="1132" y="249" width="295" height="2.6" fill="url(#s35)"/><rect x="1131" y="251" width="299" height="2.6" fill="url(#s36)"/><rect x="1131" y="253" width="303" height="2.6" fill="url(#s37)"/><rect x="1131" y="255" width="306" height="2.6" fill="url(#s38)"/><rect x="1131" y="257" width="309" height="2.6" fill="url(#s39)"/><rect x="1130" y="259" width="313" height="2.6" fill="url(#s40)"/><rect x="1130" y="261" width="316" height="2.6" fill="url(#s41)"/><rect x="1130" y="263" width="319" height="2.6" fill="url(#s42)"/><rect x="1130" y="265" width="321" height="2.6" fill="url(#s43)"/><rect x="1129" y="267" width="325" height="2.6" fill="url(#s44)"/><rect x="1129" y="269" width="328" height="2.6" fill="url(#s45)"/><rect x="1129" y="271" width="331" height="2.6" fill="url(#s46)"/><rect x="1128" y="273" width="335" height="2.6" fill="url(#s47)"/><rect x="1128" y="275" width="338" height="2.6" fill="url(#s48)"/><rect x="1128" y="277" width="341" height="2.6" fill="url(#s49)"/><rect x="1128" y="279" width="344" height="2.6" fill="url(#s50)"/><rect x="1127" y="281" width="348" height="2.6" fill="url(#s51)"/><rect x="1127" y="283" width="351" height="2.6" fill="url(#s52)"/><rect x="1127" y="285" width="353" height="2.6" fill="url(#s53)"/><rect x="1126" y="287" width="357" height="2.6" fill="url(#s54)"/><rect x="1126" y="289" width="360" height="2.6" fill="url(#s55)"/><rect x="1126" y="291" width="363" height="2.6" fill="url(#s56)"/><rect x="1126" y="293" width="366" height="2.6" fill="url(#s57)"/><rect x="1125" y="295" width="369" height="2.6" fill="url(#s58)"/><rect x="1125" y="297" width="372" height="2.6" fill="url(#s59)"/><rect x="1125" y="299" width="375" height="2.6" fill="url(#s60)"/><rect x="1125" y="301" width="378" height="2.6" fill="url(#s61)"/><rect x="1125" y="303" width="380" height="2.6" fill="url(#s62)"/><rect x="1125" y="305" width="383" height="2.6" fill="url(#s63)"/><rect x="1125" y="307" width="386" height="2.6" fill="url(#s64)"/><rect x="1125" y="309" width="389" height="2.6" fill="url(#s65)"/><rect x="1125" y="311" width="391" height="2.6" fill="url(#s66)"/><rect x="1125" y="313" width="394" height="2.6" fill="url(#s67)"/><rect x="1125" y="315" width="397" height="2.6" fill="url(#s68)"/><rect x="1125" y="317" width="400" height="2.6" fill="url(#s69)"/><rect x="1125" y="319" width="402" height="2.6" fill="url(#s70)"/><rect x="1125" y="321" width="405" height="2.6" fill="url(#s71)"/><rect x="1125" y="323" width="408" height="2.6" fill="url(#s72)"/><rect x="1125" y="325" width="410" height="2.6" fill="url(#s73)"/><rect x="1126" y="327" width="412" height="2.6" fill="url(#s74)"/><rect x="1126" y="329" width="415" height="2.6" fill="url(#s75)"/><rect x="1126" y="331" width="418" height="2.6" fill="url(#s76)"/><rect x="1126" y="333" width="420" height="2.6" fill="url(#s77)"/><rect x="1126" y="335" width="423" height="2.6" fill="url(#s78)"/><rect x="1126" y="337" width="426" height="2.6" fill="url(#s79)"/><rect x="1126" y="339" width="428" height="2.6" fill="url(#s80)"/><rect x="1126" y="341" width="431" height="2.6" fill="url(#s81)"/><rect x="1126" y="343" width="434" height="2.6" fill="url(#s82)"/><rect x="1126" y="345" width="436" height="2.6" fill="url(#s83)"/><rect x="1127" y="347" width="438" height="2.6" fill="url(#s84)"/><rect x="1127" y="349" width="441" height="2.6" fill="url(#s85)"/><rect x="1127" y="351" width="443" height="2.6" fill="url(#s86)"/><rect x="1127" y="353" width="446" height="2.6" fill="url(#s87)"/><rect x="1127" y="355" width="449" height="2.6" fill="url(#s88)"/><rect x="1127" y="357" width="451" height="2.6" fill="url(#s89)"/><rect x="1127" y="359" width="454" height="2.6" fill="url(#s90)"/><rect x="1127" y="361" width="457" height="2.6" fill="url(#s91)"/><rect x="1127" y="363" width="459" height="2.6" fill="url(#s92)"/><rect x="1127" y="365" width="462" height="2.6" fill="url(#s93)"/><rect x="1128" y="367" width="464" height="2.6" fill="url(#s94)"/><rect x="1128" y="369" width="466" height="2.6" fill="url(#s95)"/><rect x="1128" y="371" width="469" height="2.6" fill="url(#s96)"/><rect x="1128" y="373" width="472" height="2.6" fill="url(#s97)"/><rect x="1128" y="375" width="474" height="2.6" fill="url(#s98)"/><rect x="1128" y="377" width="477" height="2.6" fill="url(#s99)"/><rect x="1128" y="379" width="480" height="2.6" fill="url(#s100)"/><rect x="1128" y="381" width="482" height="2.6" fill="url(#s101)"/><rect x="1128" y="383" width="485" height="2.6" fill="url(#s102)"/><rect x="1129" y="385" width="486" height="2.6" fill="url(#s103)"/><rect x="1129" y="387" width="489" height="2.6" fill="url(#s104)"/><rect x="1129" y="389" width="492" height="2.6" fill="url(#s105)"/><rect x="1130" y="391" width="493" height="2.6" fill="url(#s106)"/><rect x="1130" y="393" width="496" height="2.6" fill="url(#s107)"/><rect x="1130" y="395" width="499" height="2.6" fill="url(#s108)"/><rect x="1131" y="397" width="500" height="2.6" fill="url(#s109)"/><rect x="1131" y="399" width="503" height="2.6" fill="url(#s110)"/><rect x="1131" y="401" width="506" height="2.6" fill="url(#s111)"/><rect x="1132" y="403" width="507" height="2.6" fill="url(#s112)"/><rect x="1132" y="405" width="510" height="2.6" fill="url(#s113)"/><rect x="1132" y="407" width="512" height="2.6" fill="url(#s114)"/><rect x="1133" y="409" width="514" height="2.6" fill="url(#s115)"/><rect x="1133" y="411" width="517" height="2.6" fill="url(#s116)"/><rect x="1133" y="413" width="519" height="2.6" fill="url(#s117)"/><rect x="1134" y="415" width="521" height="2.6" fill="url(#s118)"/><rect x="1134" y="417" width="524" height="2.6" fill="url(#s119)"/><rect x="1134" y="419" width="526" height="2.6" fill="url(#s120)"/><rect x="1134" y="421" width="529" height="2.6" fill="url(#s121)"/><rect x="1135" y="423" width="531" height="2.6" fill="url(#s122)"/><rect x="1135" y="425" width="533" height="2.6" fill="url(#s123)"/><rect x="1135" y="427" width="536" height="2.6" fill="url(#s124)"/><rect x="1136" y="429" width="537" height="2.6" fill="url(#s125)"/><rect x="1136" y="431" width="540" height="2.6" fill="url(#s126)"/><rect x="1136" y="433" width="543" height="2.6" fill="url(#s127)"/><rect x="1137" y="435" width="544" height="2.6" fill="url(#s128)"/><rect x="1137" y="437" width="547" height="2.6" fill="url(#s129)"/><rect x="1137" y="439" width="550" height="2.6" fill="url(#s130)"/><rect x="1138" y="441" width="551" height="2.6" fill="url(#s131)"/><rect x="1138" y="443" width="554" height="2.6" fill="url(#s132)"/><rect x="1138" y="445" width="557" height="2.6" fill="url(#s133)"/><rect x="1139" y="447" width="558" height="2.6" fill="url(#s134)"/><rect x="1139" y="449" width="561" height="2.6" fill="url(#s135)"/><rect x="1139" y="451" width="564" height="2.6" fill="url(#s136)"/><rect x="1140" y="453" width="565" height="2.6" fill="url(#s137)"/><rect x="1140" y="455" width="568" height="2.6" fill="url(#s138)"/><rect x="1140" y="457" width="571" height="2.6" fill="url(#s139)"/><rect x="1141" y="459" width="572" height="2.6" fill="url(#s140)"/><rect x="1141" y="461" width="575" height="2.6" fill="url(#s141)"/><rect x="1141" y="463" width="577" height="2.6" fill="url(#s142)"/><rect x="1142" y="465" width="579" height="2.6" fill="url(#s143)"/><rect x="1142" y="467" width="582" height="2.6" fill="url(#s144)"/><rect x="1142" y="469" width="584" height="2.6" fill="url(#s145)"/><rect x="1143" y="471" width="586" height="2.6" fill="url(#s146)"/><rect x="1143" y="473" width="589" height="2.6" fill="url(#s147)"/><rect x="1144" y="475" width="590" height="2.6" fill="url(#s148)"/><rect x="1144" y="477" width="593" height="2.6" fill="url(#s149)"/><rect x="1145" y="479" width="594" height="2.6" fill="url(#s150)"/><rect x="1145" y="481" width="597" height="2.6" fill="url(#s151)"/><rect x="1146" y="483" width="599" height="2.6" fill="url(#s152)"/><rect x="1146" y="485" width="601" height="2.6" fill="url(#s153)"/><rect x="1147" y="487" width="603" height="2.6" fill="url(#s154)"/><rect x="1147" y="489" width="606" height="2.6" fill="url(#s155)"/><rect x="1148" y="491" width="607" height="2.6" fill="url(#s156)"/><rect x="1148" y="493" width="610" height="2.6" fill="url(#s157)"/><rect x="1149" y="495" width="612" height="2.6" fill="url(#s158)"/><rect x="1149" y="497" width="614" height="2.6" fill="url(#s159)"/><rect x="1150" y="499" width="616" height="2.6" fill="url(#s160)"/><rect x="1150" y="501" width="618" height="2.6" fill="url(#s161)"/><rect x="1151" y="503" width="620" height="2.6" fill="url(#s162)"/><rect x="1151" y="505" width="623" height="2.6" fill="url(#s163)"/><rect x="1152" y="507" width="624" height="2.6" fill="url(#s164)"/><rect x="1152" y="509" width="627" height="2.6" fill="url(#s165)"/><rect x="1153" y="511" width="629" height="2.6" fill="url(#s166)"/><rect x="1153" y="513" width="631" height="2.6" fill="url(#s167)"/><rect x="1154" y="515" width="633" height="2.6" fill="url(#s168)"/><rect x="1154" y="517" width="636" height="2.6" fill="url(#s169)"/><rect x="1155" y="519" width="637" height="2.6" fill="url(#s170)"/><rect x="1155" y="521" width="640" height="2.6" fill="url(#s171)"/><rect x="1156" y="523" width="642" height="2.6" fill="url(#s172)"/><rect x="1156" y="525" width="644" height="2.6" fill="url(#s173)"/><rect x="1157" y="527" width="646" height="2.6" fill="url(#s174)"/><rect x="1157" y="529" width="649" height="2.6" fill="url(#s175)"/><rect x="1158" y="531" width="650" height="2.6" fill="url(#s176)"/><rect x="1158" y="533" width="653" height="2.6" fill="url(#s177)"/><rect x="1158" y="535" width="655" height="2.6" fill="url(#s178)"/><rect x="1159" y="537" width="657" height="2.6" fill="url(#s179)"/><rect x="1159" y="539" width="660" height="2.6" fill="url(#s180)"/><rect x="1160" y="541" width="661" height="2.6" fill="url(#s181)"/><rect x="1160" y="543" width="664" height="2.6" fill="url(#s182)"/><rect x="1161" y="545" width="666" height="2.6" fill="url(#s183)"/><rect x="1161" y="547" width="668" height="2.6" fill="url(#s184)"/><rect x="1162" y="549" width="670" height="2.6" fill="url(#s185)"/><rect x="1163" y="551" width="672" height="2.6" fill="url(#s186)"/><rect x="1163" y="553" width="674" height="2.6" fill="url(#s187)"/><rect x="1164" y="555" width="676" height="2.6" fill="url(#s188)"/><rect x="1165" y="557" width="677" height="2.6" fill="url(#s189)"/><rect x="1165" y="559" width="680" height="2.6" fill="url(#s190)"/><rect x="1166" y="561" width="682" height="2.6" fill="url(#s191)"/><rect x="1167" y="563" width="683" height="2.6" fill="url(#s192)"/><rect x="1167" y="565" width="683" height="2.6" fill="url(#s193)"/><rect x="1168" y="567" width="682" height="2.6" fill="url(#s194)"/><rect x="1169" y="569" width="675" height="2.6" fill="url(#s195)"/><rect x="1169" y="571" width="669" height="2.6" fill="url(#s196)"/><rect x="1170" y="573" width="663" height="2.6" fill="url(#s197)"/><rect x="1171" y="575" width="656" height="2.6" fill="url(#s198)"/><rect x="1171" y="577" width="650" height="2.6" fill="url(#s199)"/><rect x="1172" y="579" width="644" height="2.6" fill="url(#s200)"/><rect x="1173" y="581" width="637" height="2.6" fill="url(#s201)"/><rect x="1173" y="583" width="631" height="2.6" fill="url(#s202)"/><rect x="1174" y="585" width="625" height="2.6" fill="url(#s203)"/><rect x="1174" y="587" width="619" height="2.6" fill="url(#s204)"/><rect x="1175" y="589" width="612" height="2.6" fill="url(#s205)"/><rect x="1176" y="591" width="606" height="2.6" fill="url(#s206)"/><rect x="1176" y="593" width="600" height="2.6" fill="url(#s207)"/><rect x="1177" y="595" width="593" height="2.6" fill="url(#s208)"/><rect x="1178" y="597" width="587" height="2.6" fill="url(#s209)"/><rect x="1178" y="599" width="581" height="2.6" fill="url(#s210)"/><rect x="1179" y="601" width="574" height="2.6" fill="url(#s211)"/><rect x="1180" y="603" width="568" height="2.6" fill="url(#s212)"/><rect x="1180" y="605" width="562" height="2.6" fill="url(#s213)"/><rect x="1181" y="607" width="555" height="2.6" fill="url(#s214)"/><rect x="1182" y="609" width="549" height="2.6" fill="url(#s215)"/><rect x="1182" y="611" width="543" height="2.6" fill="url(#s216)"/><rect x="1183" y="613" width="536" height="2.6" fill="url(#s217)"/><rect x="1184" y="615" width="530" height="2.6" fill="url(#s218)"/><rect x="1185" y="617" width="523" height="2.6" fill="url(#s219)"/><rect x="1186" y="619" width="516" height="2.6" fill="url(#s220)"/><rect x="1187" y="621" width="510" height="2.6" fill="url(#s221)"/><rect x="1188" y="623" width="503" height="2.6" fill="url(#s222)"/><rect x="1189" y="625" width="496" height="2.6" fill="url(#s223)"/><rect x="1189" y="627" width="491" height="2.6" fill="url(#s224)"/><rect x="1190" y="629" width="484" height="2.6" fill="url(#s225)"/><rect x="1191" y="631" width="477" height="2.6" fill="url(#s226)"/><rect x="1192" y="633" width="471" height="2.6" fill="url(#s227)"/><rect x="1193" y="635" width="464" height="2.6" fill="url(#s228)"/><rect x="1194" y="637" width="457" height="2.6" fill="url(#s229)"/><rect x="1195" y="639" width="451" height="2.6" fill="url(#s230)"/><rect x="1196" y="641" width="444" height="2.6" fill="url(#s231)"/><rect x="1196" y="643" width="438" height="2.6" fill="url(#s232)"/><rect x="1197" y="645" width="432" height="2.6" fill="url(#s233)"/><rect x="1198" y="647" width="425" height="2.6" fill="url(#s234)"/><rect x="1199" y="649" width="418" height="2.6" fill="url(#s235)"/><rect x="1200" y="651" width="412" height="2.6" fill="url(#s236)"/><rect x="1201" y="653" width="405" height="2.6" fill="url(#s237)"/><rect x="1202" y="655" width="399" height="2.6" fill="url(#s238)"/><rect x="1203" y="657" width="392" height="2.6" fill="url(#s239)"/><rect x="1204" y="659" width="385" height="2.6" fill="url(#s240)"/><rect x="1205" y="661" width="379" height="2.6" fill="url(#s241)"/><rect x="1206" y="663" width="372" height="2.6" fill="url(#s242)"/><rect x="1207" y="665" width="365" height="2.6" fill="url(#s243)"/><rect x="1208" y="667" width="359" height="2.6" fill="url(#s244)"/><rect x="1209" y="669" width="352" height="2.6" fill="url(#s245)"/><rect x="1210" y="671" width="345" height="2.6" fill="url(#s246)"/><rect x="1211" y="673" width="339" height="2.6" fill="url(#s247)"/><rect x="1212" y="675" width="332" height="2.6" fill="url(#s248)"/><rect x="1213" y="677" width="325" height="2.6" fill="url(#s249)"/><rect x="1214" y="679" width="319" height="2.6" fill="url(#s250)"/><rect x="1215" y="681" width="312" height="2.6" fill="url(#s251)"/><rect x="1216" y="683" width="305" height="2.6" fill="url(#s252)"/><rect x="1217" y="685" width="299" height="2.6" fill="url(#s253)"/><rect x="1218" y="687" width="292" height="2.6" fill="url(#s254)"/><rect x="1220" y="689" width="284" height="2.6" fill="url(#s255)"/><rect x="1221" y="691" width="278" height="2.6" fill="url(#s256)"/><rect x="1222" y="693" width="271" height="2.6" fill="url(#s257)"/><rect x="1224" y="695" width="263" height="2.6" fill="url(#s258)"/><rect x="1225" y="697" width="257" height="2.6" fill="url(#s259)"/><rect x="1226" y="699" width="250" height="2.6" fill="url(#s260)"/><rect x="1228" y="701" width="242" height="2.6" fill="url(#s261)"/><rect x="1229" y="703" width="236" height="2.6" fill="url(#s262)"/><rect x="1230" y="705" width="229" height="2.6" fill="url(#s263)"/><rect x="1232" y="707" width="221" height="2.6" fill="url(#s264)"/><rect x="1233" y="709" width="215" height="2.6" fill="url(#s265)"/><rect x="1235" y="711" width="207" height="2.6" fill="url(#s266)"/><rect x="1237" y="713" width="199" height="2.6" fill="url(#s267)"/><rect x="1238" y="715" width="193" height="2.6" fill="url(#s268)"/><rect x="1240" y="717" width="185" height="2.6" fill="url(#s269)"/><rect x="1242" y="719" width="177" height="2.6" fill="url(#s270)"/><rect x="1244" y="721" width="170" height="2.6" fill="url(#s271)"/><rect x="1246" y="723" width="162" height="2.6" fill="url(#s272)"/><rect x="1249" y="725" width="153" height="2.6" fill="url(#s273)"/><rect x="1251" y="727" width="146" height="2.6" fill="url(#s274)"/><rect x="1254" y="729" width="137" height="2.6" fill="url(#s275)"/><rect x="1257" y="731" width="128" height="2.6" fill="url(#s276)"/><rect x="1260" y="733" width="120" height="2.6" fill="url(#s277)"/><rect x="1263" y="735" width="111" height="2.6" fill="url(#s278)"/><rect x="1266" y="737" width="102" height="2.6" fill="url(#s279)"/><rect x="1269" y="739" width="94" height="2.6" fill="url(#s280)"/><rect x="1272" y="741" width="85" height="2.6" fill="url(#s281)"/>
<path fill-rule="evenodd" fill="#000" fill-opacity=".39" d="M1100 100H1920V800H1100ZM1764.0 529.3L1396.3 279.9L1294.4 704.6Z"/></g>
<path d="M1161.5 178H1906.5V744.5H1161.5Z" fill="none" stroke="#a8a8a8" stroke-width="1.6"/>
<rect x="1160.7" y="744.5" width="1.6" height="6.5" fill="#c8c8c8"/>
<text x="1161.5" y="768.8" font-size="16.52" fill="#d8d8d8" text-anchor="middle" textLength="9.5" lengthAdjust="spacingAndGlyphs" >0</text>
<rect x="1154.5" y="744.2" width="7" height="1.6" fill="#c8c8c8"/>
<text x="1155.0" y="752.0" font-size="16.52" fill="#d8d8d8" text-anchor="end" textLength="9.5" lengthAdjust="spacingAndGlyphs" >0</text>
<rect x="1249.3" y="744.5" width="1.6" height="6.5" fill="#c8c8c8"/>
<text x="1250.1" y="768.8" font-size="16.52" fill="#d8d8d8" text-anchor="middle" textLength="23.6" lengthAdjust="spacingAndGlyphs" >0,1</text>
<rect x="1154.5" y="676.8" width="7" height="1.6" fill="#c8c8c8"/>
<text x="1155.0" y="684.6" font-size="16.52" fill="#d8d8d8" text-anchor="end" textLength="23.6" lengthAdjust="spacingAndGlyphs" >0,1</text>
<rect x="1337.9" y="744.5" width="1.6" height="6.5" fill="#c8c8c8"/>
<text x="1338.7" y="768.8" font-size="16.52" fill="#d8d8d8" text-anchor="middle" textLength="23.6" lengthAdjust="spacingAndGlyphs" >0,2</text>
<rect x="1154.5" y="609.4" width="7" height="1.6" fill="#c8c8c8"/>
<text x="1155.0" y="617.2" font-size="16.52" fill="#d8d8d8" text-anchor="end" textLength="23.6" lengthAdjust="spacingAndGlyphs" >0,2</text>
<rect x="1426.5" y="744.5" width="1.6" height="6.5" fill="#c8c8c8"/>
<text x="1427.3" y="768.8" font-size="16.52" fill="#d8d8d8" text-anchor="middle" textLength="23.6" lengthAdjust="spacingAndGlyphs" >0,3</text>
<rect x="1154.5" y="542.0" width="7" height="1.6" fill="#c8c8c8"/>
<text x="1155.0" y="549.8" font-size="16.52" fill="#d8d8d8" text-anchor="end" textLength="23.6" lengthAdjust="spacingAndGlyphs" >0,3</text>
<rect x="1515.1" y="744.5" width="1.6" height="6.5" fill="#c8c8c8"/>
<text x="1515.9" y="768.8" font-size="16.52" fill="#d8d8d8" text-anchor="middle" textLength="23.6" lengthAdjust="spacingAndGlyphs" >0,4</text>
<rect x="1154.5" y="474.6" width="7" height="1.6" fill="#c8c8c8"/>
<text x="1155.0" y="482.4" font-size="16.52" fill="#d8d8d8" text-anchor="end" textLength="23.6" lengthAdjust="spacingAndGlyphs" >0,4</text>
<rect x="1603.7" y="744.5" width="1.6" height="6.5" fill="#c8c8c8"/>
<text x="1604.5" y="768.8" font-size="16.52" fill="#d8d8d8" text-anchor="middle" textLength="23.6" lengthAdjust="spacingAndGlyphs" >0,5</text>
<rect x="1154.5" y="407.2" width="7" height="1.6" fill="#c8c8c8"/>
<text x="1155.0" y="415.0" font-size="16.52" fill="#d8d8d8" text-anchor="end" textLength="23.6" lengthAdjust="spacingAndGlyphs" >0,5</text>
<rect x="1692.3" y="744.5" width="1.6" height="6.5" fill="#c8c8c8"/>
<text x="1693.1" y="768.8" font-size="16.52" fill="#d8d8d8" text-anchor="middle" textLength="23.6" lengthAdjust="spacingAndGlyphs" >0,6</text>
<rect x="1154.5" y="339.8" width="7" height="1.6" fill="#c8c8c8"/>
<text x="1155.0" y="347.6" font-size="16.52" fill="#d8d8d8" text-anchor="end" textLength="23.6" lengthAdjust="spacingAndGlyphs" >0,6</text>
<rect x="1780.9" y="744.5" width="1.6" height="6.5" fill="#c8c8c8"/>
<text x="1781.7" y="768.8" font-size="16.52" fill="#d8d8d8" text-anchor="middle" textLength="23.6" lengthAdjust="spacingAndGlyphs" >0,7</text>
<rect x="1154.5" y="272.4" width="7" height="1.6" fill="#c8c8c8"/>
<text x="1155.0" y="280.2" font-size="16.52" fill="#d8d8d8" text-anchor="end" textLength="23.6" lengthAdjust="spacingAndGlyphs" >0,7</text>
<rect x="1869.5" y="744.5" width="1.6" height="6.5" fill="#c8c8c8"/>
<text x="1870.3" y="768.8" font-size="16.52" fill="#d8d8d8" text-anchor="middle" textLength="23.6" lengthAdjust="spacingAndGlyphs" >0,8</text>
<rect x="1154.5" y="205.0" width="7" height="1.6" fill="#c8c8c8"/>
<text x="1155.0" y="212.8" font-size="16.52" fill="#d8d8d8" text-anchor="end" textLength="23.6" lengthAdjust="spacingAndGlyphs" >0,8</text>
<rect x="1389.5" y="270.8" width="14.5" height="14.5" fill="none" stroke="#fff" stroke-width="2"/>
<rect x="1397.5" y="324.1" width="14.5" height="14.5" fill="none" stroke="#fff" stroke-width="2"/>
<rect x="1406.5" y="369.8" width="14.5" height="14.5" fill="none" stroke="#fff" stroke-width="2"/>
<rect x="1414.5" y="416.4" width="14.5" height="14.5" fill="none" stroke="#fff" stroke-width="2"/>
<rect x="1422.5" y="465.2" width="14.5" height="14.5" fill="none" stroke="#fff" stroke-width="2"/>
<rect x="1543.2" y="374.4" width="14.5" height="14.5" fill="none" stroke="#fff" stroke-width="2"/>
<rect x="1519.5" y="404.1" width="14.5" height="14.5" fill="none" stroke="#fff" stroke-width="2"/>
<rect x="1495.8" y="431.9" width="14.5" height="14.5" fill="none" stroke="#fff" stroke-width="2"/>
<rect x="1475.5" y="458.9" width="14.5" height="14.5" fill="none" stroke="#fff" stroke-width="2"/>
<rect x="1453.5" y="485.2" width="14.5" height="14.5" fill="none" stroke="#fff" stroke-width="2"/>
<rect x="1331.7" y="512.2" width="14.5" height="14.5" fill="none" stroke="#fff" stroke-width="2"/>
<rect x="1352.0" y="513.4" width="14.5" height="14.5" fill="none" stroke="#fff" stroke-width="2"/>
<rect x="1370.7" y="513.4" width="14.5" height="14.5" fill="none" stroke="#fff" stroke-width="2"/>
<rect x="1391.2" y="513.4" width="14.5" height="14.5" fill="none" stroke="#fff" stroke-width="2"/>
<rect x="1411.7" y="513.4" width="14.5" height="14.5" fill="none" stroke="#fff" stroke-width="2"/>
<rect x="1495.8" y="515.2" width="14.5" height="14.5" fill="none" stroke="#fff" stroke-width="2"/>
<rect x="1557.0" y="516.5" width="14.5" height="14.5" fill="none" stroke="#fff" stroke-width="2"/>
<rect x="1624.5" y="518.2" width="14.5" height="14.5" fill="none" stroke="#fff" stroke-width="2"/>
<rect x="1683.8" y="519.5" width="14.5" height="14.5" fill="none" stroke="#fff" stroke-width="2"/>
<rect x="1757.5" y="519.5" width="14.5" height="14.5" fill="none" stroke="#fff" stroke-width="2"/>
<rect x="1435.0" y="538.2" width="14.5" height="14.5" fill="none" stroke="#fff" stroke-width="2"/>
<rect x="1439.5" y="562.0" width="14.5" height="14.5" fill="none" stroke="#fff" stroke-width="2"/>
<rect x="1444.0" y="585.5" width="14.5" height="14.5" fill="none" stroke="#fff" stroke-width="2"/>
<rect x="1447.8" y="609.0" width="14.5" height="14.5" fill="none" stroke="#fff" stroke-width="2"/>
<rect x="1452.2" y="634.0" width="14.5" height="14.5" fill="none" stroke="#fff" stroke-width="2"/>
<rect x="1402.0" y="549.5" width="14.5" height="14.5" fill="none" stroke="#fff" stroke-width="2"/>
<rect x="1374.0" y="587.2" width="14.5" height="14.5" fill="none" stroke="#fff" stroke-width="2"/>
<rect x="1346.0" y="621.5" width="14.5" height="14.5" fill="none" stroke="#fff" stroke-width="2"/>
<rect x="1317.5" y="657.5" width="14.5" height="14.5" fill="none" stroke="#fff" stroke-width="2"/>
<rect x="1286.2" y="695.2" width="14.5" height="14.5" fill="none" stroke="#fff" stroke-width="2"/>
<rect x="1431.7" y="515" width="14.5" height="14.5" fill="none" stroke="#000" stroke-width="2.2"/>
<circle cx="1398.3" cy="280.0" r="5.1" fill="#00a000" stroke="#141414" stroke-width="1.6"/>
<circle cx="1404.7" cy="325.5" r="5.1" fill="#5cb85c" stroke="#141414" stroke-width="1.6"/>
<circle cx="1412.2" cy="368.8" r="5.1" fill="#70b870" stroke="#141414" stroke-width="1.6"/>
<circle cx="1423.0" cy="417.5" r="5.1" fill="#84b884" stroke="#141414" stroke-width="1.6"/>
<circle cx="1433.0" cy="470.3" r="5.1" fill="#9cb49c" stroke="#141414" stroke-width="1.6"/>
<circle cx="1553.3" cy="387.5" r="5.1" fill="#b0b020" stroke="#141414" stroke-width="1.6"/>
<circle cx="1532.7" cy="410.8" r="5.1" fill="#b8b858" stroke="#141414" stroke-width="1.6"/>
<circle cx="1511.0" cy="436.2" r="5.1" fill="#b8b870" stroke="#141414" stroke-width="1.6"/>
<circle cx="1487.5" cy="466.2" r="5.1" fill="#b8b888" stroke="#141414" stroke-width="1.6"/>
<circle cx="1465.5" cy="491.3" r="5.1" fill="#b8b4a0" stroke="#141414" stroke-width="1.6"/>
<circle cx="1338.8" cy="517.8" r="5.1" fill="#20b0b0" stroke="#141414" stroke-width="1.6"/>
<circle cx="1357.7" cy="517.5" r="5.1" fill="#68aeae" stroke="#141414" stroke-width="1.6"/>
<circle cx="1379.5" cy="517.5" r="5.1" fill="#7cacac" stroke="#141414" stroke-width="1.6"/>
<circle cx="1399.5" cy="518.8" r="5.1" fill="#90acac" stroke="#141414" stroke-width="1.6"/>
<circle cx="1421.7" cy="518.8" r="5.1" fill="#a0acac" stroke="#141414" stroke-width="1.6"/>
<circle cx="1509.3" cy="520.8" r="5.1" fill="#c08c8c" stroke="#141414" stroke-width="1.6"/>
<circle cx="1577.8" cy="522.2" r="5.1" fill="#c07074" stroke="#141414" stroke-width="1.6"/>
<circle cx="1642.5" cy="525.5" r="5.1" fill="#c05858" stroke="#141414" stroke-width="1.6"/>
<circle cx="1696.8" cy="525.5" r="5.1" fill="#c04040" stroke="#141414" stroke-width="1.6"/>
<circle cx="1752.2" cy="527.2" r="5.1" fill="#c01818" stroke="#141414" stroke-width="1.6"/>
<circle cx="1448.0" cy="544.2" r="5.1" fill="#b8a0b8" stroke="#141414" stroke-width="1.6"/>
<circle cx="1453.0" cy="567.7" r="5.1" fill="#b890b8" stroke="#141414" stroke-width="1.6"/>
<circle cx="1457.7" cy="592.7" r="5.1" fill="#b87cb8" stroke="#141414" stroke-width="1.6"/>
<circle cx="1462.5" cy="616.2" r="5.1" fill="#b864b8" stroke="#141414" stroke-width="1.6"/>
<circle cx="1467.5" cy="635.3" r="5.1" fill="#b020b0" stroke="#141414" stroke-width="1.6"/>
<circle cx="1413.7" cy="556.7" r="5.1" fill="#a0a0bc" stroke="#141414" stroke-width="1.6"/>
<circle cx="1383.0" cy="594.5" r="5.1" fill="#8888bc" stroke="#141414" stroke-width="1.6"/>
<circle cx="1352.7" cy="630.3" r="5.1" fill="#7070bc" stroke="#141414" stroke-width="1.6"/>
<circle cx="1325.0" cy="664.7" r="5.1" fill="#5858b8" stroke="#141414" stroke-width="1.6"/>
<circle cx="1298.3" cy="695.8" r="5.1" fill="#1010a8" stroke="#141414" stroke-width="1.6"/>
<circle cx="1443.8" cy="520.8" r="5.1" fill="#fff" stroke="#141414" stroke-width="1.6"/>
<rect x="1644.5" y="183" width="260.5" height="218.5" fill="#1c1c1c"/>
<rect x="1648" y="186.5" width="252" height="212.5" fill="url(#in1)"/><rect x="1648" y="186.5" width="252" height="212.5" fill="url(#in2)" mask="url(#inmask)"/>
<rect x="1648" y="186.5" width="252" height="212.5" fill="none" stroke="#808080" stroke-width="2"/>
<rect x="1765.1" y="283.7" width="14.5" height="14.5" fill="none" stroke="#fff" stroke-width="2"/>
<circle cx="1811" cy="281.8" r="5.1" fill="#c08c8c" stroke="#141414" stroke-width="1.6"/>
<text x="17.5" y="852.0" font-size="33.81" fill="#f4f4f4" textLength="252.5" lengthAdjust="spacingAndGlyphs" >Current Reading</text>
<text x="17.5" y="901.5" font-size="28.32" fill="#f4f4f4" textLength="102.5" lengthAdjust="spacingAndGlyphs" >x: 0,393</text>
<text x="17.5" y="948.7" font-size="28.32" fill="#f4f4f4" textLength="119.4" lengthAdjust="spacingAndGlyphs" >y: 0,3293</text>
<text x="17.5" y="995.9" font-size="28.32" fill="#f4f4f4" textLength="111.9" lengthAdjust="spacingAndGlyphs" >fL: 52,85</text>
<text x="17.5" y="1043.1" font-size="28.32" fill="#f4f4f4" textLength="183.9" lengthAdjust="spacingAndGlyphs" >cd/m²: 181,07</text>
<text x="537.0" y="824.0" font-size="16.52" fill="#d8d8d8" text-anchor="middle" textLength="95.6" lengthAdjust="spacingAndGlyphs" >RGB Balance</text>
<rect x="411.3" y="828.6" width="286.9" height="208.9" fill="#252525"/>
<rect x="411.3" y="850.0" width="286.9" height="1.6" fill="#9a9a9a"/>
<rect x="403.3" y="850.0" width="8" height="1.6" fill="#c8c8c8"/>
<text x="403.3" y="856.8" font-size="16.52" fill="#d8d8d8" text-anchor="end" textLength="28.4" lengthAdjust="spacingAndGlyphs" >104</text>
<rect x="411.3" y="891.6" width="286.9" height="1.6" fill="#9a9a9a"/>
<rect x="403.3" y="891.6" width="8" height="1.6" fill="#c8c8c8"/>
<text x="403.3" y="898.4" font-size="16.52" fill="#d8d8d8" text-anchor="end" textLength="28.4" lengthAdjust="spacingAndGlyphs" >102</text>
<rect x="411.3" y="933.2" width="286.9" height="1.6" fill="#9a9a9a"/>
<rect x="403.3" y="933.2" width="8" height="1.6" fill="#c8c8c8"/>
<text x="403.3" y="940.0" font-size="16.52" fill="#d8d8d8" text-anchor="end" textLength="28.4" lengthAdjust="spacingAndGlyphs" >100</text>
<rect x="411.3" y="974.8" width="286.9" height="1.6" fill="#9a9a9a"/>
<rect x="403.3" y="974.8" width="8" height="1.6" fill="#c8c8c8"/>
<text x="403.3" y="981.6" font-size="16.52" fill="#d8d8d8" text-anchor="end" textLength="18.9" lengthAdjust="spacingAndGlyphs" >98</text>
<rect x="411.3" y="1016.4" width="286.9" height="1.6" fill="#9a9a9a"/>
<rect x="403.3" y="1016.4" width="8" height="1.6" fill="#c8c8c8"/>
<text x="403.3" y="1023.2" font-size="16.52" fill="#d8d8d8" text-anchor="end" textLength="18.9" lengthAdjust="spacingAndGlyphs" >96</text>
<path d="M411.3 828.6H698.2V1037.5H411.3Z" fill="none" stroke="#a8a8a8" stroke-width="1.6"/>
<rect x="410.5" y="1037.5" width="1.6" height="6" fill="#c8c8c8"/><rect x="697.4" y="1037.5" width="1.6" height="6" fill="#c8c8c8"/>
<rect x="440" y="900" width="73.5" height="136.7" fill="url(#rb1)" stroke="#000" stroke-width="1.6"/>
<rect x="516.5" y="931" width="74.5" height="105.7" fill="url(#rb2)" stroke="#000" stroke-width="1.6"/>
<rect x="593.5" y="943.5" width="73.8" height="93.2" fill="url(#rb3)" stroke="#000" stroke-width="1.6"/>
<text x="554.6" y="1055.5" font-size="16.52" fill="#d8d8d8" text-anchor="middle" textLength="32.3" lengthAdjust="spacingAndGlyphs" >20%</text>
<rect x="721.5" y="800.5" width="1809.5" height="0" fill="none"/>
<rect x="722" y="801" width="1809" height="0" fill="none"/>
<rect x="721.5" y="800.5" width="809.5" height="234.5" fill="#1c1c1c"/>
<rect x="723" y="802.5" width="806.5" height="35" fill="url(#thead)"/>
<text x="985.6" y="828.3" font-size="18" fill="#f4f4f4" textLength="46.2" lengthAdjust="spacingAndGlyphs" font-family="Liberation Sans, sans-serif">20%</text>
<text x="1107.3" y="828.3" font-size="18" fill="#f4f4f4" textLength="46.9" lengthAdjust="spacingAndGlyphs" font-family="Liberation Sans, sans-serif">40%</text>
<text x="1229.5" y="828.3" font-size="18" fill="#f4f4f4" textLength="47.0" lengthAdjust="spacingAndGlyphs" font-family="Liberation Sans, sans-serif">60%</text>
<text x="1344.5" y="828.3" font-size="18" fill="#f4f4f4" textLength="47.0" lengthAdjust="spacingAndGlyphs" font-family="Liberation Sans, sans-serif">80%</text>
<text x="1446.3" y="828.3" font-size="18" fill="#f4f4f4" textLength="59.3" lengthAdjust="spacingAndGlyphs" font-family="Liberation Sans, sans-serif">100%</text>
<rect x="723" y="837.3" width="806.5" height="32.75" fill="#474747"/>
<text x="745.2" y="862.5" font-size="21" font-weight="bold" fill="#000" fill-opacity=".5" textLength="99" lengthAdjust="spacingAndGlyphs" font-family="Liberation Sans, sans-serif">x: CIE31</text>
<text x="744.2" y="861.5" font-size="21" font-weight="bold" stroke="#f6f6f6" stroke-width=".5" fill="#f6f6f6" textLength="99" lengthAdjust="spacingAndGlyphs" font-family="Liberation Sans, sans-serif">x: CIE31</text>
<text x="954.5" y="861.5" font-size="20.8" fill="#f0f0f0" textLength="78.5" lengthAdjust="spacingAndGlyphs" font-family="Liberation Sans, sans-serif">0,3930</text>
<text x="1076.8" y="861.5" font-size="20.8" fill="#f0f0f0" textLength="78.5" lengthAdjust="spacingAndGlyphs" font-family="Liberation Sans, sans-serif">0,4713</text>
<text x="1199.2" y="861.5" font-size="20.8" fill="#f0f0f0" textLength="78.5" lengthAdjust="spacingAndGlyphs" font-family="Liberation Sans, sans-serif">0,5433</text>
<text x="1321.3" y="861.5" font-size="20.8" fill="#f0f0f0" textLength="78.5" lengthAdjust="spacingAndGlyphs" font-family="Liberation Sans, sans-serif">0,6046</text>
<text x="1429.0" y="861.5" font-size="20.8" fill="#f0f0f0" textLength="78.5" lengthAdjust="spacingAndGlyphs" font-family="Liberation Sans, sans-serif">0,6657</text>
<rect x="723" y="870.0" width="806.5" height="32.75" fill="#848484"/>
<text x="745.2" y="895.2" font-size="21" font-weight="bold" fill="#000" fill-opacity=".5" textLength="99" lengthAdjust="spacingAndGlyphs" font-family="Liberation Sans, sans-serif">y: CIE31</text>
<text x="744.2" y="894.2" font-size="21" font-weight="bold" stroke="#f6f6f6" stroke-width=".5" fill="#f6f6f6" textLength="99" lengthAdjust="spacingAndGlyphs" font-family="Liberation Sans, sans-serif">y: CIE31</text>
<text x="954.5" y="894.2" font-size="20.8" fill="#f0f0f0" textLength="78.5" lengthAdjust="spacingAndGlyphs" font-family="Liberation Sans, sans-serif">0,3293</text>
<text x="1076.8" y="894.2" font-size="20.8" fill="#f0f0f0" textLength="78.5" lengthAdjust="spacingAndGlyphs" font-family="Liberation Sans, sans-serif">0,3271</text>
<text x="1199.2" y="894.2" font-size="20.8" fill="#f0f0f0" textLength="78.5" lengthAdjust="spacingAndGlyphs" font-family="Liberation Sans, sans-serif">0,3228</text>
<text x="1321.3" y="894.2" font-size="20.8" fill="#f0f0f0" textLength="78.5" lengthAdjust="spacingAndGlyphs" font-family="Liberation Sans, sans-serif">0,3222</text>
<text x="1429.0" y="894.2" font-size="20.8" fill="#f0f0f0" textLength="78.5" lengthAdjust="spacingAndGlyphs" font-family="Liberation Sans, sans-serif">0,3202</text>
<rect x="723" y="902.8" width="806.5" height="32.75" fill="#474747"/>
<text x="745.2" y="928.0" font-size="21" font-weight="bold" fill="#000" fill-opacity=".5" textLength="15.5" lengthAdjust="spacingAndGlyphs" font-family="Liberation Sans, sans-serif">Y</text>
<text x="744.2" y="927.0" font-size="21" font-weight="bold" stroke="#f6f6f6" stroke-width=".5" fill="#f6f6f6" textLength="15.5" lengthAdjust="spacingAndGlyphs" font-family="Liberation Sans, sans-serif">Y</text>
<text x="954.5" y="927.0" font-size="20.8" fill="#f0f0f0" textLength="108.0" lengthAdjust="spacingAndGlyphs" font-family="Liberation Sans, sans-serif">181,0678</text>
<text x="1076.8" y="927.0" font-size="20.8" fill="#f0f0f0" textLength="108.0" lengthAdjust="spacingAndGlyphs" font-family="Liberation Sans, sans-serif">128,2794</text>
<text x="1199.2" y="927.0" font-size="20.8" fill="#f0f0f0" textLength="108.0" lengthAdjust="spacingAndGlyphs" font-family="Liberation Sans, sans-serif">100,1237</text>
<text x="1321.3" y="927.0" font-size="20.8" fill="#f0f0f0" textLength="93.3" lengthAdjust="spacingAndGlyphs" font-family="Liberation Sans, sans-serif">85,0476</text>
<text x="1429.0" y="927.0" font-size="20.8" fill="#f0f0f0" textLength="93.3" lengthAdjust="spacingAndGlyphs" font-family="Liberation Sans, sans-serif">74,1066</text>
<rect x="723" y="935.5" width="806.5" height="32.75" fill="#848484"/>
<text x="745.2" y="960.8" font-size="21" font-weight="bold" fill="#000" fill-opacity=".5" textLength="180" lengthAdjust="spacingAndGlyphs" font-family="Liberation Sans, sans-serif">Target x:CIE31</text>
<text x="744.2" y="959.8" font-size="21" font-weight="bold" stroke="#f6f6f6" stroke-width=".5" fill="#f6f6f6" textLength="180" lengthAdjust="spacingAndGlyphs" font-family="Liberation Sans, sans-serif">Target x:CIE31</text>
<text x="954.5" y="959.8" font-size="20.8" fill="#f0f0f0" textLength="78.5" lengthAdjust="spacingAndGlyphs" font-family="Liberation Sans, sans-serif">0,3855</text>
<text x="1076.8" y="959.8" font-size="20.8" fill="#f0f0f0" textLength="78.5" lengthAdjust="spacingAndGlyphs" font-family="Liberation Sans, sans-serif">0,4551</text>
<text x="1199.2" y="959.8" font-size="20.8" fill="#f0f0f0" textLength="78.5" lengthAdjust="spacingAndGlyphs" font-family="Liberation Sans, sans-serif">0,5308</text>
<text x="1321.3" y="959.8" font-size="20.8" fill="#f0f0f0" textLength="78.5" lengthAdjust="spacingAndGlyphs" font-family="Liberation Sans, sans-serif">0,5978</text>
<text x="1429.0" y="959.8" font-size="20.8" fill="#f0f0f0" textLength="78.5" lengthAdjust="spacingAndGlyphs" font-family="Liberation Sans, sans-serif">0,6800</text>
<rect x="723" y="968.3" width="806.5" height="32.75" fill="#474747"/>
<text x="745.2" y="993.5" font-size="21" font-weight="bold" fill="#000" fill-opacity=".5" textLength="180" lengthAdjust="spacingAndGlyphs" font-family="Liberation Sans, sans-serif">Target y:CIE31</text>
<text x="744.2" y="992.5" font-size="21" font-weight="bold" stroke="#f6f6f6" stroke-width=".5" fill="#f6f6f6" textLength="180" lengthAdjust="spacingAndGlyphs" font-family="Liberation Sans, sans-serif">Target y:CIE31</text>
<text x="954.5" y="992.5" font-size="20.8" fill="#f0f0f0" textLength="78.5" lengthAdjust="spacingAndGlyphs" font-family="Liberation Sans, sans-serif">0,3272</text>
<text x="1076.8" y="992.5" font-size="20.8" fill="#f0f0f0" textLength="78.5" lengthAdjust="spacingAndGlyphs" font-family="Liberation Sans, sans-serif">0,3255</text>
<text x="1199.2" y="992.5" font-size="20.8" fill="#f0f0f0" textLength="78.5" lengthAdjust="spacingAndGlyphs" font-family="Liberation Sans, sans-serif">0,3237</text>
<text x="1321.3" y="992.5" font-size="20.8" fill="#f0f0f0" textLength="78.5" lengthAdjust="spacingAndGlyphs" font-family="Liberation Sans, sans-serif">0,3220</text>
<text x="1429.0" y="992.5" font-size="20.8" fill="#f0f0f0" textLength="78.5" lengthAdjust="spacingAndGlyphs" font-family="Liberation Sans, sans-serif">0,3200</text>
<rect x="723" y="1001.0" width="806.5" height="32.75" fill="#848484"/>
<text x="745.2" y="1026.2" font-size="21" font-weight="bold" fill="#000" fill-opacity=".5" textLength="105" lengthAdjust="spacingAndGlyphs" font-family="Liberation Sans, sans-serif">Target Y</text>
<text x="744.2" y="1025.2" font-size="21" font-weight="bold" stroke="#f6f6f6" stroke-width=".5" fill="#f6f6f6" textLength="105" lengthAdjust="spacingAndGlyphs" font-family="Liberation Sans, sans-serif">Target Y</text>
<text x="954.5" y="1025.2" font-size="20.8" fill="#f0f0f0" textLength="108.0" lengthAdjust="spacingAndGlyphs" font-family="Liberation Sans, sans-serif">177,2253</text>
<text x="1076.8" y="1025.2" font-size="20.8" fill="#f0f0f0" textLength="108.0" lengthAdjust="spacingAndGlyphs" font-family="Liberation Sans, sans-serif">128,2955</text>
<text x="1199.2" y="1025.2" font-size="20.8" fill="#f0f0f0" textLength="93.3" lengthAdjust="spacingAndGlyphs" font-family="Liberation Sans, sans-serif">98,3923</text>
<text x="1321.3" y="1025.2" font-size="20.8" fill="#f0f0f0" textLength="93.3" lengthAdjust="spacingAndGlyphs" font-family="Liberation Sans, sans-serif">81,4160</text>
<text x="1429.0" y="1025.2" font-size="20.8" fill="#f0f0f0" textLength="93.3" lengthAdjust="spacingAndGlyphs" font-family="Liberation Sans, sans-serif">67,0673</text>
<rect x="1" y="1112" width="1919" height="52" fill="url(#bbar)"/>
<rect x="0" y="1164" width="1920" height="1" fill="#1c1c1c"/><rect x="0" y="1165" width="1920" height="1" fill="#6e6e6e"/><rect x="1919" y="26" width="1" height="1140" fill="#6e6e6e"/>
<rect x="2" y="1112.5" width="36.5" height="52" rx="3" fill="url(#bbtn)"/>
<circle cx="20" cy="1121" r="6" fill="#7a7a7a"/><path d="M16 1122.5l4 -4l4 4z" fill="#2a2a2a"/>
<rect x="6.5" y="1135" width="28.5" height="25.5" rx="2" fill="#ff0000"/>
<rect x="44.7" y="1112.5" width="125.5" height="52" rx="3" fill="#242424"/>
<rect x="48.9" y="1117.5" width="117" height="29.5" rx="2.5" fill="#c68e8e"/>
<text x="107.2" y="1160.0" font-size="8.80" fill="#b0b0b0" text-anchor="middle" textLength="16.6" lengthAdjust="spacingAndGlyphs" >20%</text>
<rect x="171.9" y="1112.5" width="125.5" height="52" rx="3" fill="url(#bbtn)"/>
<rect x="176.1" y="1117.5" width="117" height="29.5" rx="2.5" fill="#c46a6a"/>
<text x="234.4" y="1160.0" font-size="8.80" fill="#c0c0c0" text-anchor="middle" textLength="16.6" lengthAdjust="spacingAndGlyphs" >40%</text>
<rect x="299.0" y="1112.5" width="125.5" height="52" rx="3" fill="url(#bbtn)"/>
<rect x="303.2" y="1117.5" width="117" height="29.5" rx="2.5" fill="#c44e4e"/>
<text x="361.5" y="1160.0" font-size="8.80" fill="#c0c0c0" text-anchor="middle" textLength="16.6" lengthAdjust="spacingAndGlyphs" >60%</text>
<rect x="426.2" y="1112.5" width="125.5" height="52" rx="3" fill="url(#bbtn)"/>
<rect x="430.4" y="1117.5" width="117" height="29.5" rx="2.5" fill="#c43232"/>
<text x="488.7" y="1160.0" font-size="8.80" fill="#c0c0c0" text-anchor="middle" textLength="16.6" lengthAdjust="spacingAndGlyphs" >80%</text>
<rect x="553.3" y="1112.5" width="125.5" height="52" rx="3" fill="url(#bbtn)"/>
<rect x="557.5" y="1117.5" width="117" height="29.5" rx="2.5" fill="#c40000"/>
<text x="615.8" y="1160.0" font-size="8.80" fill="#c0c0c0" text-anchor="middle" textLength="21.5" lengthAdjust="spacingAndGlyphs" >100%</text>
<rect x="1880" y="1113" width="40" height="26" fill="#2b2b2b"/>
<path d="M1649 1164.5V1116.5Q1649 1113.5 1652 1113.5H1685.5Q1688.5 1113.5 1688.5 1116.5V1164.5Z" fill="url(#bbt2)"/>
<path d="M1649 1128.5H1688.5" stroke="#5c5c5c"/><path d="M1649 1129.5H1688.5" stroke="#a0a0a0" stroke-opacity=".5"/>
<circle cx="1668.5" cy="1120.5" r="6" fill="#808080"/><path d="M1664.5 1122.5l4 -4l4 4z" fill="#2a2a2a"/>
<rect x="1656.5" y="1134.5" width="24.5" height="24.5" rx="2.5" fill="url(#stopg)" stroke="#222" stroke-width="1.7"/><rect x="1663" y="1141" width="11.5" height="11.5" fill="url(#stopk)"/>
<rect x="1690" y="1113.5" width="189.3" height="25" fill="url(#bbt2)"/>
<circle cx="1708.9" cy="1126" r="8" fill="#b0b0b0" fill-opacity=".55"/>
<path d="M1727.8 1113.5V1138.5" stroke="#5a5a5a"/><path d="M1728.8 1113.5V1138.5" stroke="#b0b0b0" stroke-opacity=".45"/>
<circle cx="1746.8" cy="1126" r="8" fill="#b0b0b0" fill-opacity=".55"/>
<path d="M1765.7 1113.5V1138.5" stroke="#5a5a5a"/><path d="M1766.7 1113.5V1138.5" stroke="#b0b0b0" stroke-opacity=".45"/>
<circle cx="1784.6" cy="1126" r="8" fill="#b0b0b0" fill-opacity=".55"/>
<path d="M1803.5 1113.5V1138.5" stroke="#5a5a5a"/><path d="M1804.5 1113.5V1138.5" stroke="#b0b0b0" stroke-opacity=".45"/>
<circle cx="1822.5" cy="1126" r="8" fill="#b0b0b0" fill-opacity=".55"/>
<path d="M1841.4 1113.5V1138.5" stroke="#5a5a5a"/><path d="M1842.4 1113.5V1138.5" stroke="#b0b0b0" stroke-opacity=".45"/>
<circle cx="1860.3" cy="1126" r="8" fill="#b0b0b0" fill-opacity=".55"/>
<rect x="1705.5" y="1122.5" width="7" height="7" fill="#2c2c2c"/>
<path d="M1744 1121.5l7 4.5l-7 4.5z" fill="#2c2c2c"/>
<path d="M1782.5 1121.5h-2v9h2M1787 1121.5h2v9h-2M1783.3 1126h1M1785.3 1126h1" fill="none" stroke="#2c2c2c" stroke-width="1.4"/>
<text x="1822.4" y="1130.5" font-size="14.00" fill="#2c2c2c" text-anchor="middle" >∞</text>
<path d="M1856.3 1125a4.2 4.2 0 0 1 7.5 -1.8M1864.2 1127a4.2 4.2 0 0 1 -7.5 1.8" fill="none" stroke="#2c2c2c" stroke-width="1.6"/><path d="M1865 1120.5v3.5h-3.5zM1855.5 1131.5v-3.5h3.5z" fill="#2c2c2c"/>
<circle cx="1898.3" cy="1125.8" r="8" fill="#3c3c3c"/>
<rect x="1690" y="1139.7" width="228" height="24.6" rx="1.5" fill="url(#bbt2)"/>
<path d="M1803.5 1139.7V1164.3" stroke="#5a5a5a"/><path d="M1804.5 1139.7V1164.3" stroke="#b0b0b0" stroke-opacity=".45"/>
<circle cx="1715.5" cy="1151.7" r="8" fill="#b4b4b4" fill-opacity=".55"/><circle cx="1894.2" cy="1151.7" r="8" fill="#b4b4b4" fill-opacity=".55"/>
<path d="M1715 1148l-3.2 3.7l3.2 3.7M1719 1148l-3.2 3.7l3.2 3.7M1891 1148l3.2 3.7l-3.2 3.7M1895 1148l3.2 3.7l-3.2 3.7" fill="none" stroke="#333" stroke-width="1.3"/>
<text x="1738.0" y="1158.5" font-size="19.00" fill="#2c2c2c" textLength="42.0" lengthAdjust="spacingAndGlyphs" stroke="#2c2c2c" stroke-width=".4">Back</text>
<text x="1827.5" y="1158.5" font-size="19.00" fill="#2c2c2c" textLength="43.0" lengthAdjust="spacingAndGlyphs" stroke="#2c2c2c" stroke-width=".4">Next</text>
</svg>
</body></html>
